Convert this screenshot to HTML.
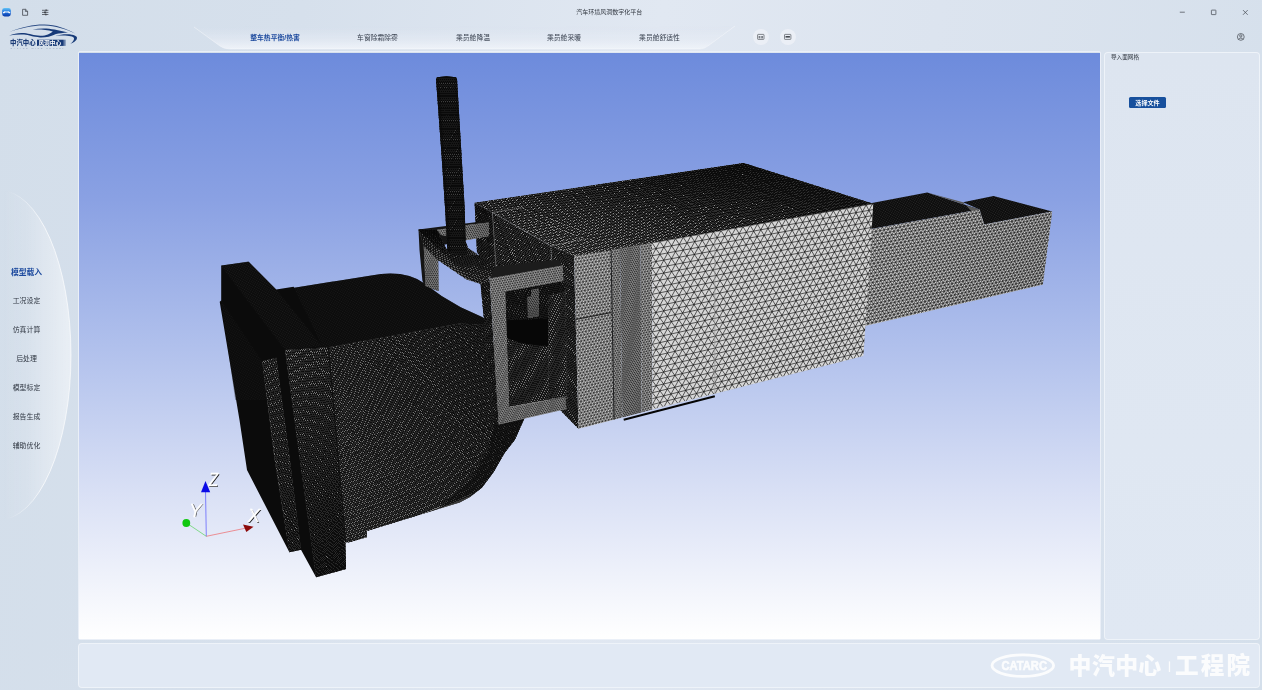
<!DOCTYPE html>
<html lang="zh-CN">
<head>
<meta charset="utf-8">
<title>汽车环境风洞数字化平台</title>
<style>
*{box-sizing:border-box;margin:0;padding:0}
html,body{width:1262px;height:690px;overflow:hidden}
body{font-family:"Liberation Sans","Noto Sans CJK SC",sans-serif;color:#2b3440;position:relative;
 background:linear-gradient(100deg,#d3deea 0%,#d6e0ec 22%,#e1e8f2 48%,#dce4ef 68%,#d4dfeb 100%)}
.abs{position:absolute}
#side,#tabs,#title,#rpanel,#bpanel,.logo{will-change:transform}
#title{left:0;width:1218.4px;top:7px;text-align:center;font-size:6px;line-height:10px;color:#30363f}
.winbtn{top:0;width:30px;height:24px}
#tabs{left:0;top:0;width:1262px;height:53px}
.tab{top:32.3px;height:12px;line-height:12px;font-size:6.8px;color:#3a4250;white-space:nowrap;transform:translateX(-50%)}
.tab.on{color:#1d4a9e;font-weight:bold}
.cbtn{width:16px;height:16px;border-radius:50%;background:rgba(236,240,246,.9);top:29px}
#side{left:0;top:53px;width:79px;height:637px}
.nav{left:0;width:53px;text-align:center;font-size:6.9px;line-height:12px;height:12px;color:#2f3641;white-space:nowrap}
.nav.on{color:#1d4a9e;font-weight:bold;font-size:7.8px}
#view{left:79px;top:53px;width:1021.3px;height:586px;background:linear-gradient(180deg,#6d8bdc 0%,#8aa1e3 25%,#b0c0ec 50%,#d9e0f5 75%,#ffffff 100%);overflow:hidden}
#viewborder{left:78px;top:51px;width:1023.3px;height:589px;border:1.5px solid rgba(236,241,248,.9);border-radius:2px}
#rpanel{left:1104px;top:52px;width:156px;height:588px;border:1px solid rgba(240,244,250,.9);border-radius:4px;background:linear-gradient(180deg,#dde5f0,#e0e8f3)}
#rpanel .h{left:6px;top:0.4px;font-size:5.6px;line-height:8px;color:#30363f}
#btn{left:24px;top:44.2px;width:37px;height:11.3px;border-radius:1.5px;background:#17509d;color:#fff;font-weight:bold;font-size:6.1px;line-height:11.3px;text-align:center}
#bpanel{left:78px;top:643px;width:1182px;height:45px;border:1px solid rgba(240,244,250,.9);border-radius:4px;background:#e1e9f4}
</style>
</head>
<body>
<div id="tabs" class="abs">
<svg class="abs" style="left:0;top:0" width="1262" height="53" viewBox="0 0 1262 53">
 <defs>
  <linearGradient id="tg" x1="0" y1="0" x2="0" y2="1"><stop offset="0" stop-color="#dfe6f1" stop-opacity="0"/><stop offset="1" stop-color="#eef2f8" stop-opacity="1"/></linearGradient>
 </defs>
 <path d="M194 27 L220 46 Q224 49 230 49 L700 49 Q704 49 708 46 L735 26 Z" fill="url(#tg)"/>
 <path d="M194 27 L220 46 Q224 49 230 49 L700 49 Q704 49 708 46 L735 26" fill="none" stroke="#f3f6fa" stroke-width="0.9" opacity="0.6"/>
</svg>
<div class="abs tab on" style="left:275px">整车热平衡/热害</div>
<div class="abs tab" style="left:377.5px">车窗除霜除雾</div>
<div class="abs tab" style="left:473px">乘员舱降温</div>
<div class="abs tab" style="left:564px">乘员舱采暖</div>
<div class="abs tab" style="left:659.5px">乘员舱舒适性</div>
<div class="abs cbtn" style="left:753px"></div>
<div class="abs cbtn" style="left:779.5px"></div>
</div>
<svg class="abs logo" style="left:0;top:0" width="90" height="54" viewBox="0 0 90 54">
 <defs><linearGradient id="ig" x1="0" y1="0" x2="0" y2="1"><stop offset="0" stop-color="#62c4f6"/><stop offset="0.5" stop-color="#1f6fdc"/><stop offset="1" stop-color="#0a3aa8"/></linearGradient>
 <linearGradient id="lb" x1="0" y1="0" x2="1" y2="0"><stop offset="0" stop-color="#173a78"/><stop offset="0.88" stop-color="#173a78"/><stop offset="1" stop-color="#173a78" stop-opacity="0.25"/></linearGradient></defs>
 <rect x="2.2" y="8" width="8.6" height="8.4" rx="2.3" fill="url(#ig)"/>
 <path d="M3 12.3 L4.6 11.2 L6 11.5 L7.2 11.5 L8.6 11.2 L10.2 12.3 L10.2 13.3 L8.8 13.3 L8.2 12.6 L5 12.6 L4.4 13.3 L3 13.3 Z" fill="#fff"/>
 <path d="M22.6 9.3 L25.6 9.3 L27.6 11.2 L27.6 15.3 L22.6 15.3 Z M25.4 9.4 L25.4 11.4 L27.5 11.4" fill="none" stroke="#3c4048" stroke-width="0.75" stroke-linejoin="round"/>
 <g stroke="#33363c" stroke-width="0.7" fill="none"><path d="M42 10.3H48.4M42 12.4H48.4M42 14.5H48.4"/></g>
 <g fill="#33363c"><rect x="45.6" y="9.4" width="1" height="1.8"/><rect x="44.2" y="11.5" width="1.6" height="1.8"/><rect x="45.4" y="13.6" width="1" height="1.8"/></g>
 <!-- car logo -->
 <g fill="#173a78">
  <path d="M9.2 32 C22 27 34 24.4 44.5 24.6 C56 24.8 66 28.5 75 33.4 C65 29.2 55.5 25.9 44.5 25.6 C34 25.3 22 28 9.2 32 Z" opacity="0.9"/>
  <path d="M9.2 35.6 C14 33.6 19 32.6 24 33.1 C30 33.7 34 36 41 35.8 C46 35.6 50.5 33.6 52.8 31.4 C47 29.7 40 29.3 32.6 29.6 C40 28 48 28.2 54.5 29.6 C59 30.6 64 31.6 68 32.4 C63 32.8 59 33.2 56 33.9 C51 36.6 45 37.6 40 37.4 C33 37.1 29 35 24 34.6 C19 34.2 14 34.8 9.2 35.6 Z"/>
  <path d="M55.5 35.9 C61 34.2 67 33.9 72 34.7 C76 35.4 78 37 76.6 39.4 C75.5 41.2 73 42.8 70.4 43.8 C72.6 42 74.4 39.8 74 38.2 C73.4 36 66 35 55.5 35.9 Z"/>
 </g>
 <text x="10.1" y="45.4" font-size="6.4" font-weight="900" fill="#1b3b76" font-family="'Liberation Sans','Noto Sans CJK SC',sans-serif">中汽中心</text>
 <rect x="37" y="39.7" width="29" height="6.2" fill="url(#lb)"/>
 <text x="38.4" y="44.9" font-size="5.7" font-weight="bold" fill="#fff" font-family="'Liberation Sans','Noto Sans CJK SC',sans-serif">风洞中心</text>
 <text x="10.4" y="49.3" font-size="2.3" fill="#8796b2" font-style="italic" letter-spacing="1.62" font-family="'Liberation Sans',sans-serif">CATARC WIND TUNNEL</text>
</svg>
<svg class="abs" style="left:1160px;top:0" width="102" height="50" viewBox="1160 0 102 50">
 <g stroke="#4a4f57" stroke-width="0.75" fill="none">
 <path d="M1179.8 12.2H1184.8"/><rect x="1211.4" y="10.1" width="4.5" height="4.5" rx="0.4"/><path d="M1243 10.1L1247.7 14.8M1247.7 10.1L1243 14.8"/>
 <circle cx="1240.8" cy="36.9" r="3.4"/><circle cx="1240.8" cy="35.9" r="1.15"/><path d="M1238.5 39.4C1239 37.6 1242.6 37.6 1243.1 39.4"/></g>
</svg>
<svg class="abs" style="left:750px;top:27px" width="50" height="20" viewBox="750 27 50 20">
 <g fill="none" stroke="#55595f" stroke-width="0.7"><rect x="757.6" y="34.4" width="6.4" height="5" rx="0.6"/><rect x="784.5" y="34.4" width="6.4" height="5" rx="0.6"/></g>
 <g fill="#7b7f86"><rect x="758.6" y="36" width="1.8" height="2.4"/><rect x="761.2" y="36" width="1.8" height="2.4"/><rect x="785.5" y="36" width="4.4" height="1.6" fill="#44484e"/></g>
</svg>
<div id="title" class="abs">汽车环境风洞数字化平台</div>

<div id="side" class="abs" style="top:0;height:690px">
<svg class="abs" style="left:0;top:0" width="79" height="690" viewBox="0 0 79 690">
 <defs>
  <linearGradient id="ag" x1="0" y1="0" x2="71" y2="0" gradientUnits="userSpaceOnUse"><stop offset="0" stop-color="#fff" stop-opacity="0"/><stop offset="0.35" stop-color="#fff" stop-opacity="0.08"/><stop offset="1" stop-color="#fff" stop-opacity="0.5"/></linearGradient>
  <linearGradient id="as" x1="0" y1="0" x2="71" y2="0" gradientUnits="userSpaceOnUse"><stop offset="0.1" stop-color="#fff" stop-opacity="0"/><stop offset="0.6" stop-color="#fff" stop-opacity="0.8"/><stop offset="1" stop-color="#fff" stop-opacity="0.7"/></linearGradient>
 </defs>
 <ellipse cx="-1" cy="355" rx="72" ry="165" fill="url(#ag)" stroke="url(#as)" stroke-width="0.9"/>
</svg>
<div class="abs nav on" style="top:267.4px">模型载入</div>
<div class="abs nav" style="top:295.0px">工况设定</div>
<div class="abs nav" style="top:323.5px">仿真计算</div>
<div class="abs nav" style="top:352.5px">后处理</div>
<div class="abs nav" style="top:381.5px">模型标定</div>
<div class="abs nav" style="top:410.5px">报告生成</div>
<div class="abs nav" style="top:439.5px">辅助优化</div>
</div>

<div id="viewborder" class="abs"></div>
<div id="view" class="abs">
<!--MODEL-->
<svg class="abs" style="left:0;top:0;filter:blur(0.45px)" width="1022" height="586" viewBox="79 53 1022 586" shape-rendering="auto">
<defs>
<pattern id="pd1" width="2" height="2" patternUnits="userSpaceOnUse" patternTransform="rotate(30)"><rect width="2" height="2" fill="#0c0c0c"/><rect width="1" height="1" fill="#2a2a2a"/></pattern>
<pattern id="pd2" width="2.2" height="2.2" patternUnits="userSpaceOnUse" patternTransform="rotate(20)"><rect width="2.2" height="2.2" fill="#1a1a1a"/><circle cx="1.1" cy="1.1" r="0.62" fill="#4c4c4c"/></pattern>
<pattern id="pd3" width="2" height="2" patternUnits="userSpaceOnUse" patternTransform="rotate(-12)"><rect width="2" height="2" fill="#1a1a1a"/><rect width="1" height="1" fill="#2e2e2e"/></pattern>
<pattern id="pf" width="2.4" height="2.4" patternUnits="userSpaceOnUse" patternTransform="rotate(-10)"><rect width="2.4" height="2.4" fill="#3a3a3a"/><circle cx="1.2" cy="1.2" r="0.85" fill="#c4c4c4"/></pattern>
<pattern id="pg" width="2" height="2" patternUnits="userSpaceOnUse" patternTransform="rotate(15)"><rect width="2" height="2" fill="#222"/><circle cx="1" cy="1" r="0.6" fill="#777"/></pattern>
</defs>
<polygon points="221.2,265.5 248.7,261.7 276.2,289.4 293.6,286.7 294.3,287.7 340.0,280.4 371.3,275.5 381.0,274.0 390.3,273.4 400.0,274.0 409.3,275.9 417.0,279.0 424.5,283.5 441.6,295.9 460.7,307.3 481.6,316.8 484.6,318.4 490.0,325.0 497.0,360.0 500.0,400.0 525.0,417.0 514.8,439.8 504.5,453.0 493.6,472.0 482.0,487.4 470.0,497.0 459.6,502.4 366.8,531.0 366.8,537.3 349.0,542.3 343.5,542.3 346.0,569.0 316.1,577.3 301.0,549.8 289.4,552.3 247.0,470.0 239.5,420.0 219.7,301.8 221.2,300.5" fill="#0b0b0b"/>
<polygon points="293.6,286.7 294.3,287.7 340.0,280.4 371.3,275.5 381.0,274.0 390.3,273.4 400.0,274.0 409.3,275.9 417.0,279.0 424.5,283.5 441.6,295.9 460.7,307.3 481.6,316.8 484.6,318.4 486.0,324.9 459.6,323.6 327.0,347.4 322.0,346.0" fill="url(#pd1)" opacity="0.45"/>
<polygon points="221.1,265.8 248.3,261.6 276.2,289.4 322.0,346.0 285.0,350.0" fill="url(#pd1)" opacity="0.55"/>
<polygon points="221.2,300.5 262.2,361.3 267.1,400.0 250.0,400.0 235.2,400.0" fill="url(#pd1)" opacity="0.35"/>
<clipPath id="c1"><polygon points="328.4,347.2 459.6,323.6 486.0,324.9 492.0,345.0 497.0,400.0 525.0,417.0 514.8,439.8 504.5,453.0 493.6,472.0 482.0,487.4 470.0,497.0 459.6,502.4 366.8,531.0 366.8,537.3 349.0,542.3 345.6,542.3 338.4,460.0 333.1,400.0"/></clipPath>
<polygon points="328.4,347.2 459.6,323.6 486.0,324.9 492.0,345.0 497.0,400.0 525.0,417.0 514.8,439.8 504.5,453.0 493.6,472.0 482.0,487.4 470.0,497.0 459.6,502.4 366.8,531.0 366.8,537.3 349.0,542.3 345.6,542.3 338.4,460.0 333.1,400.0" fill="#707070"/>
<path clip-path="url(#c1)" d="M324.1 348.0L502.8 316.0M324.3 349.7L503.0 317.3M324.4 351.4L503.3 318.7M324.6 353.1L503.6 320.0M324.7 354.8L503.8 321.4M324.9 356.5L504.1 322.7M325.0 358.2L504.4 324.1M325.1 359.9L504.6 325.4M325.3 361.7L504.9 326.8M325.4 363.4L505.2 328.1M325.6 365.1L505.4 329.5M325.7 366.9L505.7 330.8M325.9 368.6L506.0 332.2M326.0 370.3L506.2 333.6M326.2 372.1L506.5 334.9M326.3 373.8L506.8 336.3M326.5 375.6L507.0 337.7M326.6 377.3L507.3 339.0M326.8 379.1L507.6 340.4M326.9 380.9L507.9 341.8M327.1 382.6L508.1 343.2M327.2 384.4L508.4 344.6M327.4 386.2L508.7 345.9M327.5 388.0L508.9 347.3M327.7 389.8L509.2 348.7M327.8 391.5L509.5 350.1M328.0 393.3L509.8 351.5M328.1 395.1L510.0 352.9M328.3 396.9L510.3 354.3M328.4 398.7L510.6 355.7M328.6 400.5L510.9 357.1M328.7 402.3L511.1 358.5M328.9 404.2L511.4 359.9M329.0 406.0L511.7 361.3M329.2 407.8L512.0 362.7M329.3 409.6L512.3 364.2M329.5 411.5L512.5 365.6M329.6 413.3L512.8 367.0M329.8 415.1L513.1 368.4M330.0 417.0L513.4 369.8M330.1 418.8L513.7 371.3M330.3 420.7L513.9 372.7M330.4 422.5L514.2 374.1M330.6 424.4L514.5 375.6M330.7 426.2L514.8 377.0M330.9 428.1L515.1 378.4M331.1 430.0L515.4 379.9M331.2 431.9L515.7 381.3M331.4 433.7L515.9 382.8M331.5 435.6L516.2 384.2M331.7 437.5L516.5 385.7M331.8 439.4L516.8 387.1M332.0 441.3L517.1 388.6M332.2 443.2L517.4 390.1M332.3 445.1L517.7 391.5M332.5 447.0L517.9 393.0M332.6 448.9L518.2 394.5M332.8 450.8L518.5 395.9M333.0 452.7L518.8 397.4M333.1 454.7L519.1 398.9M333.3 456.6L519.4 400.4M333.5 458.5L519.7 401.8M333.6 460.5L520.0 403.3M333.8 462.4L520.3 404.8M334.0 464.4L520.6 406.3M334.1 466.3L520.9 407.8M334.3 468.3L521.2 409.3M334.4 470.2L521.5 410.8M334.6 472.2L521.8 412.3M334.8 474.2L522.0 413.8M334.9 476.1L522.3 415.3M335.1 478.1L522.6 416.8M335.3 480.1L522.9 418.3M335.4 482.1L523.2 419.8M335.6 484.1L523.5 421.3M335.8 486.1L523.8 422.8M335.9 488.0L524.1 424.4M336.1 490.1L524.4 425.9M336.3 492.1L524.7 427.4M336.5 494.1L525.0 428.9M336.6 496.1L525.3 430.5M336.8 498.1L525.6 432.0M337.0 500.1L525.9 433.5M337.1 502.2L526.3 435.1M337.3 504.2L526.6 436.6M337.5 506.2L526.9 438.2M337.7 508.3L527.2 439.7M337.8 510.3L527.5 441.3M338.0 512.4L527.8 442.8M338.2 514.4L528.1 444.4M338.3 516.5L528.4 445.9M338.5 518.6L528.7 447.5M338.7 520.7L529.0 449.1M338.9 522.7L529.3 450.6M339.0 524.8L529.6 452.2M339.2 526.9L529.9 453.8M339.4 529.0L530.2 455.3M339.6 531.1L530.6 456.9M339.8 533.2L530.9 458.5M339.9 535.3L531.2 460.1M340.1 537.4L531.5 461.7M340.3 539.5L531.8 463.3M340.5 541.6L532.1 464.9M340.6 543.8L532.4 466.5M340.8 545.9L532.8 468.1M341.0 548.0L533.1 469.7M154.4 378.3L340.3 547.1M154.4 378.3L-145.1 744.6M158.3 377.6L343.3 545.9M158.3 377.6L-138.0 741.7M162.1 377.0L346.3 544.7M162.1 377.0L-130.9 738.8M165.8 376.3L349.3 543.5M165.8 376.3L-123.9 735.9M169.6 375.6L352.2 542.3M169.6 375.6L-116.9 733.1M173.3 374.9L355.1 541.1M173.3 374.9L-110.1 730.3M177.0 374.3L358.0 540.0M177.0 374.3L-103.3 727.6M180.7 373.6L360.9 538.8M180.7 373.6L-96.6 724.8M184.3 373.0L363.7 537.6M184.3 373.0L-89.9 722.1M188.0 372.3L366.6 536.5M188.0 372.3L-83.3 719.4M191.6 371.7L369.4 535.3M191.6 371.7L-76.8 716.8M195.1 371.0L372.2 534.2M195.1 371.0L-70.3 714.2M198.7 370.4L375.0 533.1M198.7 370.4L-63.9 711.6M202.2 369.8L377.7 531.9M202.2 369.8L-57.6 709.0M205.7 369.2L380.5 530.8M205.7 369.2L-51.3 706.4M209.2 368.5L383.2 529.7M209.2 368.5L-45.1 703.9M212.6 367.9L385.9 528.6M212.6 367.9L-39.0 701.4M216.0 367.3L388.6 527.5M216.0 367.3L-32.9 698.9M219.4 366.7L391.3 526.4M219.4 366.7L-26.8 696.5M222.8 366.1L393.9 525.3M222.8 366.1L-20.9 694.1M226.2 365.5L396.6 524.3M226.2 365.5L-15.0 691.6M229.5 364.9L399.2 523.2M229.5 364.9L-9.1 689.3M232.8 364.3L401.8 522.1M232.8 364.3L-3.3 686.9M236.1 363.7L404.4 521.1M236.1 363.7L2.5 684.6M239.4 363.1L407.0 520.0M239.4 363.1L8.2 682.2M242.7 362.5L409.6 519.0M242.7 362.5L13.8 679.9M245.9 362.0L412.1 518.0M245.9 362.0L19.4 677.7M249.1 361.4L414.6 516.9M249.1 361.4L25.0 675.4M252.3 360.8L417.1 515.9M252.3 360.8L30.5 673.2M255.4 360.3L419.6 514.9M255.4 360.3L35.9 671.0M258.6 359.7L422.1 513.9M258.6 359.7L41.3 668.8M261.7 359.1L424.6 512.9M261.7 359.1L46.6 666.6M264.8 358.6L427.0 511.9M264.8 358.6L51.9 664.4M267.9 358.0L429.5 510.9M267.9 358.0L57.2 662.3M271.0 357.5L431.9 509.9M271.0 357.5L62.4 660.2M274.0 356.9L434.3 508.9M274.0 356.9L67.5 658.1M277.0 356.4L436.7 507.9M277.0 356.4L72.7 656.0M280.0 355.9L439.1 507.0M280.0 355.9L77.7 654.0M283.0 355.3L441.4 506.0M283.0 355.3L82.7 651.9M286.0 354.8L443.8 505.1M286.0 354.8L87.7 649.9M289.0 354.3L446.1 504.1M289.0 354.3L92.7 647.9M291.9 353.7L448.5 503.2M291.9 353.7L97.5 645.9M294.8 353.2L450.8 502.2M294.8 353.2L102.4 643.9M297.7 352.7L453.1 501.3M297.7 352.7L107.2 642.0M300.6 352.2L455.3 500.4M300.6 352.2L112.0 640.0M303.4 351.7L457.6 499.4M303.4 351.7L116.7 638.1M306.3 351.2L459.9 498.5M306.3 351.2L121.4 636.2M309.1 350.7L462.1 497.6M309.1 350.7L126.0 634.3M311.9 350.2L464.3 496.7M311.9 350.2L130.7 632.4M314.7 349.7L466.5 495.8M314.7 349.7L135.2 630.6M317.5 349.2L468.7 494.9M317.5 349.2L139.8 628.7M320.2 348.7L470.9 494.0M320.2 348.7L144.3 626.9M323.0 348.2L473.1 493.1M323.0 348.2L148.7 625.1M325.7 347.7L475.3 492.3M325.7 347.7L153.1 623.3M328.4 347.2L477.4 491.4M328.4 347.2L157.5 621.5M331.1 346.7L479.6 490.5M331.1 346.7L161.9 619.7M333.8 346.2L481.7 489.6M333.8 346.2L166.2 618.0M336.4 345.8L483.8 488.8M336.4 345.8L170.5 616.2M339.1 345.3L485.9 487.9M339.1 345.3L174.7 614.5M341.7 344.8L488.0 487.1M341.7 344.8L178.9 612.8M344.3 344.4L490.1 486.2M344.3 344.4L183.1 611.1M346.9 343.9L492.2 485.4M346.9 343.9L187.3 609.4M349.5 343.4L494.2 484.6M349.5 343.4L191.4 607.7M352.1 343.0L496.3 483.7M352.1 343.0L195.4 606.1M354.6 342.5L498.3 482.9M354.6 342.5L199.5 604.4M357.1 342.1L500.3 482.1M357.1 342.1L203.5 602.8M359.7 341.6L502.3 481.3M359.7 341.6L207.5 601.2M362.2 341.2L504.3 480.4M362.2 341.2L211.5 599.6M364.7 340.7L506.3 479.6M364.7 340.7L215.4 598.0M367.1 340.3L508.3 478.8M367.1 340.3L219.3 596.4M369.6 339.8L510.3 478.0M369.6 339.8L223.1 594.8M372.1 339.4L512.2 477.2M372.1 339.4L227.0 593.3M374.5 339.0L514.2 476.4M374.5 339.0L230.8 591.7M376.9 338.5L516.1 475.6M376.9 338.5L234.5 590.2M379.3 338.1L518.0 474.9M379.3 338.1L238.3 588.6M381.7 337.7L520.0 474.1M381.7 337.7L242.0 587.1M384.1 337.2L521.9 473.3M384.1 337.2L245.7 585.6M386.5 336.8L523.8 472.5M386.5 336.8L249.4 584.1M388.8 336.4L525.6 471.8M388.8 336.4L253.0 582.7M391.2 336.0L527.5 471.0M391.2 336.0L256.6 581.2M393.5 335.6L529.4 470.3M393.5 335.6L260.2 579.7M395.8 335.1L531.2 469.5M395.8 335.1L263.8 578.3M398.1 334.7L533.1 468.7M398.1 334.7L267.3 576.9M400.4 334.3L534.9 468.0M400.4 334.3L270.8 575.4M402.7 333.9L536.7 467.3M402.7 333.9L274.3 574.0M405.0 333.5L538.6 466.5M405.0 333.5L277.7 572.6M407.2 333.1L540.4 465.8M407.2 333.1L281.2 571.2M409.4 332.7L542.2 465.1M409.4 332.7L284.6 569.8M411.7 332.3L543.9 464.3M411.7 332.3L287.9 568.4M413.9 331.9L545.7 463.6M413.9 331.9L291.3 567.1M416.1 331.5L547.5 462.9M416.1 331.5L294.6 565.7M418.3 331.1L549.2 462.2M418.3 331.1L297.9 564.4M420.5 330.7L551.0 461.5M420.5 330.7L301.2 563.0M422.6 330.3L552.7 460.8M422.6 330.3L304.5 561.7M424.8 330.0L554.5 460.0M424.8 330.0L307.7 560.4M426.9 329.6L556.2 459.3M426.9 329.6L310.9 559.1M429.1 329.2L557.9 458.6M429.1 329.2L314.1 557.8M431.2 328.8L559.6 458.0M431.2 328.8L317.3 556.5M433.3 328.4L561.3 457.3M433.3 328.4L320.5 555.2M435.4 328.1L563.0 456.6M435.4 328.1L323.6 554.0M437.5 327.7L564.7 455.9M437.5 327.7L326.7 552.7M439.6 327.3L566.4 455.2M439.6 327.3L329.8 551.4M441.6 326.9L568.0 454.5M441.6 326.9L332.8 550.2M443.7 326.6L569.7 453.9M443.7 326.6L335.9 548.9M445.7 326.2L571.3 453.2M445.7 326.2L338.9 547.7M447.8 325.8L573.0 452.5M447.8 325.8L341.9 546.5M449.8 325.5L574.6 451.9M449.8 325.5L344.9 545.3M451.8 325.1L576.2 451.2M451.8 325.1L347.9 544.1M453.8 324.8L577.8 450.5M453.8 324.8L350.8 542.9M455.8 324.4L579.4 449.9M455.8 324.4L353.7 541.7M457.8 324.0L581.0 449.2M457.8 324.0L356.6 540.5M459.8 323.7L582.6 448.6M459.8 323.7L359.5 539.3M461.7 323.3L584.2 448.0M461.7 323.3L362.4 538.2M463.7 323.0L585.8 447.3M463.7 323.0L365.2 537.0M465.6 322.6L587.3 446.7M465.6 322.6L368.1 535.9M467.6 322.3L588.9 446.0M467.6 322.3L370.9 534.7M469.5 322.0L590.5 445.4M469.5 322.0L373.7 533.6M471.4 321.6L592.0 444.8M471.4 321.6L376.4 532.5M473.3 321.3L593.5 444.2M473.3 321.3L379.2 531.3M475.2 320.9L595.1 443.5M475.2 320.9L381.9 530.2M477.1 320.6L596.6 442.9M477.1 320.6L384.6 529.1M479.0 320.3L598.1 442.3M479.0 320.3L387.3 528.0M480.8 319.9L599.6 441.7M480.8 319.9L390.0 526.9M482.7 319.6L601.1 441.1M482.7 319.6L392.7 525.8M484.5 319.3L602.6 440.5M484.5 319.3L395.3 524.8M486.4 318.9L604.1 439.9M486.4 318.9L398.0 523.7M488.2 318.6L605.6 439.3M488.2 318.6L400.6 522.6M490.0 318.3L607.0 438.7M490.0 318.3L403.2 521.6M491.8 318.0L608.5 438.1M491.8 318.0L405.8 520.5M493.6 317.6L610.0 437.5M493.6 317.6L408.3 519.5M495.4 317.3L611.4 436.9M495.4 317.3L410.9 518.4M497.2 317.0L612.9 436.3M497.2 317.0L413.4 517.4M499.0 316.7L614.3 435.7M499.0 316.7L416.0 516.4M500.8 316.4L615.7 435.1M500.8 316.4L418.5 515.4M502.5 316.0L617.2 434.6M502.5 316.0L420.9 514.4M504.3 315.7L618.6 434.0M504.3 315.7L423.4 513.3M506.0 315.4L620.0 433.4M506.0 315.4L425.9 512.3M507.7 315.1L621.4 432.8M507.7 315.1L428.3 511.4M509.5 314.8L622.8 432.3M509.5 314.8L430.8 510.4M511.2 314.5L624.2 431.7M511.2 314.5L433.2 509.4M512.9 314.2L625.6 431.1M512.9 314.2L435.6 508.4M514.6 313.9L626.9 430.6M514.6 313.9L438.0 507.4M516.3 313.6L628.3 430.0M516.3 313.6L440.3 506.5M518.0 313.3L629.7 429.5M518.0 313.3L442.7 505.5M519.6 313.0L631.0 428.9M519.6 313.0L445.0 504.6M521.3 312.7L632.4 428.4M521.3 312.7L447.4 503.6M523.0 312.4L633.7 427.8M523.0 312.4L449.7 502.7M524.6 312.1L635.1 427.3M524.6 312.1L452.0 501.7M526.3 311.8L636.4 426.7M526.3 311.8L454.3 500.8M527.9 311.5L637.8 426.2M527.9 311.5L456.5 499.9M529.5 311.2L639.1 425.6M529.5 311.2L458.8 499.0M531.2 310.9L640.4 425.1M531.2 310.9L461.0 498.0M532.8 310.6L641.7 424.6M532.8 310.6L463.3 497.1M534.4 310.3L643.0 424.0M534.4 310.3L465.5 496.2M536.0 310.1L644.3 423.5M536.0 310.1L467.7 495.3M537.6 309.8L645.6 423.0M537.6 309.8L469.9 494.4M539.2 309.5L646.9 422.5M539.2 309.5L472.1 493.6M540.7 309.2L648.2 421.9M540.7 309.2L474.3 492.7M542.3 308.9L649.5 421.4M542.3 308.9L476.4 491.8M543.9 308.6L650.7 420.9M543.9 308.6L478.6 490.9M545.4 308.4L652.0 420.4M545.4 308.4L480.7 490.1M547.0 308.1L653.3 419.9M547.0 308.1L482.8 489.2M548.5 307.8L654.5 419.4M548.5 307.8L484.9 488.3M550.1 307.5L655.8 418.8M550.1 307.5L487.0 487.5M551.6 307.3L657.0 418.3M551.6 307.3L489.1 486.6M553.1 307.0L658.2 417.8M553.1 307.0L491.2 485.8M554.6 306.7L659.5 417.3M554.6 306.7L493.3 484.9M556.1 306.5L660.7 416.8M556.1 306.5L495.3 484.1M557.6 306.2L661.9 416.3M557.6 306.2L497.3 483.3M559.1 305.9L663.1 415.8M559.1 305.9L499.4 482.5M560.6 305.7L664.4 415.4M560.6 305.7L501.4 481.6M562.1 305.4L665.6 414.9M562.1 305.4L503.4 480.8M563.6 305.1L666.8 414.4M563.6 305.1L505.4 480.0M565.1 304.9L668.0 413.9M565.1 304.9L507.4 479.2M566.5 304.6L669.2 413.4M566.5 304.6L509.3 478.4M568.0 304.3L670.3 412.9M568.0 304.3L511.3 477.6M569.4 304.1L671.5 412.4M569.4 304.1L513.3 476.8M570.9 303.8L672.7 412.0M570.9 303.8L515.2 476.0M572.3 303.6L673.9 411.5M572.3 303.6L517.1 475.2M573.7 303.3L675.0 411.0M573.7 303.3L519.1 474.5M575.2 303.1L676.2 410.5M575.2 303.1L521.0 473.7M576.6 302.8L677.4 410.1M576.6 302.8L522.9 472.9M578.0 302.5L678.5 409.6M578.0 302.5L524.7 472.1M579.4 302.3L679.7 409.1M579.4 302.3L526.6 471.4M580.8 302.0L680.8 408.7M580.8 302.0L528.5 470.6M582.2 301.8L681.9 408.2M582.2 301.8L530.4 469.9M583.6 301.5L683.1 407.7M583.6 301.5L532.2 469.1" stroke="#050505" stroke-width="0.7" fill="none" opacity="1" shape-rendering="crispEdges"/>
<polygon points="497.0,400.0 525.0,417.0 514.8,439.8 504.5,453.0 493.6,472.0 482.0,487.4 470.0,497.0 459.6,502.4 440.0,508.0 470.0,480.0 488.0,450.0 495.0,420.0" fill="#0b0b0b" opacity="0.55"/>
<clipPath id="c2"><polygon points="285.0,350.0 328.4,347.2 333.1,400.0 338.4,460.0 345.6,542.3 346.0,569.0 316.1,577.3 299.9,460.0 291.8,400.0"/></clipPath>
<polygon points="285.0,350.0 328.4,347.2 333.1,400.0 338.4,460.0 345.6,542.3 346.0,569.0 316.1,577.3 299.9,460.0 291.8,400.0" fill="#767676"/>
<path clip-path="url(#c2)" d="M284.1 350.1L329.2 347.1M284.5 352.7L329.4 349.7M284.8 355.3L329.6 352.2M285.2 357.9L329.8 354.7M285.5 360.4L330.0 357.1M285.9 363.0L330.2 359.6M286.2 365.5L330.4 362.0M286.6 368.0L330.6 364.4M286.9 370.5L330.8 366.8M287.3 373.0L331.0 369.2M287.6 375.4L331.1 371.6M287.9 377.9L331.3 374.0M288.3 380.3L331.5 376.3M288.6 382.7L331.7 378.6M288.9 385.1L331.9 381.0M289.3 387.5L332.1 383.3M289.6 389.9L332.2 385.5M289.9 392.2L332.4 387.8M290.2 394.5L332.6 390.1M290.6 396.9L332.8 392.3M290.9 399.2L332.9 394.5M291.2 401.4L333.1 396.8M291.5 403.7L333.3 399.0M291.8 406.0L333.5 401.2M292.1 408.2L333.6 403.3M292.4 410.5L333.8 405.5M292.7 412.7L334.0 407.6M293.0 414.9L334.1 409.8M293.3 417.1L334.3 411.9M293.6 419.2L334.5 414.0M293.9 421.4L334.6 416.1M294.2 423.5L334.8 418.2M294.5 425.7L335.0 420.3M294.8 427.8L335.1 422.3M295.1 429.9L335.3 424.4M295.4 432.0L335.4 426.4M295.7 434.1L335.6 428.4M296.0 436.2L335.8 430.4M296.3 438.2L335.9 432.4M296.5 440.3L336.1 434.4M296.8 442.3L336.2 436.4M297.1 444.3L336.4 438.4M297.4 446.3L336.5 440.3M297.7 448.3L336.7 442.3M297.9 450.3L336.8 444.2M298.2 452.3L337.0 446.1M298.5 454.2L337.1 448.0M298.7 456.2L337.3 449.9M299.0 458.1L337.4 451.8M299.3 460.0L337.6 453.7M299.5 461.9L337.7 455.5M299.8 463.8L337.9 457.4M300.1 465.7L338.0 459.2M300.3 467.6L338.1 461.1M300.6 469.5L338.3 462.9M300.8 471.3L338.4 464.7M301.1 473.2L338.6 466.5M301.3 475.0L338.7 468.3M301.6 476.9L338.9 470.1M301.8 478.7L339.0 471.9M302.1 480.5L339.1 473.6M302.3 482.3L339.3 475.4M302.6 484.1L339.4 477.1M302.8 485.8L339.5 478.8M303.1 487.6L339.7 480.6M303.3 489.3L339.8 482.3M303.6 491.1L339.9 484.0M303.8 492.8L340.1 485.7M304.0 494.6L340.2 487.4M304.3 496.3L340.3 489.1M304.5 498.0L340.5 490.7M304.7 499.7L340.6 492.4M305.0 501.4L340.7 494.0M305.2 503.0L340.9 495.7M305.4 504.7L341.0 497.3M305.7 506.4L341.1 498.9M305.9 508.0L341.2 500.5M306.1 509.7L341.4 502.2M306.3 511.3L341.5 503.8M306.6 512.9L341.6 505.3M306.8 514.5L341.7 506.9M307.0 516.1L341.9 508.5M307.2 517.7L342.0 510.1M307.5 519.3L342.1 511.6M307.7 520.9L342.2 513.2M307.9 522.5L342.3 514.7M308.1 524.0L342.5 516.3M308.3 525.6L342.6 517.8M308.5 527.1L342.7 519.3M308.7 528.7L342.8 520.8M309.0 530.2L342.9 522.3M309.2 531.7L343.1 523.8M309.4 533.2L343.2 525.3M309.6 534.7L343.3 526.8M309.8 536.2L343.4 528.2M310.0 537.7L343.5 529.7M310.2 539.2L343.6 531.2M310.4 540.7L343.7 532.6M310.6 542.2L343.9 534.1M310.8 543.6L344.0 535.5M311.0 545.1L344.1 536.9M311.2 546.5L344.2 538.3M311.4 548.0L344.3 539.8M311.6 549.4L344.4 541.2M311.8 550.8L344.5 542.6M312.0 552.2L344.6 544.0M312.2 553.6L344.7 545.3M312.4 555.0L344.9 546.7M312.6 556.4L345.0 548.1M312.8 557.8L345.1 549.5M313.0 559.2L345.2 550.8M313.2 560.6L345.3 552.2M313.3 561.9L345.4 553.5M313.5 563.3L345.5 554.9M313.7 564.7L345.6 556.2M313.9 566.0L345.7 557.5M314.1 567.3L345.8 558.9M314.3 568.7L345.9 560.2M314.5 570.0L346.0 561.5M314.6 571.3L346.1 562.8M314.8 572.6L346.2 564.1M315.0 573.9L346.3 565.4M315.2 575.3L346.4 566.6M315.4 576.5L346.5 567.9M315.5 577.8L346.6 569.2M126.1 360.3L314.4 577.8M126.1 360.3L89.0 640.3M129.0 360.1L315.9 577.4M129.0 360.1L91.2 639.7M131.8 359.9L317.4 576.9M131.8 359.9L93.4 639.1M134.7 359.7L318.9 576.5M134.7 359.7L95.6 638.5M137.5 359.5L320.4 576.1M137.5 359.5L97.7 637.9M140.3 359.3L321.9 575.7M140.3 359.3L99.9 637.3M143.1 359.2L323.3 575.3M143.1 359.2L102.1 636.7M146.0 359.0L324.8 574.9M146.0 359.0L104.2 636.1M148.7 358.8L326.3 574.5M148.7 358.8L106.4 635.5M151.5 358.6L327.8 574.1M151.5 358.6L108.5 634.9M154.3 358.4L329.2 573.7M154.3 358.4L110.7 634.3M157.0 358.3L330.7 573.2M157.0 358.3L112.8 633.7M159.8 358.1L332.2 572.8M159.8 358.1L114.9 633.2M162.5 357.9L333.6 572.4M162.5 357.9L117.0 632.6M165.2 357.7L335.1 572.0M165.2 357.7L119.1 632.0M167.9 357.6L336.5 571.6M167.9 357.6L121.2 631.4M170.6 357.4L338.0 571.2M170.6 357.4L123.3 630.8M173.3 357.2L339.4 570.8M173.3 357.2L125.4 630.2M176.0 357.0L340.8 570.4M176.0 357.0L127.5 629.7M178.6 356.9L342.3 570.0M178.6 356.9L129.5 629.1M181.3 356.7L343.7 569.6M181.3 356.7L131.6 628.5M183.9 356.5L345.1 569.2M183.9 356.5L133.7 627.9M186.5 356.4L346.5 568.8M186.5 356.4L135.7 627.4M189.1 356.2L348.0 568.5M189.1 356.2L137.8 626.8M191.7 356.0L349.4 568.1M191.7 356.0L139.8 626.2M194.3 355.9L350.8 567.7M194.3 355.9L141.8 625.7M196.9 355.7L352.2 567.3M196.9 355.7L143.9 625.1M199.4 355.5L353.6 566.9M199.4 355.5L145.9 624.6M202.0 355.4L355.0 566.5M202.0 355.4L147.9 624.0M204.5 355.2L356.4 566.1M204.5 355.2L149.9 623.4M207.1 355.0L357.8 565.7M207.1 355.0L151.9 622.9M209.6 354.9L359.2 565.3M209.6 354.9L153.9 622.3M212.1 354.7L360.5 565.0M212.1 354.7L155.9 621.8M214.6 354.5L361.9 564.6M214.6 354.5L157.8 621.2M217.1 354.4L363.3 564.2M217.1 354.4L159.8 620.7M219.6 354.2L364.7 563.8M219.6 354.2L161.8 620.1M222.1 354.1L366.0 563.4M222.1 354.1L163.7 619.6M224.5 353.9L367.4 563.1M224.5 353.9L165.7 619.1M227.0 353.7L368.8 562.7M227.0 353.7L167.6 618.5M229.4 353.6L370.1 562.3M229.4 353.6L169.6 618.0M231.8 353.4L371.5 561.9M231.8 353.4L171.5 617.4M234.2 353.3L372.8 561.6M234.2 353.3L173.5 616.9M236.7 353.1L374.2 561.2M236.7 353.1L175.4 616.4M239.0 353.0L375.5 560.8M239.0 353.0L177.3 615.8M241.4 352.8L376.8 560.4M241.4 352.8L179.2 615.3M243.8 352.7L378.2 560.1M243.8 352.7L181.1 614.8M246.2 352.5L379.5 559.7M246.2 352.5L183.0 614.2M248.5 352.4L380.8 559.3M248.5 352.4L184.9 613.7M250.9 352.2L382.2 559.0M250.9 352.2L186.8 613.2M253.2 352.0L383.5 558.6M253.2 352.0L188.7 612.7M255.6 351.9L384.8 558.2M255.6 351.9L190.5 612.2M257.9 351.7L386.1 557.9M257.9 351.7L192.4 611.6M260.2 351.6L387.4 557.5M260.2 351.6L194.3 611.1M262.5 351.5L388.7 557.1M262.5 351.5L196.1 610.6M264.8 351.3L390.0 556.8M264.8 351.3L198.0 610.1M267.1 351.2L391.3 556.4M267.1 351.2L199.8 609.6M269.3 351.0L392.6 556.1M269.3 351.0L201.7 609.1M271.6 350.9L393.9 555.7M271.6 350.9L203.5 608.6M273.9 350.7L395.2 555.3M273.9 350.7L205.3 608.0M276.1 350.6L396.5 555.0M276.1 350.6L207.2 607.5M278.3 350.4L397.8 554.6M278.3 350.4L209.0 607.0M280.6 350.3L399.1 554.3M280.6 350.3L210.8 606.5M282.8 350.1L400.4 553.9M282.8 350.1L212.6 606.0M285.0 350.0L401.6 553.6M285.0 350.0L214.4 605.5M287.2 349.9L402.9 553.2M287.2 349.9L216.2 605.0M289.4 349.7L404.2 552.9M289.4 349.7L218.0 604.5M291.6 349.6L405.4 552.5M291.6 349.6L219.8 604.0M293.8 349.4L406.7 552.2M293.8 349.4L221.6 603.5M295.9 349.3L407.9 551.8M295.9 349.3L223.3 603.0M298.1 349.2L409.2 551.5M298.1 349.2L225.1 602.6M300.2 349.0L410.5 551.1M300.2 349.0L226.9 602.1M302.4 348.9L411.7 550.8M302.4 348.9L228.6 601.6M304.5 348.7L412.9 550.4M304.5 348.7L230.4 601.1M306.6 348.6L414.2 550.1M306.6 348.6L232.1 600.6M308.7 348.5L415.4 549.7M308.7 348.5L233.9 600.1M310.9 348.3L416.7 549.4M310.9 348.3L235.6 599.6M313.0 348.2L417.9 549.0M313.0 348.2L237.3 599.2M315.0 348.1L419.1 548.7M315.0 348.1L239.1 598.7M317.1 347.9L420.4 548.4M317.1 347.9L240.8 598.2M319.2 347.8L421.6 548.0M319.2 347.8L242.5 597.7M321.3 347.7L422.8 547.7M321.3 347.7L244.2 597.3M323.3 347.5L424.0 547.3M323.3 347.5L245.9 596.8M325.4 347.4L425.2 547.0M325.4 347.4L247.6 596.3M327.4 347.3L426.4 546.7M327.4 347.3L249.3 595.8M329.5 347.1L427.7 546.3M329.5 347.1L251.0 595.4M331.5 347.0L428.9 546.0M331.5 347.0L252.7 594.9M333.5 346.9L430.1 545.7M333.5 346.9L254.4 594.4M335.5 346.7L431.3 545.3M335.5 346.7L256.1 594.0M337.5 346.6L432.5 545.0M337.5 346.6L257.7 593.5M339.5 346.5L433.6 544.7M339.5 346.5L259.4 593.0M341.5 346.4L434.8 544.3M341.5 346.4L261.1 592.6M343.5 346.2L436.0 544.0M343.5 346.2L262.7 592.1M345.5 346.1L437.2 543.7M345.5 346.1L264.4 591.7M347.4 346.0L438.4 543.4M347.4 346.0L266.0 591.2M349.4 345.8L439.6 543.0M349.4 345.8L267.7 590.7M351.4 345.7L440.7 542.7M351.4 345.7L269.3 590.3M353.3 345.6L441.9 542.4M353.3 345.6L270.9 589.8M355.2 345.5L443.1 542.0M355.2 345.5L272.6 589.4M357.2 345.3L444.3 541.7M357.2 345.3L274.2 588.9M359.1 345.2L445.4 541.4M359.1 345.2L275.8 588.5M361.0 345.1L446.6 541.1M361.0 345.1L277.4 588.0M362.9 345.0L447.7 540.8M362.9 345.0L279.0 587.6M364.8 344.8L448.9 540.4M364.8 344.8L280.6 587.1M366.7 344.7L450.0 540.1M366.7 344.7L282.2 586.7M368.6 344.6L451.2 539.8M368.6 344.6L283.8 586.3M370.5 344.5L452.3 539.5M370.5 344.5L285.4 585.8M372.4 344.4L453.5 539.2M372.4 344.4L287.0 585.4M374.2 344.2L454.6 538.8M374.2 344.2L288.6 584.9M376.1 344.1L455.8 538.5M376.1 344.1L290.2 584.5M378.0 344.0L456.9 538.2M378.0 344.0L291.7 584.1M379.8 343.9L458.0 537.9M379.8 343.9L293.3 583.6M381.6 343.8L459.2 537.6M381.6 343.8L294.9 583.2M383.5 343.6L460.3 537.3M383.5 343.6L296.4 582.8M385.3 343.5L461.4 537.0M385.3 343.5L298.0 582.3M387.1 343.4L462.5 536.6M387.1 343.4L299.5 581.9M388.9 343.3L463.7 536.3M388.9 343.3L301.1 581.5M390.8 343.2L464.8 536.0M390.8 343.2L302.6 581.0M392.6 343.1L465.9 535.7M392.6 343.1L304.2 580.6M394.3 342.9L467.0 535.4M394.3 342.9L305.7 580.2M396.1 342.8L468.1 535.1M396.1 342.8L307.2 579.8M397.9 342.7L469.2 534.8M397.9 342.7L308.8 579.3M399.7 342.6L470.3 534.5M399.7 342.6L310.3 578.9M401.5 342.5L471.4 534.2M401.5 342.5L311.8 578.5M403.2 342.4L472.5 533.9M403.2 342.4L313.3 578.1M405.0 342.3L473.6 533.6M405.0 342.3L314.8 577.7M406.7 342.1L474.7 533.3M406.7 342.1L316.3 577.2M408.5 342.0L475.8 533.0M408.5 342.0L317.8 576.8M410.2 341.9L476.9 532.7M410.2 341.9L319.3 576.4M412.0 341.8L478.0 532.4M412.0 341.8L320.8 576.0M413.7 341.7L479.1 532.1M413.7 341.7L322.3 575.6M415.4 341.6L480.1 531.8M415.4 341.6L323.8 575.2M417.1 341.5L481.2 531.5M417.1 341.5L325.2 574.8M418.8 341.4L482.3 531.2M418.8 341.4L326.7 574.4M420.5 341.3L483.4 530.9M420.5 341.3L328.2 573.9M422.2 341.1L484.4 530.6M422.2 341.1L329.7 573.5M423.9 341.0L485.5 530.3M423.9 341.0L331.1 573.1M425.6 340.9L486.6 530.0M425.6 340.9L332.6 572.7M427.3 340.8L487.6 529.7M427.3 340.8L334.0 572.3M428.9 340.7L488.7 529.4M428.9 340.7L335.5 571.9M430.6 340.6L489.7 529.1M430.6 340.6L336.9 571.5M432.3 340.5L490.8 528.8M432.3 340.5L338.4 571.1M433.9 340.4L491.9 528.5M433.9 340.4L339.8 570.7M435.6 340.3L492.9 528.2M435.6 340.3L341.2 570.3M437.2 340.2L494.0 527.9M437.2 340.2L342.7 569.9M438.9 340.1L495.0 527.6M438.9 340.1L344.1 569.5M440.5 340.0L496.0 527.3M440.5 340.0L345.5 569.1M442.1 339.9L497.1 527.1M442.1 339.9L346.9 568.7" stroke="#050505" stroke-width="0.7" fill="none" opacity="1" shape-rendering="crispEdges"/>
<path d="M328.4 347.2L333.1 400L338.4 460L345.6 542.3" stroke="#0b0b0b" stroke-width="1" fill="none"/>
<clipPath id="c3"><polygon points="262.2,361.3 276.3,357.8 281.8,400.0 289.9,460.0 301.0,549.8 289.4,552.3 274.7,460.0 267.1,400.0"/></clipPath>
<polygon points="262.2,361.3 276.3,357.8 281.8,400.0 289.9,460.0 301.0,549.8 289.4,552.3 274.7,460.0 267.1,400.0" fill="#727272"/>
<path clip-path="url(#c3)" d="M261.9 361.4L276.6 357.7M262.2 363.6L276.9 359.9M262.5 365.8L277.2 362.2M262.9 368.0L277.4 364.4M263.2 370.1L277.7 366.5M263.5 372.3L278.0 368.7M263.8 374.5L278.3 370.9M264.1 376.6L278.5 373.1M264.4 378.7L278.8 375.2M264.7 380.9L279.1 377.3M265.0 383.0L279.4 379.5M265.3 385.1L279.6 381.6M265.6 387.2L279.9 383.7M265.9 389.3L280.2 385.8M266.2 391.4L280.5 387.9M266.5 393.5L280.7 390.0M266.8 395.6L281.0 392.1M267.1 397.6L281.3 394.2M267.4 399.7L281.5 396.3M267.7 401.7L281.8 398.3M268.0 403.8L282.1 400.4M268.3 405.8L282.3 402.4M268.5 407.8L282.6 404.4M268.8 409.8L282.8 406.5M269.1 411.8L283.1 408.5M269.4 413.8L283.4 410.5M269.7 415.8L283.6 412.5M270.0 417.8L283.9 414.5M270.3 419.8L284.1 416.5M270.5 421.7L284.4 418.4M270.8 423.7L284.6 420.4M271.1 425.7L284.9 422.4M271.4 427.6L285.1 424.3M271.6 429.5L285.4 426.3M271.9 431.5L285.6 428.2M272.2 433.4L285.9 430.2M272.5 435.3L286.1 432.1M272.7 437.2L286.4 434.0M273.0 439.1L286.6 435.9M273.3 441.0L286.9 437.8M273.5 442.9L287.1 439.7M273.8 444.8L287.3 441.6M274.1 446.6L287.6 443.5M274.3 448.5L287.8 445.3M274.6 450.3L288.1 447.2M274.9 452.2L288.3 449.1M275.1 454.0L288.5 450.9M275.4 455.9L288.8 452.8M275.7 457.7L289.0 454.6M275.9 459.5L289.3 456.4M276.2 461.3L289.5 458.2M276.4 463.1L289.7 460.1M276.7 464.9L290.0 461.9M277.0 466.7L290.2 463.7M277.2 468.5L290.4 465.5M277.5 470.3L290.6 467.3M277.7 472.1L290.9 469.0M278.0 473.8L291.1 470.8M278.2 475.6L291.3 472.6M278.5 477.3L291.6 474.4M278.7 479.1L291.8 476.1M279.0 480.8L292.0 477.9M279.2 482.6L292.2 479.6M279.5 484.3L292.5 481.3M279.7 486.0L292.7 483.1M279.9 487.7L292.9 484.8M280.2 489.4L293.1 486.5M280.4 491.1L293.3 488.2M280.7 492.8L293.6 489.9M280.9 494.5L293.8 491.6M281.2 496.2L294.0 493.3M281.4 497.9L294.2 495.0M281.6 499.6L294.4 496.7M281.9 501.2L294.6 498.4M282.1 502.9L294.8 500.0M282.3 504.5L295.1 501.7M282.6 506.2L295.3 503.3M282.8 507.8L295.5 505.0M283.0 509.5L295.7 506.6M283.3 511.1L295.9 508.3M283.5 512.7L296.1 509.9M283.7 514.3L296.3 511.5M284.0 515.9L296.5 513.2M284.2 517.5L296.7 514.8M284.4 519.1L296.9 516.4M284.7 520.7L297.2 518.0M284.9 522.3L297.4 519.6M285.1 523.9L297.6 521.2M285.3 525.5L297.8 522.8M285.6 527.1L298.0 524.3M285.8 528.6L298.2 525.9M286.0 530.2L298.4 527.5M286.2 531.8L298.6 529.1M286.5 533.3L298.8 530.6M286.7 534.9L299.0 532.2M286.9 536.4L299.2 533.7M287.1 537.9L299.4 535.3M287.3 539.5L299.6 536.8M287.5 541.0L299.8 538.3M287.8 542.5L300.0 539.8M288.0 544.0L300.2 541.4M288.2 545.5L300.4 542.9M288.4 547.0L300.5 544.4M288.6 548.5L300.7 545.9M288.8 550.0L300.9 547.4M289.0 551.5L301.1 548.9M289.3 553.0L301.3 550.4M150.4 389.1L287.3 552.8M150.4 389.1L109.5 591.1M152.4 388.6L289.0 552.4M152.4 388.6L111.1 590.7M154.4 388.0L290.8 552.0M154.4 388.0L112.7 590.4M156.5 387.5L292.5 551.6M156.5 387.5L114.4 590.0M158.5 387.0L294.2 551.3M158.5 387.0L116.0 589.7M160.6 386.5L296.0 550.9M160.6 386.5L117.7 589.3M162.6 386.0L297.7 550.5M162.6 386.0L119.3 589.0M164.6 385.5L299.5 550.1M164.6 385.5L120.9 588.6M166.7 385.0L301.2 549.8M166.7 385.0L122.6 588.3M168.7 384.5L303.0 549.4M168.7 384.5L124.2 587.9M170.8 384.0L304.7 549.0M170.8 384.0L125.9 587.5M172.8 383.5L306.4 548.6M172.8 383.5L127.5 587.2M174.9 383.0L308.2 548.3M174.9 383.0L129.2 586.8M176.9 382.5L309.9 547.9M176.9 382.5L130.8 586.5M179.0 382.0L311.7 547.5M179.0 382.0L132.4 586.1M181.0 381.5L313.4 547.1M181.0 381.5L134.1 585.8M183.1 380.9L315.2 546.7M183.1 380.9L135.7 585.4M185.1 380.4L316.9 546.4M185.1 380.4L137.4 585.1M187.2 379.9L318.7 546.0M187.2 379.9L139.0 584.7M189.2 379.4L320.4 545.6M189.2 379.4L140.7 584.3M191.3 378.9L322.2 545.2M191.3 378.9L142.3 584.0M193.4 378.4L324.0 544.9M193.4 378.4L144.0 583.6M195.4 377.9L325.7 544.5M195.4 377.9L145.7 583.3M197.5 377.4L327.5 544.1M197.5 377.4L147.3 582.9M199.6 376.8L329.2 543.7M199.6 376.8L149.0 582.6M201.6 376.3L331.0 543.3M201.6 376.3L150.6 582.2M203.7 375.8L332.8 543.0M203.7 375.8L152.3 581.9M205.8 375.3L334.5 542.6M205.8 375.3L153.9 581.5M207.8 374.8L336.3 542.2M207.8 374.8L155.6 581.1M209.9 374.3L338.0 541.8M209.9 374.3L157.3 580.8M212.0 373.8L339.8 541.4M212.0 373.8L158.9 580.4M214.1 373.3L341.6 541.1M214.1 373.3L160.6 580.1M216.1 372.7L343.3 540.7M216.1 372.7L162.3 579.7M218.2 372.2L345.1 540.3M218.2 372.2L163.9 579.3M220.3 371.7L346.9 539.9M220.3 371.7L165.6 579.0M222.4 371.2L348.7 539.5M222.4 371.2L167.2 578.6M224.5 370.7L350.4 539.1M224.5 370.7L168.9 578.3M226.5 370.2L352.2 538.8M226.5 370.2L170.6 577.9M228.6 369.6L354.0 538.4M228.6 369.6L172.3 577.5M230.7 369.1L355.7 538.0M230.7 369.1L173.9 577.2M232.8 368.6L357.5 537.6M232.8 368.6L175.6 576.8M234.9 368.1L359.3 537.2M234.9 368.1L177.3 576.5M237.0 367.6L361.1 536.9M237.0 367.6L178.9 576.1M239.1 367.0L362.9 536.5M239.1 367.0L180.6 575.7M241.2 366.5L364.6 536.1M241.2 366.5L182.3 575.4M243.3 366.0L366.4 535.7M243.3 366.0L184.0 575.0M245.4 365.5L368.2 535.3M245.4 365.5L185.6 574.7M247.5 365.0L370.0 534.9M247.5 365.0L187.3 574.3M249.6 364.4L371.8 534.6M249.6 364.4L189.0 573.9M251.7 363.9L373.5 534.2M251.7 363.9L190.7 573.6M253.8 363.4L375.3 533.8M253.8 363.4L192.4 573.2M255.9 362.9L377.1 533.4M255.9 362.9L194.0 572.9M258.0 362.3L378.9 533.0M258.0 362.3L195.7 572.5M260.1 361.8L380.7 532.6M260.1 361.8L197.4 572.1M262.2 361.3L382.5 532.2M262.2 361.3L199.1 571.8M264.3 360.8L384.3 531.9M264.3 360.8L200.8 571.4M266.4 360.3L386.1 531.5M266.4 360.3L202.5 571.0M268.5 359.7L387.9 531.1M268.5 359.7L204.2 570.7M270.7 359.2L389.7 530.7M270.7 359.2L205.8 570.3M272.8 358.7L391.4 530.3M272.8 358.7L207.5 569.9M274.9 358.2L393.2 529.9M274.9 358.2L209.2 569.6M277.0 357.6L395.0 529.5M277.0 357.6L210.9 569.2M279.1 357.1L396.8 529.1M279.1 357.1L212.6 568.8M281.3 356.6L398.6 528.8M281.3 356.6L214.3 568.5M283.4 356.0L400.4 528.4M283.4 356.0L216.0 568.1M285.5 355.5L402.2 528.0M285.5 355.5L217.7 567.8M287.6 355.0L404.0 527.6M287.6 355.0L219.4 567.4M289.8 354.5L405.8 527.2M289.8 354.5L221.1 567.0M291.9 353.9L407.7 526.8M291.9 353.9L222.8 566.7M294.0 353.4L409.5 526.4M294.0 353.4L224.5 566.3M296.2 352.9L411.3 526.0M296.2 352.9L226.2 565.9M298.3 352.3L413.1 525.6M298.3 352.3L227.9 565.6M300.4 351.8L414.9 525.3M300.4 351.8L229.6 565.2M302.6 351.3L416.7 524.9M302.6 351.3L231.3 564.8M304.7 350.8L418.5 524.5M304.7 350.8L233.0 564.5M306.8 350.2L420.3 524.1M306.8 350.2L234.7 564.1M309.0 349.7L422.1 523.7M309.0 349.7L236.4 563.7M311.1 349.2L423.9 523.3M311.1 349.2L238.1 563.4M313.3 348.6L425.8 522.9M313.3 348.6L239.8 563.0M315.4 348.1L427.6 522.5M315.4 348.1L241.5 562.6M317.6 347.6L429.4 522.1M317.6 347.6L243.2 562.2M319.7 347.0L431.2 521.7M319.7 347.0L244.9 561.9M321.9 346.5L433.0 521.3M321.9 346.5L246.7 561.5M324.0 346.0L434.9 521.0M324.0 346.0L248.4 561.1M326.2 345.4L436.7 520.6M326.2 345.4L250.1 560.8M328.3 344.9L438.5 520.2M328.3 344.9L251.8 560.4M330.5 344.3L440.3 519.8M330.5 344.3L253.5 560.0M332.6 343.8L442.1 519.4M332.6 343.8L255.2 559.7M334.8 343.3L444.0 519.0M334.8 343.3L256.9 559.3M337.0 342.7L445.8 518.6M337.0 342.7L258.7 558.9M339.1 342.2L447.6 518.2M339.1 342.2L260.4 558.6M341.3 341.7L449.5 517.8M341.3 341.7L262.1 558.2M343.5 341.1L451.3 517.4M343.5 341.1L263.8 557.8M345.6 340.6L453.1 517.0M345.6 340.6L265.6 557.4M347.8 340.1L455.0 516.6M347.8 340.1L267.3 557.1M350.0 339.5L456.8 516.2M350.0 339.5L269.0 556.7M352.1 339.0L458.6 515.8M352.1 339.0L270.7 556.3M354.3 338.4L460.5 515.4M354.3 338.4L272.5 556.0M356.5 337.9L462.3 515.0M356.5 337.9L274.2 555.6M358.7 337.4L464.1 514.6M358.7 337.4L275.9 555.2M360.9 336.8L466.0 514.2M360.9 336.8L277.6 554.8M363.0 336.3L467.8 513.8M363.0 336.3L279.4 554.5M365.2 335.7L469.7 513.5M365.2 335.7L281.1 554.1M367.4 335.2L471.5 513.1M367.4 335.2L282.8 553.7M369.6 334.6L473.3 512.7M369.6 334.6L284.6 553.3M371.8 334.1L475.2 512.3M371.8 334.1L286.3 553.0M374.0 333.6L477.0 511.9M374.0 333.6L288.0 552.6M376.2 333.0L478.9 511.5M376.2 333.0L289.8 552.2M378.3 332.5L480.7 511.1M378.3 332.5L291.5 551.8M380.5 331.9L482.6 510.7M380.5 331.9L293.2 551.5M382.7 331.4L484.4 510.3M382.7 331.4L295.0 551.1M384.9 330.8L486.3 509.9M384.9 330.8L296.7 550.7M387.1 330.3L488.1 509.5M387.1 330.3L298.5 550.3M389.3 329.7L490.0 509.1M389.3 329.7L300.2 550.0M391.5 329.2L491.8 508.7M391.5 329.2L302.0 549.6" stroke="#050505" stroke-width="0.7" fill="none" opacity="1" shape-rendering="crispEdges"/>
<clipPath id="c4"><polygon points="474.6,202.8 492.4,212.4 498.0,270.0 490.0,276.0 477.0,252.0"/></clipPath>
<polygon points="474.6,202.8 492.4,212.4 498.0,270.0 490.0,276.0 477.0,252.0" fill="#666"/>
<path clip-path="url(#c4)" d="M474.3 202.6L492.8 212.6M474.3 204.0L492.9 214.1M474.4 205.3L493.0 215.5M474.4 206.7L493.2 217.0M474.5 208.1L493.3 218.5M474.5 209.5L493.4 220.0M474.6 210.9L493.6 221.5M474.6 212.3L493.7 223.0M474.7 213.8L493.8 224.5M474.8 215.2L494.0 226.1M474.8 216.7L494.1 227.7M474.9 218.1L494.3 229.2M474.9 219.6L494.4 230.8M475.0 221.1L494.5 232.4M475.0 222.6L494.7 234.0M475.1 224.1L494.8 235.7M475.2 225.6L495.0 237.3M475.2 227.2L495.1 238.9M475.3 228.7L495.3 240.6M475.4 230.3L495.4 242.3M475.4 231.9L495.6 244.0M475.5 233.4L495.7 245.7M475.5 235.0L495.9 247.4M475.6 236.7L496.0 249.2M475.7 238.3L496.2 250.9M475.7 239.9L496.3 252.7M475.8 241.6L496.5 254.5M475.9 243.3L496.7 256.3M475.9 244.9L496.8 258.1M476.0 246.6L497.0 260.0M476.1 248.4L497.1 261.8M476.1 250.1L497.3 263.7M476.2 251.8L497.5 265.6M476.3 253.6L497.7 267.5M476.3 255.4L497.8 269.4M476.4 257.1L498.0 271.3M476.5 258.9L498.2 273.3M476.6 260.8L498.3 275.2M476.6 262.6L498.5 277.2M442.8 185.6L474.5 260.4M442.8 185.6L410.6 217.7M444.2 186.4L476.5 261.7M444.2 186.4L412.0 218.7M445.7 187.2L478.5 263.0M445.7 187.2L413.5 219.7M447.2 188.0L480.6 264.4M447.2 188.0L415.0 220.7M448.8 188.9L482.6 265.7M448.8 188.9L416.5 221.7M450.3 189.7L484.7 267.1M450.3 189.7L418.0 222.7M451.8 190.5L486.8 268.5M451.8 190.5L419.5 223.7M453.4 191.4L488.9 269.9M453.4 191.4L421.1 224.7M454.9 192.2L491.0 271.3M454.9 192.2L422.6 225.8M456.5 193.0L493.1 272.8M456.5 193.0L424.2 226.8M458.1 193.9L495.3 274.2M458.1 193.9L425.8 227.8M459.7 194.8L497.5 275.7M459.7 194.8L427.4 228.9M461.3 195.6L499.7 277.1M461.3 195.6L429.0 230.0M462.9 196.5L501.9 278.6M462.9 196.5L430.6 231.0M464.6 197.4L504.2 280.1M464.6 197.4L432.2 232.1M466.2 198.3L506.4 281.6M466.2 198.3L433.8 233.2M467.9 199.2L508.7 283.1M467.9 199.2L435.5 234.3M469.5 200.1L511.0 284.7M469.5 200.1L437.1 235.4M471.2 201.0L513.3 286.2M471.2 201.0L438.8 236.5M472.9 201.9L515.7 287.8M472.9 201.9L440.5 237.7M474.6 202.8L518.1 289.4M474.6 202.8L442.2 238.8M476.3 203.7L520.5 291.0M476.3 203.7L443.9 240.0M478.1 204.7L522.9 292.6M478.1 204.7L445.7 241.1M479.8 205.6L525.3 294.2M479.8 205.6L447.4 242.3M481.6 206.6L527.8 295.9M481.6 206.6L449.2 243.5M483.3 207.5L530.3 297.5M483.3 207.5L451.0 244.6M485.1 208.5L532.8 299.2M485.1 208.5L452.7 245.8M486.9 209.4L535.4 300.9M486.9 209.4L454.6 247.0M488.7 210.4L537.9 302.6M488.7 210.4L456.4 248.2M490.6 211.4L540.5 304.3M490.6 211.4L458.2 249.5M492.4 212.4L543.1 306.1M492.4 212.4L460.1 250.7M494.3 213.4L545.8 307.9M494.3 213.4L461.9 252.0M496.1 214.4L548.5 309.6M496.1 214.4L463.8 253.2M498.0 215.4L551.2 311.4M498.0 215.4L465.7 254.5M499.9 216.5L553.9 313.3M499.9 216.5L467.6 255.8M501.8 217.5L556.6 315.1M501.8 217.5L469.6 257.0M503.8 218.5L559.4 317.0M503.8 218.5L471.5 258.3M505.7 219.6L562.2 318.8M505.7 219.6L473.5 259.7M507.7 220.6L565.1 320.7M507.7 220.6L475.5 261.0M509.7 221.7L568.0 322.6M509.7 221.7L477.5 262.3M511.7 222.8L570.9 324.6M511.7 222.8L479.5 263.7M513.7 223.9L573.8 326.5M513.7 223.9L481.5 265.0M515.7 225.0L576.8 328.5M515.7 225.0L483.6 266.4M517.7 226.1L579.8 330.5M517.7 226.1L485.7 267.8M519.8 227.2L582.8 332.5M519.8 227.2L487.8 269.2M521.9 228.3L585.9 334.6M521.9 228.3L489.9 270.6M524.0 229.4L589.0 336.7M524.0 229.4L492.0 272.0M526.1 230.6L592.1 338.7M526.1 230.6L494.2 273.4M528.2 231.7L595.3 340.9M528.2 231.7L496.3 274.9M530.4 232.9L598.5 343.0M530.4 232.9L498.5 276.3M532.6 234.1L601.7 345.2M532.6 234.1L500.7 277.8" stroke="#060606" stroke-width="0.7" fill="none" opacity="1" shape-rendering="crispEdges"/>
<polygon points="418.5,229.6 488.9,220.4 488.9,236.1 467.4,240.0 438.1,246.0 438.4,291.0 424.5,286.0 422.4,280.5 419.5,250.0" fill="#141414"/>
<clipPath id="c5"><polygon points="436.7,229.8 447.0,228.5 447.0,236.0 441.0,235.0"/></clipPath>
<polygon points="436.7,229.8 447.0,228.5 447.0,236.0 441.0,235.0" fill="#c2c2c2"/>
<path clip-path="url(#c5)" d="M428.6 230.7L490.0 222.3M428.6 232.8L490.0 224.1M428.6 234.9L490.0 225.9M428.6 237.0L490.0 227.6M428.6 239.1L490.0 229.4M428.6 241.2L490.0 231.2M428.6 243.3L490.0 233.0M428.6 245.5L490.0 234.8M416.7 232.3L426.9 247.0M416.7 232.3L406.1 250.7M419.5 231.9L429.5 246.6M419.5 231.9L408.9 250.2M422.1 231.6L432.1 246.1M422.1 231.6L411.7 249.7M424.8 231.2L434.6 245.7M424.8 231.2L414.5 249.2M427.4 230.9L437.1 245.3M427.4 230.9L417.3 248.7M430.0 230.5L439.5 244.8M430.0 230.5L420.0 248.3M432.6 230.1L442.0 244.4M432.6 230.1L422.7 247.8M435.1 229.8L444.4 244.0M435.1 229.8L425.3 247.3M437.6 229.5L446.8 243.5M437.6 229.5L427.9 246.9M440.0 229.1L449.1 243.1M440.0 229.1L430.5 246.4M442.5 228.8L451.4 242.7M442.5 228.8L433.0 246.0M444.9 228.5L453.7 242.3M444.9 228.5L435.6 245.5M447.2 228.1L456.0 241.9M447.2 228.1L438.0 245.1M449.6 227.8L458.2 241.5M449.6 227.8L440.5 244.6M451.9 227.5L460.5 241.1M451.9 227.5L442.9 244.2M454.2 227.2L462.6 240.7M454.2 227.2L445.3 243.8M456.4 226.9L464.8 240.4M456.4 226.9L447.7 243.4M458.7 226.6L467.0 240.0M458.7 226.6L450.0 243.0M460.9 226.3L469.1 239.6M460.9 226.3L452.3 242.6M463.1 226.0L471.2 239.2M463.1 226.0L454.6 242.2M465.2 225.7L473.2 238.9M465.2 225.7L456.9 241.8M467.4 225.4L475.3 238.5M467.4 225.4L459.1 241.4M469.5 225.1L477.3 238.2M469.5 225.1L461.3 241.0M471.6 224.8L479.3 237.8M471.6 224.8L463.5 240.6M473.6 224.5L481.3 237.5M473.6 224.5L465.6 240.2M475.7 224.2L483.2 237.1M475.7 224.2L467.8 239.8M477.7 224.0L485.2 236.8M477.7 224.0L469.9 239.5M479.7 223.7L487.1 236.4M479.7 223.7L472.0 239.1M481.7 223.4L489.0 236.1M481.7 223.4L474.0 238.7M483.6 223.1L490.8 235.8M483.6 223.1L476.1 238.4M485.5 222.9L492.7 235.4M485.5 222.9L478.1 238.0M487.5 222.6L494.5 235.1M487.5 222.6L480.1 237.7M489.3 222.4L496.4 234.8M489.3 222.4L482.0 237.3M491.2 222.1L498.1 234.5M491.2 222.1L484.0 237.0M493.1 221.8L499.9 234.2M493.1 221.8L485.9 236.6M494.9 221.6L501.7 233.9M494.9 221.6L487.8 236.3M496.7 221.3L503.4 233.6M496.7 221.3L489.7 236.0" stroke="#141414" stroke-width="0.5" fill="none" opacity="1"/>
<clipPath id="c6"><polygon points="465.0,225.2 488.9,222.4 488.9,236.1 466.0,240.3"/></clipPath>
<polygon points="465.0,225.2 488.9,222.4 488.9,236.1 466.0,240.3" fill="#c2c2c2"/>
<path clip-path="url(#c6)" d="M428.6 230.7L490.0 222.3M428.6 232.8L490.0 224.1M428.6 234.9L490.0 225.9M428.6 237.0L490.0 227.6M428.6 239.1L490.0 229.4M428.6 241.2L490.0 231.2M428.6 243.3L490.0 233.0M428.6 245.5L490.0 234.8M416.7 232.3L426.9 247.0M416.7 232.3L406.1 250.7M419.5 231.9L429.5 246.6M419.5 231.9L408.9 250.2M422.1 231.6L432.1 246.1M422.1 231.6L411.7 249.7M424.8 231.2L434.6 245.7M424.8 231.2L414.5 249.2M427.4 230.9L437.1 245.3M427.4 230.9L417.3 248.7M430.0 230.5L439.5 244.8M430.0 230.5L420.0 248.3M432.6 230.1L442.0 244.4M432.6 230.1L422.7 247.8M435.1 229.8L444.4 244.0M435.1 229.8L425.3 247.3M437.6 229.5L446.8 243.5M437.6 229.5L427.9 246.9M440.0 229.1L449.1 243.1M440.0 229.1L430.5 246.4M442.5 228.8L451.4 242.7M442.5 228.8L433.0 246.0M444.9 228.5L453.7 242.3M444.9 228.5L435.6 245.5M447.2 228.1L456.0 241.9M447.2 228.1L438.0 245.1M449.6 227.8L458.2 241.5M449.6 227.8L440.5 244.6M451.9 227.5L460.5 241.1M451.9 227.5L442.9 244.2M454.2 227.2L462.6 240.7M454.2 227.2L445.3 243.8M456.4 226.9L464.8 240.4M456.4 226.9L447.7 243.4M458.7 226.6L467.0 240.0M458.7 226.6L450.0 243.0M460.9 226.3L469.1 239.6M460.9 226.3L452.3 242.6M463.1 226.0L471.2 239.2M463.1 226.0L454.6 242.2M465.2 225.7L473.2 238.9M465.2 225.7L456.9 241.8M467.4 225.4L475.3 238.5M467.4 225.4L459.1 241.4M469.5 225.1L477.3 238.2M469.5 225.1L461.3 241.0M471.6 224.8L479.3 237.8M471.6 224.8L463.5 240.6M473.6 224.5L481.3 237.5M473.6 224.5L465.6 240.2M475.7 224.2L483.2 237.1M475.7 224.2L467.8 239.8M477.7 224.0L485.2 236.8M477.7 224.0L469.9 239.5M479.7 223.7L487.1 236.4M479.7 223.7L472.0 239.1M481.7 223.4L489.0 236.1M481.7 223.4L474.0 238.7M483.6 223.1L490.8 235.8M483.6 223.1L476.1 238.4M485.5 222.9L492.7 235.4M485.5 222.9L478.1 238.0M487.5 222.6L494.5 235.1M487.5 222.6L480.1 237.7M489.3 222.4L496.4 234.8M489.3 222.4L482.0 237.3M491.2 222.1L498.1 234.5M491.2 222.1L484.0 237.0M493.1 221.8L499.9 234.2M493.1 221.8L485.9 236.6M494.9 221.6L501.7 233.9M494.9 221.6L487.8 236.3M496.7 221.3L503.4 233.6M496.7 221.3L489.7 236.0" stroke="#141414" stroke-width="0.5" fill="none" opacity="1"/>
<clipPath id="c7"><polygon points="423.7,245.9 438.1,260.2 438.6,291.0 425.5,286.0"/></clipPath>
<polygon points="423.7,245.9 438.1,260.2 438.6,291.0 425.5,286.0" fill="#bcbcbc"/>
<path clip-path="url(#c7)" d="M423.4 245.9L438.4 245.9M423.5 248.0L438.4 248.0M423.6 250.1L438.4 250.1M423.7 252.1L438.5 252.1M423.7 254.2L438.5 254.2M423.8 256.2L438.5 256.2M423.9 258.2L438.5 258.2M424.0 260.2L438.5 260.2M424.1 262.1L438.6 262.1M424.1 264.1L438.6 264.1M424.2 266.0L438.6 266.0M424.3 268.0L438.6 268.0M424.4 269.9L438.6 269.9M424.5 271.8L438.7 271.8M424.5 273.7L438.7 273.7M424.6 275.5L438.7 275.5M424.7 277.4L438.7 277.4M424.8 279.2L438.7 279.2M424.8 281.0L438.8 281.0M424.9 282.8L438.8 282.8M425.0 284.6L438.8 284.6M425.1 286.4L438.8 286.4M425.1 288.2L438.8 288.2M425.2 289.9L438.9 289.9M425.3 291.7L438.9 291.7M394.3 245.9L423.0 291.0M394.3 245.9L374.4 291.0M396.5 245.9L425.1 291.0M396.5 245.9L376.5 291.0M398.8 245.9L427.2 291.0M398.8 245.9L378.5 291.0M401.1 245.9L429.2 291.0M401.1 245.9L380.6 291.0M403.3 245.9L431.3 291.0M403.3 245.9L382.7 291.0M405.6 245.9L433.3 291.0M405.6 245.9L384.7 291.0M407.9 245.9L435.4 291.0M407.9 245.9L386.8 291.0M410.1 245.9L437.5 291.0M410.1 245.9L388.8 291.0M412.4 245.9L439.5 291.0M412.4 245.9L390.9 291.0M414.6 245.9L441.6 291.0M414.6 245.9L393.0 291.0M416.9 245.9L443.6 291.0M416.9 245.9L395.0 291.0M419.2 245.9L445.7 291.0M419.2 245.9L397.1 291.0M421.4 245.9L447.8 291.0M421.4 245.9L399.1 291.0M423.7 245.9L449.8 291.0M423.7 245.9L401.2 291.0M426.0 245.9L451.9 291.0M426.0 245.9L403.2 291.0M428.2 245.9L453.9 291.0M428.2 245.9L405.3 291.0M430.5 245.9L456.0 291.0M430.5 245.9L407.4 291.0M432.8 245.9L458.0 291.0M432.8 245.9L409.4 291.0M435.0 245.9L460.1 291.0M435.0 245.9L411.5 291.0M437.3 245.9L462.2 291.0M437.3 245.9L413.5 291.0M439.5 245.9L464.2 291.0M439.5 245.9L415.6 291.0M441.8 245.9L466.3 291.0M441.8 245.9L417.7 291.0M444.1 245.9L468.3 291.0M444.1 245.9L419.7 291.0M446.3 245.9L470.4 291.0M446.3 245.9L421.8 291.0M448.6 245.9L472.5 291.0M448.6 245.9L423.8 291.0M450.9 245.9L474.5 291.0M450.9 245.9L425.9 291.0M453.1 245.9L476.6 291.0M453.1 245.9L428.0 291.0M455.4 245.9L478.6 291.0M455.4 245.9L430.0 291.0M457.6 245.9L480.7 291.0M457.6 245.9L432.1 291.0M459.9 245.9L482.7 291.0M459.9 245.9L434.1 291.0M462.2 245.9L484.8 291.0M462.2 245.9L436.2 291.0M464.4 245.9L486.9 291.0M464.4 245.9L438.2 291.0M466.7 245.9L488.9 291.0M466.7 245.9L440.3 291.0" stroke="#141414" stroke-width="0.5" fill="none" opacity="1"/>
<clipPath id="c8"><polygon points="418.5,229.6 436.7,229.8 447.2,250.4 477.9,255.0 493.5,264.8 499.0,270.0 489.6,278.5 480.5,284.0 466.1,279.2 438.1,260.2 423.7,245.9"/></clipPath>
<polygon points="418.5,229.6 436.7,229.8 447.2,250.4 477.9,255.0 493.5,264.8 499.0,270.0 489.6,278.5 480.5,284.0 466.1,279.2 438.1,260.2 423.7,245.9" fill="#5c5c5c"/>
<path clip-path="url(#c8)" d="M418.0 229.7L440.4 225.9M418.8 230.4L441.2 226.5M419.6 231.2L442.1 227.2M420.4 231.9L443.0 227.8M421.2 232.7L443.9 228.4M422.0 233.5L444.9 229.1M422.9 234.4L445.8 229.7M423.8 235.2L446.8 230.4M424.7 236.0L447.7 231.1M425.6 236.9L448.7 231.8M426.5 237.8L449.8 232.5M427.5 238.7L450.8 233.2M428.5 239.7L451.9 233.9M429.5 240.6L452.9 234.7M430.5 241.6L454.0 235.5M431.5 242.6L455.2 236.2M432.6 243.7L456.3 237.0M433.7 244.7L457.5 237.9M434.9 245.8L458.7 238.7M436.0 246.9L459.9 239.6M437.2 248.0L461.2 240.4M438.5 249.2L462.4 241.3M439.7 250.4L463.7 242.2M441.0 251.7L465.1 243.1M442.3 252.9L466.4 244.1M443.7 254.2L467.8 245.1M445.1 255.6L469.3 246.1M446.5 256.9L470.7 247.1M448.0 258.3L472.2 248.1M449.5 259.8L473.7 249.2M451.1 261.3L475.3 250.3M452.7 262.8L476.9 251.4M454.4 264.4L478.5 252.5M456.1 266.1L480.2 253.7M457.9 267.8L481.9 254.9M459.7 269.5L483.7 256.1M461.6 271.3L485.5 257.4M463.5 273.2L487.4 258.7M465.5 275.1L489.3 260.0M467.6 277.1L491.3 261.4M469.8 279.1L493.3 262.8M472.0 281.3L495.4 264.2M474.3 283.5L497.5 265.7M476.7 285.8L499.7 267.3M479.2 288.1L501.9 268.8M354.9 240.3L474.9 288.6M354.9 240.3L-5265.3 4985.1M358.7 239.6L477.2 286.6M358.7 239.6L-2004.9 2317.5M362.3 239.0L479.4 284.8M362.3 239.0L-1079.4 1560.2M365.9 238.4L481.6 283.1M365.9 238.4L-641.9 1202.3M369.3 237.8L483.6 281.4M369.3 237.8L-387.0 993.7M372.6 237.3L485.6 279.8M372.6 237.3L-220.0 857.1M375.9 236.7L487.5 278.3M375.9 236.7L-102.3 760.8M379.0 236.2L489.3 276.8M379.0 236.2L-14.7 689.1M382.0 235.7L491.0 275.3M382.0 235.7L52.9 633.8M385.0 235.2L492.7 274.0M385.0 235.2L106.7 589.8M387.8 234.7L494.3 272.7M387.8 234.7L150.6 553.9M390.6 234.3L495.9 271.4M390.6 234.3L187.0 524.1M393.3 233.8L497.4 270.2M393.3 233.8L217.7 499.0M395.9 233.4L498.8 269.0M395.9 233.4L244.0 477.5M398.4 233.0L500.2 267.8M398.4 233.0L266.7 458.9M400.9 232.5L501.6 266.7M400.9 232.5L286.5 442.7M403.3 232.1L502.9 265.7M403.3 232.1L304.0 428.4M405.6 231.8L504.1 264.6M405.6 231.8L319.5 415.7M407.9 231.4L505.3 263.6M407.9 231.4L333.4 404.3M410.2 231.0L506.5 262.7M410.2 231.0L345.8 394.1M412.3 230.6L507.7 261.7M412.3 230.6L357.1 384.9M414.4 230.3L508.8 260.8M414.4 230.3L367.3 376.6M416.5 229.9L509.9 259.9M416.5 229.9L376.7 368.9M418.5 229.6L510.9 259.1M418.5 229.6L385.2 361.9M420.5 229.3L511.9 258.2M420.5 229.3L393.1 355.5M422.4 229.0L512.9 257.4M422.4 229.0L400.3 349.6M424.2 228.6L513.9 256.7M424.2 228.6L407.0 344.1M426.1 228.3L514.8 255.9M426.1 228.3L413.2 339.0M427.8 228.0L515.7 255.2M427.8 228.0L419.0 334.3M429.6 227.7L516.6 254.4M429.6 227.7L424.4 329.8M431.3 227.5L517.4 253.7M431.3 227.5L429.5 325.7M433.0 227.2L518.3 253.1M433.0 227.2L434.2 321.8M434.6 226.9L519.1 252.4M434.6 226.9L438.7 318.2M436.2 226.6L519.9 251.7M436.2 226.6L442.8 314.8M437.7 226.4L520.6 251.1M437.7 226.4L446.8 311.5M439.3 226.1L521.4 250.5M439.3 226.1L450.5 308.5M440.7 225.9L522.1 249.9M440.7 225.9L454.0 305.6M442.2 225.6L522.8 249.3M442.2 225.6L457.4 302.9M443.6 225.4L523.5 248.7M443.6 225.4L460.5 300.3M445.0 225.2L524.2 248.2M445.0 225.2L463.5 297.8M446.4 224.9L524.9 247.7M446.4 224.9L466.4 295.5M447.7 224.7L525.5 247.1M447.7 224.7L469.1 293.3M449.1 224.5L526.2 246.6M449.1 224.5L471.7 291.2M450.4 224.3L526.8 246.1M450.4 224.3L474.2 289.1M451.6 224.1L527.4 245.6M451.6 224.1L476.5 287.2M452.9 223.8L528.0 245.1M452.9 223.8L478.8 285.4M454.1 223.6L528.5 244.6M454.1 223.6L480.9 283.6M455.3 223.4L529.1 244.2M455.3 223.4L483.0 281.9M456.4 223.2L529.7 243.7M456.4 223.2L485.0 280.3M457.6 223.1L530.2 243.3M457.6 223.1L486.9 278.7M458.7 222.9L530.7 242.9M458.7 222.9L488.7 277.2M459.8 222.7L531.2 242.4M459.8 222.7L490.5 275.8M460.9 222.5L531.8 242.0M460.9 222.5L492.2 274.4M462.0 222.3L532.3 241.6M462.0 222.3L493.8 273.0M463.0 222.1L532.7 241.2M463.0 222.1L495.4 271.8M464.1 222.0L533.2 240.8M464.1 222.0L496.9 270.5M465.1 221.8L533.7 240.4M465.1 221.8L498.4 269.3M466.1 221.6L534.1 240.1M466.1 221.6L499.8 268.2M467.1 221.5L534.6 239.7M467.1 221.5L501.2 267.1" stroke="#050505" stroke-width="0.7" fill="none" opacity="1" shape-rendering="crispEdges"/>
<clipPath id="c9"><polygon points="474.6,202.8 743.5,163.0 873.3,203.7 873.3,204.6 652.0,243.6 611.0,251.0 574.0,257.0 551.0,246.0 492.4,212.4"/></clipPath>
<polygon points="474.6,202.8 743.5,163.0 873.3,203.7 873.3,204.6 652.0,243.6 611.0,251.0 574.0,257.0 551.0,246.0 492.4,212.4" fill="#8a8a8a"/>
<path clip-path="url(#c9)" d="M468.4 203.7L748.1 162.3M471.0 205.6L752.3 163.6M473.6 207.5L756.6 164.9M476.3 209.4L760.9 166.3M479.1 211.3L765.3 167.6M481.9 213.3L769.8 169.0M484.7 215.3L774.3 170.4M487.6 217.4L778.8 171.8M490.6 219.5L783.5 173.3M493.6 221.6L788.2 174.7M496.6 223.8L793.0 176.2M499.7 226.0L797.9 177.7M502.9 228.2L802.8 179.3M506.1 230.5L807.8 180.8M509.4 232.8L812.9 182.4M512.7 235.2L818.0 184.0M516.1 237.6L823.3 185.6M519.5 240.0L828.6 187.3M523.1 242.5L834.0 188.9M526.7 245.1L839.5 190.6M530.3 247.7L845.1 192.4M534.1 250.3L850.8 194.1M537.9 253.0L856.6 195.9M541.7 255.8L862.4 197.7M545.7 258.6L868.4 199.6M549.7 261.5L874.4 201.5M553.9 264.4L880.6 203.4M434.6 208.7L556.0 262.7M434.6 208.7L464.7 279.7M437.5 208.3L559.4 262.1M437.5 208.3L468.4 279.0M440.4 207.9L562.8 261.5M440.4 207.9L472.1 278.3M443.3 207.4L566.2 260.9M443.3 207.4L475.8 277.7M446.2 207.0L569.5 260.2M446.2 207.0L479.5 277.0M449.1 206.6L572.9 259.6M449.1 206.6L483.2 276.3M451.9 206.2L576.2 259.0M451.9 206.2L486.8 275.6M454.8 205.7L579.5 258.4M454.8 205.7L490.5 274.9M457.6 205.3L582.8 257.8M457.6 205.3L494.1 274.3M460.5 204.9L586.1 257.1M460.5 204.9L497.7 273.6M463.3 204.5L589.4 256.5M463.3 204.5L501.3 272.9M466.2 204.0L592.7 255.9M466.2 204.0L504.9 272.3M469.0 203.6L595.9 255.3M469.0 203.6L508.5 271.6M471.8 203.2L599.2 254.7M471.8 203.2L512.1 270.9M474.6 202.8L602.4 254.1M474.6 202.8L515.6 270.3M477.4 202.4L605.6 253.5M477.4 202.4L519.1 269.6M480.2 202.0L608.8 252.9M480.2 202.0L522.7 268.9M483.0 201.6L612.0 252.3M483.0 201.6L526.2 268.3M485.7 201.2L615.2 251.7M485.7 201.2L529.7 267.6M488.5 200.7L618.4 251.1M488.5 200.7L533.1 267.0M491.3 200.3L621.6 250.5M491.3 200.3L536.6 266.4M494.0 199.9L624.7 250.0M494.0 199.9L540.1 265.7M496.8 199.5L627.9 249.4M496.8 199.5L543.5 265.1M499.5 199.1L631.0 248.8M499.5 199.1L547.0 264.4M502.2 198.7L634.2 248.2M502.2 198.7L550.4 263.8M504.9 198.3L637.3 247.6M504.9 198.3L553.8 263.2M507.7 197.9L640.4 247.0M507.7 197.9L557.2 262.5M510.4 197.5L643.5 246.5M510.4 197.5L560.6 261.9M513.1 197.1L646.6 245.9M513.1 197.1L563.9 261.3M515.8 196.7L649.6 245.3M515.8 196.7L567.3 260.6M518.4 196.3L652.7 244.8M518.4 196.3L570.7 260.0M521.1 195.9L655.7 244.2M521.1 195.9L574.0 259.4M523.8 195.5L658.8 243.6M523.8 195.5L577.3 258.8M526.4 195.1L661.8 243.1M526.4 195.1L580.6 258.2M529.1 194.7L664.8 242.5M529.1 194.7L583.9 257.5M531.7 194.3L667.8 241.9M531.7 194.3L587.2 256.9M534.4 194.0L670.8 241.4M534.4 194.0L590.5 256.3M537.0 193.6L673.8 240.8M537.0 193.6L593.8 255.7M539.6 193.2L676.8 240.3M539.6 193.2L597.0 255.1M542.3 192.8L679.8 239.7M542.3 192.8L600.3 254.5M544.9 192.4L682.7 239.2M544.9 192.4L603.5 253.9M547.5 192.0L685.7 238.6M547.5 192.0L606.7 253.3M550.1 191.6L688.6 238.1M550.1 191.6L609.9 252.7M552.6 191.2L691.6 237.5M552.6 191.2L613.1 252.1M555.2 190.9L694.5 237.0M555.2 190.9L616.3 251.5M557.8 190.5L697.4 236.4M557.8 190.5L619.5 250.9M560.4 190.1L700.3 235.9M560.4 190.1L622.7 250.3M562.9 189.7L703.2 235.4M562.9 189.7L625.8 249.8M565.5 189.3L706.1 234.8M565.5 189.3L629.0 249.2M568.0 189.0L709.0 234.3M568.0 189.0L632.1 248.6M570.6 188.6L711.8 233.7M570.6 188.6L635.2 248.0M573.1 188.2L714.7 233.2M573.1 188.2L638.3 247.4M575.6 187.8L717.5 232.7M575.6 187.8L641.4 246.8M578.1 187.5L720.4 232.2M578.1 187.5L644.5 246.3M580.7 187.1L723.2 231.6M580.7 187.1L647.6 245.7M583.2 186.7L726.0 231.1M583.2 186.7L650.7 245.1M585.7 186.4L728.8 230.6M585.7 186.4L653.7 244.6M588.2 186.0L731.6 230.1M588.2 186.0L656.8 244.0M590.6 185.6L734.4 229.5M590.6 185.6L659.8 243.4M593.1 185.3L737.2 229.0M593.1 185.3L662.8 242.9M595.6 184.9L739.9 228.5M595.6 184.9L665.9 242.3M598.1 184.5L742.7 228.0M598.1 184.5L668.9 241.7M600.5 184.2L745.5 227.5M600.5 184.2L671.9 241.2M603.0 183.8L748.2 227.0M603.0 183.8L674.9 240.6M605.4 183.4L750.9 226.5M605.4 183.4L677.8 240.1M607.9 183.1L753.7 226.0M607.9 183.1L680.8 239.5M610.3 182.7L756.4 225.5M610.3 182.7L683.8 239.0M612.7 182.4L759.1 225.0M612.7 182.4L686.7 238.4M615.1 182.0L761.8 224.4M615.1 182.0L689.6 237.9M617.5 181.6L764.5 223.9M617.5 181.6L692.6 237.3M620.0 181.3L767.2 223.4M620.0 181.3L695.5 236.8M622.4 180.9L769.8 223.0M622.4 180.9L698.4 236.2M624.8 180.6L772.5 222.5M624.8 180.6L701.3 235.7M627.1 180.2L775.2 222.0M627.1 180.2L704.2 235.2M629.5 179.9L777.8 221.5M629.5 179.9L707.1 234.6M631.9 179.5L780.5 221.0M631.9 179.5L709.9 234.1M634.3 179.2L783.1 220.5M634.3 179.2L712.8 233.6M636.6 178.8L785.7 220.0M636.6 178.8L715.6 233.0M639.0 178.5L788.3 219.5M639.0 178.5L718.5 232.5M641.3 178.1L790.9 219.0M641.3 178.1L721.3 232.0M643.7 177.8L793.5 218.5M643.7 177.8L724.1 231.5M646.0 177.4L796.1 218.1M646.0 177.4L726.9 230.9M648.4 177.1L798.7 217.6M648.4 177.1L729.8 230.4M650.7 176.7L801.3 217.1M650.7 176.7L732.5 229.9M653.0 176.4L803.9 216.6M653.0 176.4L735.3 229.4M655.3 176.1L806.4 216.1M655.3 176.1L738.1 228.9M657.6 175.7L809.0 215.7M657.6 175.7L740.9 228.3M659.9 175.4L811.5 215.2M659.9 175.4L743.6 227.8M662.2 175.0L814.1 214.7M662.2 175.0L746.4 227.3M664.5 174.7L816.6 214.3M664.5 174.7L749.1 226.8M666.8 174.4L819.1 213.8M666.8 174.4L751.9 226.3M669.1 174.0L821.6 213.3M669.1 174.0L754.6 225.8M671.4 173.7L824.1 212.9M671.4 173.7L757.3 225.3M673.6 173.3L826.6 212.4M673.6 173.3L760.0 224.8M675.9 173.0L829.1 211.9M675.9 173.0L762.7 224.3M678.1 172.7L831.6 211.5M678.1 172.7L765.4 223.8M680.4 172.3L834.1 211.0M680.4 172.3L768.1 223.3M682.6 172.0L836.5 210.5M682.6 172.0L770.8 222.8M684.9 171.7L839.0 210.1M684.9 171.7L773.4 222.3M687.1 171.3L841.4 209.6M687.1 171.3L776.1 221.8M689.3 171.0L843.9 209.2M689.3 171.0L778.7 221.3M691.6 170.7L846.3 208.7M691.6 170.7L781.4 220.8M693.8 170.4L848.7 208.3M693.8 170.4L784.0 220.3M696.0 170.0L851.2 207.8M696.0 170.0L786.6 219.8M698.2 169.7L853.6 207.4M698.2 169.7L789.2 219.3M700.4 169.4L856.0 206.9M700.4 169.4L791.8 218.9M702.6 169.1L858.4 206.5M702.6 169.1L794.4 218.4M704.8 168.7L860.8 206.0M704.8 168.7L797.0 217.9M707.0 168.4L863.2 205.6M707.0 168.4L799.6 217.4M709.1 168.1L865.5 205.1M709.1 168.1L802.2 216.9M711.3 167.8L867.9 204.7M711.3 167.8L804.7 216.5M713.5 167.4L870.3 204.3M713.5 167.4L807.3 216.0M715.6 167.1L872.6 203.8M715.6 167.1L809.8 215.5M717.8 166.8L875.0 203.4M717.8 166.8L812.4 215.0M720.0 166.5L877.3 202.9M720.0 166.5L814.9 214.6M722.1 166.2L879.7 202.5M722.1 166.2L817.4 214.1M724.2 165.9L882.0 202.1M724.2 165.9L820.0 213.6M726.4 165.5L884.3 201.6M726.4 165.5L822.5 213.2M728.5 165.2L886.6 201.2M728.5 165.2L825.0 212.7M730.6 164.9L888.9 200.8M730.6 164.9L827.5 212.2M732.7 164.6L891.2 200.4M732.7 164.6L829.9 211.8M734.9 164.3L893.5 199.9M734.9 164.3L832.4 211.3M737.0 164.0L895.8 199.5M737.0 164.0L834.9 210.8M739.1 163.7L898.1 199.1M739.1 163.7L837.4 210.4M741.2 163.3L900.4 198.7M741.2 163.3L839.8 209.9M743.3 163.0L902.7 198.2M743.3 163.0L842.3 209.5M745.4 162.7L904.9 197.8M745.4 162.7L844.7 209.0M747.4 162.4L907.2 197.4M747.4 162.4L847.1 208.6M749.5 162.1L909.4 197.0M749.5 162.1L849.6 208.1M751.6 161.8L911.7 196.6M751.6 161.8L852.0 207.7M753.7 161.5L913.9 196.1M753.7 161.5L854.4 207.2M755.7 161.2L916.1 195.7M755.7 161.2L856.8 206.8M757.8 160.9L918.3 195.3M757.8 160.9L859.2 206.3M759.8 160.6L920.6 194.9M759.8 160.6L861.6 205.9M761.9 160.3L922.8 194.5M761.9 160.3L864.0 205.4M763.9 160.0L925.0 194.1M763.9 160.0L866.4 205.0M766.0 159.7L927.2 193.7M766.0 159.7L868.7 204.6M768.0 159.4L929.4 193.3M768.0 159.4L871.1 204.1M770.0 159.1L931.5 192.9M770.0 159.1L873.4 203.7M772.0 158.8L933.7 192.5M772.0 158.8L875.8 203.2" stroke="#060606" stroke-width="0.7" fill="none" opacity="1" shape-rendering="crispEdges"/>
<clipPath id="c10"><polygon points="492.4,212.4 551.0,246.0 552.5,302.0 559.8,409.8 540.0,400.0 515.0,300.0 496.0,267.0"/></clipPath>
<polygon points="492.4,212.4 551.0,246.0 552.5,302.0 559.8,409.8 540.0,400.0 515.0,300.0 496.0,267.0" fill="#8a8a8a"/>
<path clip-path="url(#c10)" d="M491.2 211.7L552.2 246.7M491.3 213.7L552.3 248.6M491.4 215.6L552.4 250.5M491.5 217.6L552.5 252.4M491.6 219.5L552.6 254.4M491.7 221.5L552.7 256.3M491.7 223.4L552.8 258.2M491.8 225.4L552.9 260.2M491.9 227.3L553.0 262.1M492.0 229.3L553.1 264.0M492.1 231.2L553.2 266.0M492.2 233.2L553.3 267.9M492.3 235.1L553.4 269.9M492.4 237.1L553.5 271.8M492.4 239.1L553.6 273.7M492.5 241.0L553.7 275.7M492.6 243.0L553.8 277.6M492.7 245.0L553.9 279.6M492.8 246.9L554.1 281.5M492.9 248.9L554.2 283.5M493.0 250.9L554.3 285.4M493.1 252.8L554.4 287.4M493.2 254.8L554.5 289.3M493.2 256.8L554.6 291.3M493.3 258.7L554.7 293.2M493.4 260.7L554.8 295.2M493.5 262.7L554.9 297.1M493.6 264.7L555.0 299.1M493.7 266.7L555.1 301.1M493.8 268.6L555.2 303.0M493.9 270.6L555.3 305.0M494.0 272.6L555.4 306.9M494.0 274.6L555.5 308.9M494.1 276.6L555.6 310.9M494.2 278.5L555.8 312.8M494.3 280.5L555.9 314.8M494.4 282.5L556.0 316.8M494.5 284.5L556.1 318.7M494.6 286.5L556.2 320.7M494.7 288.5L556.3 322.7M494.8 290.5L556.4 324.7M494.9 292.5L556.5 326.6M494.9 294.5L556.6 328.6M495.0 296.5L556.7 330.6M495.1 298.5L556.8 332.6M495.2 300.5L556.9 334.5M495.3 302.5L557.0 336.5M495.4 304.5L557.2 338.5M495.5 306.5L557.3 340.5M495.6 308.5L557.4 342.5M495.7 310.5L557.5 344.5M495.8 312.5L557.6 346.4M495.9 314.5L557.7 348.4M495.9 316.5L557.8 350.4M496.0 318.5L557.9 352.4M496.1 320.5L558.0 354.4M496.2 322.5L558.1 356.4M496.3 324.5L558.2 358.4M496.4 326.6L558.3 360.4M496.5 328.6L558.4 362.4M496.6 330.6L558.6 364.4M496.7 332.6L558.7 366.4M496.8 334.6L558.8 368.4M496.9 336.7L558.9 370.4M496.9 338.7L559.0 372.4M497.0 340.7L559.1 374.4M497.1 342.7L559.2 376.4M497.2 344.8L559.3 378.4M497.3 346.8L559.4 380.4M497.4 348.8L559.5 382.4M497.5 350.8L559.6 384.4M497.6 352.9L559.8 386.4M497.7 354.9L559.9 388.4M497.8 356.9L560.0 390.4M497.9 359.0L560.1 392.5M498.0 361.0L560.2 394.5M498.0 363.0L560.3 396.5M498.1 365.1L560.4 398.5M498.2 367.1L560.5 400.5M498.3 369.2L560.6 402.6M498.4 371.2L560.7 404.6M498.5 373.3L560.9 406.6M498.6 375.3L561.0 408.6M498.7 377.3L561.1 410.6M498.8 379.4L561.2 412.7M410.4 165.4L498.1 379.0M410.4 165.4L330.6 289.6M412.4 166.5L500.0 380.0M412.4 166.5L332.7 290.7M414.3 167.6L501.9 381.0M414.3 167.6L334.7 291.9M416.3 168.7L503.8 382.0M416.3 168.7L336.8 293.0M418.2 169.9L505.7 383.0M418.2 169.9L338.9 294.1M420.1 171.0L507.6 384.1M420.1 171.0L340.9 295.2M422.1 172.1L509.5 385.1M422.1 172.1L343.0 296.3M424.0 173.2L511.4 386.1M424.0 173.2L345.1 297.4M425.9 174.3L513.3 387.1M425.9 174.3L347.1 298.5M427.9 175.4L515.2 388.1M427.9 175.4L349.2 299.6M429.8 176.5L517.1 389.1M429.8 176.5L351.2 300.7M431.7 177.6L519.0 390.1M431.7 177.6L353.3 301.8M433.6 178.7L520.9 391.2M433.6 178.7L355.4 302.9M435.6 179.8L522.8 392.2M435.6 179.8L357.4 303.9M437.5 180.9L524.7 393.2M437.5 180.9L359.5 305.0M439.4 182.0L526.6 394.2M439.4 182.0L361.5 306.1M441.3 183.1L528.5 395.2M441.3 183.1L363.5 307.2M443.2 184.2L530.4 396.2M443.2 184.2L365.6 308.3M445.1 185.3L532.3 397.2M445.1 185.3L367.6 309.4M447.1 186.4L534.1 398.2M447.1 186.4L369.7 310.5M449.0 187.5L536.0 399.2M449.0 187.5L371.7 311.6M450.9 188.6L537.9 400.2M450.9 188.6L373.7 312.7M452.8 189.7L539.8 401.2M452.8 189.7L375.8 313.7M454.7 190.8L541.7 402.2M454.7 190.8L377.8 314.8M456.6 191.9L543.5 403.2M456.6 191.9L379.8 315.9M458.5 193.0L545.4 404.2M458.5 193.0L381.9 317.0M460.4 194.0L547.3 405.2M460.4 194.0L383.9 318.1M462.3 195.1L549.1 406.2M462.3 195.1L385.9 319.2M464.2 196.2L551.0 407.2M464.2 196.2L387.9 320.2M466.1 197.3L552.9 408.2M466.1 197.3L390.0 321.3M468.0 198.4L554.7 409.2M468.0 198.4L392.0 322.4M469.9 199.5L556.6 410.2M469.9 199.5L394.0 323.5M471.7 200.6L558.5 411.2M471.7 200.6L396.0 324.5M473.6 201.6L560.3 412.2M473.6 201.6L398.0 325.6M475.5 202.7L562.2 413.2M475.5 202.7L400.0 326.7M477.4 203.8L564.0 414.1M477.4 203.8L402.0 327.7M479.3 204.9L565.9 415.1M479.3 204.9L404.0 328.8M481.2 206.0L567.7 416.1M481.2 206.0L406.0 329.9M483.0 207.0L569.6 417.1M483.0 207.0L408.0 331.0M484.9 208.1L571.4 418.1M484.9 208.1L410.0 332.0M486.8 209.2L573.3 419.1M486.8 209.2L412.0 333.1M488.7 210.3L575.1 420.1M488.7 210.3L414.0 334.2M490.5 211.3L577.0 421.0M490.5 211.3L416.0 335.2M492.4 212.4L578.8 422.0M492.4 212.4L418.0 336.3M494.3 213.5L580.6 423.0M494.3 213.5L420.0 337.3M496.1 214.5L582.5 424.0M496.1 214.5L422.0 338.4M498.0 215.6L584.3 425.0M498.0 215.6L424.0 339.5M499.9 216.7L586.2 426.0M499.9 216.7L426.0 340.5M501.7 217.7L588.0 426.9M501.7 217.7L428.0 341.6M503.6 218.8L589.8 427.9M503.6 218.8L429.9 342.6M505.4 219.9L591.7 428.9M505.4 219.9L431.9 343.7M507.3 220.9L593.5 429.9M507.3 220.9L433.9 344.7M509.1 222.0L595.3 430.8M509.1 222.0L435.9 345.8M511.0 223.1L597.1 431.8M511.0 223.1L437.8 346.8M512.9 224.1L599.0 432.8M512.9 224.1L439.8 347.9M514.7 225.2L600.8 433.7M514.7 225.2L441.8 349.0M516.5 226.2L602.6 434.7M516.5 226.2L443.8 350.0M518.4 227.3L604.4 435.7M518.4 227.3L445.7 351.1M520.2 228.4L606.2 436.7M520.2 228.4L447.7 352.1M522.1 229.4L608.0 437.6M522.1 229.4L449.6 353.1M523.9 230.5L609.9 438.6M523.9 230.5L451.6 354.2M525.8 231.5L611.7 439.6M525.8 231.5L453.6 355.2M527.6 232.6L613.5 440.5M527.6 232.6L455.5 356.3M529.4 233.6L615.3 441.5M529.4 233.6L457.5 357.3M531.3 234.7L617.1 442.4M531.3 234.7L459.4 358.4M533.1 235.7L618.9 443.4M533.1 235.7L461.4 359.4M534.9 236.8L620.7 444.4M534.9 236.8L463.3 360.4M536.8 237.8L622.5 445.3M536.8 237.8L465.3 361.5M538.6 238.9L624.3 446.3M538.6 238.9L467.2 362.5M540.4 239.9L626.1 447.3M540.4 239.9L469.2 363.6M542.2 241.0L627.9 448.2M542.2 241.0L471.1 364.6M544.1 242.0L629.7 449.2M544.1 242.0L473.0 365.6M545.9 243.1L631.5 450.1M545.9 243.1L475.0 366.7M547.7 244.1L633.3 451.1M547.7 244.1L476.9 367.7M549.5 245.1L635.1 452.0M549.5 245.1L478.9 368.7M551.3 246.2L636.9 453.0M551.3 246.2L480.8 369.8M553.1 247.2L638.6 453.9M553.1 247.2L482.7 370.8M555.0 248.3L640.4 454.9M555.0 248.3L484.7 371.8M556.8 249.3L642.2 455.8M556.8 249.3L486.6 372.8M558.6 250.3L644.0 456.8M558.6 250.3L488.5 373.9M560.4 251.4L645.8 457.7M560.4 251.4L490.4 374.9M562.2 252.4L647.5 458.7M562.2 252.4L492.4 375.9M564.0 253.5L649.3 459.6M564.0 253.5L494.3 376.9M565.8 254.5L651.1 460.6M565.8 254.5L496.2 378.0M567.6 255.5L652.9 461.5M567.6 255.5L498.1 379.0M569.4 256.5L654.6 462.5M569.4 256.5L500.0 380.0M571.2 257.6L656.4 463.4M571.2 257.6L501.9 381.0M573.0 258.6L658.2 464.4M573.0 258.6L503.8 382.1M574.8 259.6L660.0 465.3M574.8 259.6L505.8 383.1M576.6 260.7L661.7 466.3M576.6 260.7L507.7 384.1M578.4 261.7L663.5 467.2M578.4 261.7L509.6 385.1M580.2 262.7L665.2 468.1M580.2 262.7L511.5 386.1M582.0 263.7L667.0 469.1M582.0 263.7L513.4 387.1M583.7 264.8L668.8 470.0M583.7 264.8L515.3 388.1M585.5 265.8L670.5 470.9M585.5 265.8L517.2 389.2M587.3 266.8L672.3 471.9M587.3 266.8L519.1 390.2M589.1 267.8L674.0 472.8M589.1 267.8L521.0 391.2M590.9 268.9L675.8 473.8M590.9 268.9L522.9 392.2M592.6 269.9L677.5 474.7M592.6 269.9L524.8 393.2M594.4 270.9L679.3 475.6M594.4 270.9L526.6 394.2M596.2 271.9L681.0 476.6M596.2 271.9L528.5 395.2M598.0 272.9L682.8 477.5M598.0 272.9L530.4 396.2M599.7 273.9L684.5 478.4M599.7 273.9L532.3 397.2M601.5 275.0L686.3 479.3M601.5 275.0L534.2 398.2M603.3 276.0L688.0 480.3M603.3 276.0L536.1 399.2M605.1 277.0L689.8 481.2M605.1 277.0L537.9 400.2M606.8 278.0L691.5 482.1M606.8 278.0L539.8 401.2M608.6 279.0L693.2 483.1M608.6 279.0L541.7 402.2M610.3 280.0L695.0 484.0M610.3 280.0L543.6 403.2M612.1 281.0L696.7 484.9M612.1 281.0L545.4 404.2M613.9 282.0L698.4 485.8M613.9 282.0L547.3 405.2M615.6 283.1L700.2 486.8M615.6 283.1L549.2 406.2M617.4 284.1L701.9 487.7M617.4 284.1L551.0 407.2M619.1 285.1L703.6 488.6M619.1 285.1L552.9 408.2M620.9 286.1L705.4 489.5M620.9 286.1L554.8 409.2M622.6 287.1L707.1 490.4M622.6 287.1L556.6 410.2M624.4 288.1L708.8 491.4M624.4 288.1L558.5 411.2M626.1 289.1L710.5 492.3M626.1 289.1L560.4 412.2" stroke="#070707" stroke-width="0.7" fill="none" opacity="1" shape-rendering="crispEdges"/>
<clipPath id="c11"><polygon points="551.0,246.0 574.0,256.3 578.5,428.8 559.8,409.8 552.5,302.0"/></clipPath>
<polygon points="551.0,246.0 574.0,256.3 578.5,428.8 559.8,409.8 552.5,302.0" fill="#7c7c7c"/>
<path clip-path="url(#c11)" d="M550.5 245.8L574.5 256.5M550.6 247.6L574.5 258.2M550.6 249.3L574.5 260.0M550.7 251.1L574.6 261.7M550.7 252.8L574.6 263.5M550.8 254.6L574.7 265.2M550.8 256.3L574.7 266.9M550.9 258.1L574.8 268.7M550.9 259.8L574.8 270.4M551.0 261.6L574.9 272.2M551.0 263.3L574.9 273.9M551.1 265.1L575.0 275.6M551.1 266.8L575.0 277.4M551.2 268.6L575.0 279.1M551.2 270.3L575.1 280.8M551.3 272.1L575.1 282.6M551.3 273.8L575.2 284.3M551.4 275.6L575.2 286.0M551.4 277.3L575.3 287.7M551.5 279.1L575.3 289.5M551.5 280.8L575.4 291.2M551.6 282.6L575.4 292.9M551.6 284.3L575.4 294.7M551.7 286.0L575.5 296.4M551.7 287.8L575.5 298.1M551.8 289.5L575.6 299.8M551.8 291.3L575.6 301.6M551.9 293.0L575.7 303.3M551.9 294.7L575.7 305.0M552.0 296.5L575.8 306.7M552.0 298.2L575.8 308.4M552.1 299.9L575.9 310.2M552.1 301.7L575.9 311.9M552.2 303.4L575.9 313.6M552.2 305.2L576.0 315.3M552.3 306.9L576.0 317.0M552.3 308.6L576.1 318.8M552.4 310.4L576.1 320.5M552.4 312.1L576.2 322.2M552.5 313.8L576.2 323.9M552.5 315.5L576.3 325.6M552.6 317.3L576.3 327.3M552.6 319.0L576.3 329.1M552.7 320.7L576.4 330.8M552.7 322.5L576.4 332.5M552.8 324.2L576.5 334.2M552.8 325.9L576.5 335.9M552.9 327.6L576.6 337.6M552.9 329.4L576.6 339.3M553.0 331.1L576.7 341.0M553.0 332.8L576.7 342.7M553.1 334.5L576.7 344.4M553.1 336.3L576.8 346.1M553.2 338.0L576.8 347.8M553.2 339.7L576.9 349.6M553.3 341.4L576.9 351.3M553.3 343.1L577.0 353.0M553.4 344.8L577.0 354.7M553.4 346.6L577.1 356.4M553.5 348.3L577.1 358.1M553.5 350.0L577.1 359.8M553.6 351.7L577.2 361.5M553.6 353.4L577.2 363.2M553.7 355.1L577.3 364.9M553.7 356.9L577.3 366.6M553.8 358.6L577.4 368.3M553.8 360.3L577.4 370.0M553.9 362.0L577.5 371.7M553.9 363.7L577.5 373.4M554.0 365.4L577.5 375.0M554.0 367.1L577.6 376.7M554.1 368.8L577.6 378.4M554.1 370.5L577.7 380.1M554.2 372.2L577.7 381.8M554.2 373.9L577.8 383.5M554.3 375.7L577.8 385.2M554.3 377.4L577.9 386.9M554.4 379.1L577.9 388.6M554.4 380.8L577.9 390.3M554.5 382.5L578.0 392.0M554.5 384.2L578.0 393.6M554.6 385.9L578.1 395.3M554.6 387.6L578.1 397.0M554.7 389.3L578.2 398.7M554.7 391.0L578.2 400.4M554.8 392.7L578.2 402.1M554.8 394.4L578.3 403.7M554.9 396.1L578.3 405.4M554.9 397.8L578.4 407.1M555.0 399.5L578.4 408.8M555.0 401.2L578.5 410.5M555.1 402.9L578.5 412.2M555.1 404.5L578.6 413.8M555.2 406.2L578.6 415.5M555.2 407.9L578.6 417.2M555.3 409.6L578.7 418.9M555.3 411.3L578.7 420.5M555.4 413.0L578.8 422.2M555.4 414.7L578.8 423.9M555.4 416.4L578.9 425.6M555.5 418.1L578.9 427.2M555.5 419.8L578.9 428.9M555.6 421.4L579.0 430.6M442.5 197.4L553.1 418.9M442.5 197.4L339.5 335.3M444.6 198.4L555.0 419.6M444.6 198.4L341.7 336.2M446.8 199.3L557.0 420.4M446.8 199.3L344.0 337.1M448.9 200.3L559.0 421.2M448.9 200.3L346.2 338.0M451.1 201.3L561.0 421.9M451.1 201.3L348.5 338.8M453.2 202.2L562.9 422.7M453.2 202.2L350.7 339.7M455.4 203.2L564.9 423.5M455.4 203.2L353.0 340.6M457.5 204.1L566.8 424.2M457.5 204.1L355.2 341.5M459.7 205.1L568.8 425.0M459.7 205.1L357.5 342.4M461.8 206.1L570.7 425.8M461.8 206.1L359.7 343.2M463.9 207.0L572.7 426.5M463.9 207.0L361.9 344.1M466.1 208.0L574.6 427.3M466.1 208.0L364.2 345.0M468.2 208.9L576.6 428.1M468.2 208.9L366.4 345.8M470.3 209.9L578.5 428.8M470.3 209.9L368.6 346.7M472.4 210.8L580.5 429.6M472.4 210.8L370.8 347.6M474.6 211.8L582.4 430.3M474.6 211.8L373.1 348.5M476.7 212.7L584.3 431.1M476.7 212.7L375.3 349.3M478.8 213.7L586.3 431.8M478.8 213.7L377.5 350.2M480.9 214.6L588.2 432.6M480.9 214.6L379.7 351.0M483.0 215.6L590.1 433.4M483.0 215.6L381.9 351.9M485.1 216.5L592.1 434.1M485.1 216.5L384.1 352.8M487.2 217.4L594.0 434.9M487.2 217.4L386.3 353.6M489.3 218.4L595.9 435.6M489.3 218.4L388.5 354.5M491.4 219.3L597.8 436.4M491.4 219.3L390.7 355.3M493.5 220.3L599.7 437.1M493.5 220.3L392.9 356.2M495.6 221.2L601.7 437.9M495.6 221.2L395.1 357.1M497.7 222.1L603.6 438.6M497.7 222.1L397.3 357.9M499.8 223.1L605.5 439.4M499.8 223.1L399.4 358.8M501.8 224.0L607.4 440.1M501.8 224.0L401.6 359.6M503.9 224.9L609.3 440.8M503.9 224.9L403.8 360.5M506.0 225.9L611.2 441.6M506.0 225.9L406.0 361.3M508.1 226.8L613.1 442.3M508.1 226.8L408.1 362.2M510.2 227.7L615.0 443.1M510.2 227.7L410.3 363.0M512.2 228.6L616.9 443.8M512.2 228.6L412.5 363.9M514.3 229.6L618.8 444.6M514.3 229.6L414.6 364.7M516.3 230.5L620.7 445.3M516.3 230.5L416.8 365.6M518.4 231.4L622.5 446.0M518.4 231.4L418.9 366.4M520.5 232.3L624.4 446.8M520.5 232.3L421.1 367.2M522.5 233.2L626.3 447.5M522.5 233.2L423.2 368.1M524.6 234.2L628.2 448.2M524.6 234.2L425.4 368.9M526.6 235.1L630.1 449.0M526.6 235.1L427.5 369.8M528.7 236.0L631.9 449.7M528.7 236.0L429.7 370.6M530.7 236.9L633.8 450.4M530.7 236.9L431.8 371.4M532.8 237.8L635.7 451.2M532.8 237.8L434.0 372.3M534.8 238.7L637.6 451.9M534.8 238.7L436.1 373.1M536.8 239.7L639.4 452.6M536.8 239.7L438.2 373.9M538.9 240.6L641.3 453.4M538.9 240.6L440.3 374.8M540.9 241.5L643.1 454.1M540.9 241.5L442.5 375.6M542.9 242.4L645.0 454.8M542.9 242.4L444.6 376.4M544.9 243.3L646.9 455.5M544.9 243.3L446.7 377.3M547.0 244.2L648.7 456.3M547.0 244.2L448.8 378.1M549.0 245.1L650.6 457.0M549.0 245.1L450.9 378.9M551.0 246.0L652.4 457.7M551.0 246.0L453.0 379.7M553.0 246.9L654.3 458.4M553.0 246.9L455.1 380.6M555.0 247.8L656.1 459.2M555.0 247.8L457.2 381.4M557.0 248.7L657.9 459.9M557.0 248.7L459.3 382.2M559.0 249.6L659.8 460.6M559.0 249.6L461.4 383.0M561.0 250.5L661.6 461.3M561.0 250.5L463.5 383.8M563.0 251.4L663.5 462.0M563.0 251.4L465.6 384.7M565.0 252.3L665.3 462.7M565.0 252.3L467.7 385.5M567.0 253.2L667.1 463.5M567.0 253.2L469.8 386.3M569.0 254.1L668.9 464.2M569.0 254.1L471.9 387.1M571.0 255.0L670.8 464.9M571.0 255.0L474.0 387.9M573.0 255.9L672.6 465.6M573.0 255.9L476.0 388.7M575.0 256.7L674.4 466.3M575.0 256.7L478.1 389.5M577.0 257.6L676.2 467.0M577.0 257.6L480.2 390.4M579.0 258.5L678.1 467.7M579.0 258.5L482.3 391.2M580.9 259.4L679.9 468.4M580.9 259.4L484.3 392.0M582.9 260.3L681.7 469.2M582.9 260.3L486.4 392.8M584.9 261.2L683.5 469.9M584.9 261.2L488.5 393.6M586.8 262.1L685.3 470.6M586.8 262.1L490.5 394.4M588.8 262.9L687.1 471.3M588.8 262.9L492.6 395.2M590.8 263.8L688.9 472.0M590.8 263.8L494.6 396.0M592.7 264.7L690.7 472.7M592.7 264.7L496.7 396.8M594.7 265.6L692.5 473.4M594.7 265.6L498.7 397.6M596.7 266.4L694.3 474.1M596.7 266.4L500.8 398.4M598.6 267.3L696.1 474.8M598.6 267.3L502.8 399.2M600.6 268.2L697.9 475.5M600.6 268.2L504.8 400.0M602.5 269.1L699.7 476.2M602.5 269.1L506.9 400.8M604.5 269.9L701.5 476.9M604.5 269.9L508.9 401.6M606.4 270.8L703.2 477.6M606.4 270.8L511.0 402.4M608.3 271.7L705.0 478.3M608.3 271.7L513.0 403.2M610.3 272.5L706.8 479.0M610.3 272.5L515.0 404.0M612.2 273.4L708.6 479.7M612.2 273.4L517.0 404.8M614.1 274.3L710.4 480.4M614.1 274.3L519.1 405.5M616.1 275.1L712.1 481.1M616.1 275.1L521.1 406.3M618.0 276.0L713.9 481.8M618.0 276.0L523.1 407.1M619.9 276.9L715.7 482.5M619.9 276.9L525.1 407.9M621.9 277.7L717.5 483.1M621.9 277.7L527.1 408.7M623.8 278.6L719.2 483.8M623.8 278.6L529.1 409.5M625.7 279.5L721.0 484.5M625.7 279.5L531.1 410.3M627.6 280.3L722.7 485.2M627.6 280.3L533.1 411.1M629.5 281.2L724.5 485.9M629.5 281.2L535.1 411.8M631.4 282.0L726.3 486.6M631.4 282.0L537.1 412.6M633.3 282.9L728.0 487.3M633.3 282.9L539.1 413.4M635.3 283.7L729.8 488.0M635.3 283.7L541.1 414.2M637.2 284.6L731.5 488.6M637.2 284.6L543.1 415.0M639.1 285.4L733.3 489.3M639.1 285.4L545.1 415.7M641.0 286.3L735.0 490.0M641.0 286.3L547.1 416.5M642.9 287.1L736.8 490.7M642.9 287.1L549.0 417.3M644.7 288.0L738.5 491.4M644.7 288.0L551.0 418.1M646.6 288.8L740.2 492.1M646.6 288.8L553.0 418.8M648.5 289.7L742.0 492.7M648.5 289.7L555.0 419.6M650.4 290.5L743.7 493.4M650.4 290.5L556.9 420.4M652.3 291.4L745.4 494.1M652.3 291.4L558.9 421.1M654.2 292.2L747.2 494.8M654.2 292.2L560.9 421.9M656.1 293.0L748.9 495.4M656.1 293.0L562.8 422.7M657.9 293.9L750.6 496.1M657.9 293.9L564.8 423.4M659.8 294.7L752.4 496.8M659.8 294.7L566.8 424.2M661.7 295.6L754.1 497.5M661.7 295.6L568.7 425.0M663.5 296.4L755.8 498.1M663.5 296.4L570.7 425.7M665.4 297.2L757.5 498.8M665.4 297.2L572.6 426.5M667.3 298.1L759.2 499.5M667.3 298.1L574.6 427.3M669.1 298.9L760.9 500.2M669.1 298.9L576.5 428.0M671.0 299.7L762.7 500.8M671.0 299.7L578.5 428.8M672.9 300.6L764.4 501.5M672.9 300.6L580.4 429.5" stroke="#070707" stroke-width="0.7" fill="none" opacity="1" shape-rendering="crispEdges"/>
<path d="M492.4 212.4L523.6 207.4M492.4 212.4L551 246L584.7 238.6M492.4 212.4L496 267M551 246L552.5 302" stroke="#9a9a9a" stroke-width="0.7" stroke-dasharray="1.2 0.8" fill="none"/>
<clipPath id="c12"><polygon points="503.5,290.0 564.5,278.5 568.0,399.0 508.0,410.0"/></clipPath>
<polygon points="503.5,290.0 564.5,278.5 568.0,399.0 508.0,410.0" fill="#4a4a4a"/>
<path clip-path="url(#c12)" d="M503.6 291.2L564.7 279.6M503.7 293.0L564.7 281.4M503.8 294.8L564.8 283.2M503.9 296.6L564.8 285.0M503.9 298.4L564.9 286.8M504.0 300.2L564.9 288.6M504.1 302.0L565.0 290.4M504.2 303.8L565.0 292.2M504.2 305.6L565.1 294.0M504.3 307.4L565.1 295.8M504.4 309.2L565.2 297.6M504.5 311.0L565.2 299.3M504.6 312.8L565.3 301.1M504.6 314.6L565.3 302.9M504.7 316.4L565.4 304.7M504.8 318.1L565.4 306.5M504.9 319.9L565.5 308.3M504.9 321.7L565.5 310.0M505.0 323.5L565.5 311.8M505.1 325.2L565.6 313.6M505.2 327.0L565.6 315.4M505.2 328.8L565.7 317.1M505.3 330.6L565.7 318.9M505.4 332.3L565.8 320.7M505.5 334.1L565.8 322.4M505.6 335.9L565.9 324.2M505.6 337.6L565.9 326.0M505.7 339.4L566.0 327.7M505.8 341.2L566.0 329.5M505.9 342.9L566.1 331.3M505.9 344.7L566.1 333.0M506.0 346.4L566.2 334.8M506.1 348.2L566.2 336.5M506.2 349.9L566.3 338.3M506.2 351.7L566.3 340.0M506.3 353.4L566.4 341.8M506.4 355.2L566.4 343.5M506.5 356.9L566.5 345.3M506.5 358.7L566.5 347.0M506.6 360.4L566.6 348.8M506.7 362.2L566.6 350.5M506.8 363.9L566.6 352.2M506.8 365.6L566.7 354.0M506.9 367.4L566.7 355.7M507.0 369.1L566.8 357.4M507.1 370.8L566.8 359.2M507.1 372.6L566.9 360.9M507.2 374.3L566.9 362.6M507.3 376.0L567.0 364.4M507.4 377.7L567.0 366.1M507.4 379.5L567.1 367.8M507.5 381.2L567.1 369.5M507.6 382.9L567.2 371.3M507.7 384.6L567.2 373.0M507.7 386.4L567.3 374.7M507.8 388.1L567.3 376.4M507.9 389.8L567.4 378.1M508.0 391.5L567.4 379.9M508.0 393.2L567.4 381.6M508.1 394.9L567.5 383.3M508.2 396.6L567.5 385.0M508.3 398.3L567.6 386.7M508.3 400.0L567.6 388.4M508.4 401.7L567.7 390.1M508.5 403.5L567.7 391.8M508.6 405.2L567.8 393.5M508.6 406.9L567.8 395.2M508.7 408.6L567.9 396.9M435.9 304.2L506.4 408.0M435.9 304.2L379.2 433.0M437.8 303.8L508.3 407.6M437.8 303.8L381.1 432.6M439.8 303.4L510.2 407.2M439.8 303.4L383.1 432.2M441.8 303.0L512.1 406.9M441.8 303.0L385.0 431.9M443.8 302.6L514.0 406.5M443.8 302.6L386.9 431.5M445.7 302.3L515.9 406.1M445.7 302.3L388.8 431.1M447.7 301.9L517.8 405.7M447.7 301.9L390.8 430.7M449.7 301.5L519.7 405.4M449.7 301.5L392.7 430.4M451.7 301.1L521.6 405.0M451.7 301.1L394.6 430.0M453.6 300.8L523.5 404.6M453.6 300.8L396.5 429.6M455.6 300.4L525.4 404.2M455.6 300.4L398.5 429.2M457.6 300.0L527.3 403.9M457.6 300.0L400.4 428.8M459.6 299.6L529.2 403.5M459.6 299.6L402.3 428.5M461.5 299.3L531.1 403.1M461.5 299.3L404.2 428.1M463.5 298.9L533.0 402.7M463.5 298.9L406.2 427.7M465.5 298.5L534.9 402.4M465.5 298.5L408.1 427.3M467.4 298.1L536.8 402.0M467.4 298.1L410.0 426.9M469.4 297.8L538.7 401.6M469.4 297.8L411.9 426.6M471.4 297.4L540.6 401.2M471.4 297.4L413.8 426.2M473.3 297.0L542.5 400.9M473.3 297.0L415.8 425.8M475.3 296.6L544.4 400.5M475.3 296.6L417.7 425.4M477.3 296.2L546.2 400.1M477.3 296.2L419.6 425.1M479.3 295.9L548.1 399.8M479.3 295.9L421.5 424.7M481.2 295.5L550.0 399.4M481.2 295.5L423.4 424.3M483.2 295.1L551.9 399.0M483.2 295.1L425.4 423.9M485.2 294.7L553.8 398.6M485.2 294.7L427.3 423.5M487.1 294.4L555.7 398.3M487.1 294.4L429.2 423.2M489.1 294.0L557.6 397.9M489.1 294.0L431.1 422.8M491.1 293.6L559.5 397.5M491.1 293.6L433.0 422.4M493.0 293.2L561.4 397.1M493.0 293.2L434.9 422.0M495.0 292.9L563.3 396.8M495.0 292.9L436.9 421.7M496.9 292.5L565.2 396.4M496.9 292.5L438.8 421.3M498.9 292.1L567.1 396.0M498.9 292.1L440.7 420.9M500.9 291.7L569.0 395.7M500.9 291.7L442.6 420.5M502.8 291.4L570.9 395.3M502.8 291.4L444.5 420.1M504.8 291.0L572.7 394.9M504.8 291.0L446.4 419.8M506.8 290.6L574.6 394.5M506.8 290.6L448.4 419.4M508.7 290.3L576.5 394.2M508.7 290.3L450.3 419.0M510.7 289.9L578.4 393.8M510.7 289.9L452.2 418.6M512.6 289.5L580.3 393.4M512.6 289.5L454.1 418.3M514.6 289.1L582.2 393.1M514.6 289.1L456.0 417.9M516.6 288.8L584.1 392.7M516.6 288.8L457.9 417.5M518.5 288.4L586.0 392.3M518.5 288.4L459.8 417.1M520.5 288.0L587.9 391.9M520.5 288.0L461.7 416.8M522.4 287.6L589.7 391.6M522.4 287.6L463.7 416.4M524.4 287.3L591.6 391.2M524.4 287.3L465.6 416.0M526.4 286.9L593.5 390.8M526.4 286.9L467.5 415.6M528.3 286.5L595.4 390.5M528.3 286.5L469.4 415.3M530.3 286.1L597.3 390.1M530.3 286.1L471.3 414.9M532.2 285.8L599.2 389.7M532.2 285.8L473.2 414.5M534.2 285.4L601.1 389.3M534.2 285.4L475.1 414.1M536.2 285.0L602.9 389.0M536.2 285.0L477.0 413.8M538.1 284.6L604.8 388.6M538.1 284.6L478.9 413.4M540.1 284.3L606.7 388.2M540.1 284.3L480.8 413.0M542.0 283.9L608.6 387.9M542.0 283.9L482.8 412.6M544.0 283.5L610.5 387.5M544.0 283.5L484.7 412.2M545.9 283.2L612.4 387.1M545.9 283.2L486.6 411.9M547.9 282.8L614.2 386.7M547.9 282.8L488.5 411.5M549.8 282.4L616.1 386.4M549.8 282.4L490.4 411.1M551.8 282.0L618.0 386.0M551.8 282.0L492.3 410.7M553.7 281.7L619.9 385.6M553.7 281.7L494.2 410.4M555.7 281.3L621.8 385.3M555.7 281.3L496.1 410.0M557.6 280.9L623.6 384.9M557.6 280.9L498.0 409.6M559.6 280.5L625.5 384.5M559.6 280.5L499.9 409.2M561.5 280.2L627.4 384.2M561.5 280.2L501.8 408.9M563.5 279.8L629.3 383.8M563.5 279.8L503.7 408.5M565.5 279.4L631.2 383.4M565.5 279.4L505.6 408.1M567.4 279.1L633.0 383.0M567.4 279.1L507.5 407.7M569.4 278.7L634.9 382.7M569.4 278.7L509.4 407.4M571.3 278.3L636.8 382.3M571.3 278.3L511.3 407.0M573.2 277.9L638.7 381.9M573.2 277.9L513.2 406.6M575.2 277.6L640.5 381.6M575.2 277.6L515.1 406.3M577.1 277.2L642.4 381.2M577.1 277.2L517.0 405.9M579.1 276.8L644.3 380.8M579.1 276.8L518.9 405.5M581.0 276.5L646.2 380.5M581.0 276.5L520.8 405.1M583.0 276.1L648.0 380.1M583.0 276.1L522.7 404.8M584.9 275.7L649.9 379.7M584.9 275.7L524.6 404.4M586.9 275.3L651.8 379.3M586.9 275.3L526.5 404.0M588.8 275.0L653.7 379.0M588.8 275.0L528.4 403.6M590.8 274.6L655.5 378.6M590.8 274.6L530.3 403.3M592.7 274.2L657.4 378.2M592.7 274.2L532.2 402.9M594.7 273.9L659.3 377.9M594.7 273.9L534.1 402.5M596.6 273.5L661.2 377.5M596.6 273.5L536.0 402.1M598.6 273.1L663.0 377.1M598.6 273.1L537.9 401.8M600.5 272.7L664.9 376.8M600.5 272.7L539.8 401.4M602.4 272.4L666.8 376.4M602.4 272.4L541.7 401.0M604.4 272.0L668.7 376.0M604.4 272.0L543.6 400.6M606.3 271.6L670.5 375.7M606.3 271.6L545.5 400.3M608.3 271.3L672.4 375.3M608.3 271.3L547.4 399.9M610.2 270.9L674.3 374.9M610.2 270.9L549.3 399.5M612.1 270.5L676.1 374.6M612.1 270.5L551.2 399.2M614.1 270.1L678.0 374.2M614.1 270.1L553.1 398.8M616.0 269.8L679.9 373.8M616.0 269.8L555.0 398.4M618.0 269.4L681.7 373.5M618.0 269.4L556.9 398.0M619.9 269.0L683.6 373.1M619.9 269.0L558.8 397.7M621.8 268.7L685.5 372.7M621.8 268.7L560.7 397.3M623.8 268.3L687.3 372.4M623.8 268.3L562.5 396.9M625.7 267.9L689.2 372.0M625.7 267.9L564.4 396.5M627.7 267.6L691.1 371.6M627.7 267.6L566.3 396.2M629.6 267.2L692.9 371.2M629.6 267.2L568.2 395.8M631.5 266.8L694.8 370.9M631.5 266.8L570.1 395.4" stroke="#050505" stroke-width="0.7" fill="none" opacity="1" shape-rendering="crispEdges"/>
<clipPath id="c13"><polygon points="506.5,337.0 527.0,344.0 548.5,345.0 550.0,401.0 509.0,409.0"/></clipPath>
<polygon points="506.5,337.0 527.0,344.0 548.5,345.0 550.0,401.0 509.0,409.0" fill="#7a7a7a"/>
<path clip-path="url(#c13)" d="M506.2 326.2L547.8 317.8M506.3 328.0L547.9 319.7M506.3 329.9L547.9 321.6M506.4 331.7L547.9 323.5M506.5 333.6L548.0 325.4M506.6 335.5L548.0 327.3M506.6 337.3L548.1 329.1M506.7 339.2L548.1 331.0M506.8 341.0L548.2 332.9M506.8 342.9L548.2 334.8M506.9 344.7L548.3 336.6M507.0 346.5L548.3 338.5M507.0 348.4L548.4 340.4M507.1 350.2L548.4 342.2M507.2 352.1L548.4 344.1M507.3 353.9L548.5 345.9M507.3 355.7L548.5 347.8M507.4 357.6L548.6 349.7M507.5 359.4L548.6 351.5M507.5 361.2L548.7 353.4M507.6 363.0L548.7 355.2M507.7 364.9L548.8 357.0M507.7 366.7L548.8 358.9M507.8 368.5L548.9 360.7M507.9 370.3L548.9 362.6M507.9 372.1L548.9 364.4M508.0 373.9L549.0 366.2M508.1 375.7L549.0 368.1M508.1 377.5L549.1 369.9M508.2 379.3L549.1 371.7M508.3 381.2L549.2 373.5M508.4 383.0L549.2 375.4M508.4 384.7L549.3 377.2M508.5 386.5L549.3 379.0M508.6 388.3L549.3 380.8M508.6 390.1L549.4 382.6M508.7 391.9L549.4 384.5M508.8 393.7L549.5 386.3M508.8 395.5L549.5 388.1M508.9 397.3L549.6 389.9M509.0 399.1L549.6 391.7M509.0 400.8L549.7 393.5M509.1 402.6L549.7 395.3M509.2 404.4L549.7 397.1M509.2 406.2L549.8 398.9M459.8 335.4L508.0 406.4M459.8 335.4L420.8 422.0M461.8 335.0L510.0 406.0M461.8 335.0L422.8 421.7M463.8 334.6L512.0 405.6M463.8 334.6L424.7 421.3M465.9 334.2L514.0 405.3M465.9 334.2L426.7 421.0M467.9 333.8L516.1 404.9M467.9 333.8L428.6 420.6M469.9 333.4L518.1 404.5M469.9 333.4L430.6 420.3M472.0 333.0L520.2 404.2M472.0 333.0L432.5 419.9M474.0 332.6L522.2 403.8M474.0 332.6L434.5 419.6M476.1 332.2L524.2 403.4M476.1 332.2L436.4 419.2M478.1 331.8L526.3 403.1M478.1 331.8L438.4 418.9M480.2 331.4L528.3 402.7M480.2 331.4L440.3 418.5M482.2 331.0L530.4 402.3M482.2 331.0L442.3 418.2M484.3 330.5L532.4 402.0M484.3 330.5L444.2 417.8M486.3 330.1L534.5 401.6M486.3 330.1L446.2 417.5M488.4 329.7L536.5 401.2M488.4 329.7L448.2 417.1M490.4 329.3L538.6 400.9M490.4 329.3L450.1 416.7M492.5 328.9L540.6 400.5M492.5 328.9L452.1 416.4M494.6 328.5L542.7 400.1M494.6 328.5L454.1 416.0M496.6 328.1L544.8 399.8M496.6 328.1L456.0 415.7M498.7 327.7L546.8 399.4M498.7 327.7L458.0 415.3M500.8 327.2L548.9 399.0M500.8 327.2L460.0 415.0M502.8 326.8L551.0 398.6M502.8 326.8L461.9 414.6M504.9 326.4L553.0 398.3M504.9 326.4L463.9 414.3M507.0 326.0L555.1 397.9M507.0 326.0L465.9 413.9M509.1 325.6L557.2 397.5M509.1 325.6L467.9 413.6M511.2 325.2L559.3 397.2M511.2 325.2L469.9 413.2M513.2 324.8L561.3 396.8M513.2 324.8L471.9 412.8M515.3 324.3L563.4 396.4M515.3 324.3L473.9 412.5M517.4 323.9L565.5 396.0M517.4 323.9L475.8 412.1M519.5 323.5L567.6 395.7M519.5 323.5L477.8 411.8M521.6 323.1L569.7 395.3M521.6 323.1L479.8 411.4M523.7 322.7L571.8 394.9M523.7 322.7L481.8 411.1M525.8 322.2L573.9 394.5M525.8 322.2L483.8 410.7M527.9 321.8L576.0 394.2M527.9 321.8L485.8 410.3M530.0 321.4L578.1 393.8M530.0 321.4L487.8 410.0M532.1 321.0L580.1 393.4M532.1 321.0L489.8 409.6M534.2 320.6L582.3 393.0M534.2 320.6L491.8 409.3M536.3 320.1L584.4 392.7M536.3 320.1L493.9 408.9M538.4 319.7L586.5 392.3M538.4 319.7L495.9 408.5M540.5 319.3L588.6 391.9M540.5 319.3L497.9 408.2M542.7 318.9L590.7 391.5M542.7 318.9L499.9 407.8M544.8 318.4L592.8 391.1M544.8 318.4L501.9 407.5M546.9 318.0L594.9 390.8M546.9 318.0L503.9 407.1M549.0 317.6L597.0 390.4M549.0 317.6L506.0 406.7M551.1 317.2L599.1 390.0M551.1 317.2L508.0 406.4M553.3 316.7L601.3 389.6M553.3 316.7L510.0 406.0M555.4 316.3L603.4 389.2M555.4 316.3L512.0 405.6M557.5 315.9L605.5 388.9M557.5 315.9L514.1 405.3M559.7 315.5L607.6 388.5M559.7 315.5L516.1 404.9M561.8 315.0L609.8 388.1M561.8 315.0L518.1 404.5M563.9 314.6L611.9 387.7M563.9 314.6L520.2 404.2M566.1 314.2L614.0 387.3M566.1 314.2L522.2 403.8M568.2 313.8L616.2 386.9M568.2 313.8L524.3 403.4M570.4 313.3L618.3 386.6M570.4 313.3L526.3 403.1M572.5 312.9L620.5 386.2M572.5 312.9L528.3 402.7M574.7 312.5L622.6 385.8M574.7 312.5L530.4 402.3M576.8 312.0L624.8 385.4M576.8 312.0L532.4 402.0M579.0 311.6L626.9 385.0M579.0 311.6L534.5 401.6M581.1 311.2L629.0 384.6M581.1 311.2L536.5 401.2M583.3 310.7L631.2 384.2M583.3 310.7L538.6 400.9M585.5 310.3L633.4 383.9M585.5 310.3L540.7 400.5M587.6 309.9L635.5 383.5M587.6 309.9L542.7 400.1M589.8 309.4L637.7 383.1M589.8 309.4L544.8 399.8M592.0 309.0L639.8 382.7M592.0 309.0L546.8 399.4M594.1 308.6L642.0 382.3M594.1 308.6L548.9 399.0M596.3 308.1L644.2 381.9M596.3 308.1L551.0 398.6" stroke="#060606" stroke-width="0.7" fill="none" opacity="1" shape-rendering="crispEdges"/>
<path d="M506 320.5 L548 318.5 L548.5 346 Q526 346 506.5 338 Z" fill="#070707"/>
<clipPath id="c14"><polygon points="527.5,297.0 531.0,296.5 531.0,290.0 538.5,288.5 539.0,316.0 528.0,318.0"/></clipPath>
<polygon points="527.5,297.0 531.0,296.5 531.0,290.0 538.5,288.5 539.0,316.0 528.0,318.0" fill="#b4b4b4"/>
<path clip-path="url(#c14)" d="M526.8 290.0L538.7 288.0M526.8 291.8L538.8 289.8M526.9 293.6L538.8 291.6M527.0 295.4L538.8 293.3M527.0 297.2L538.9 295.1M527.1 299.0L538.9 296.9M527.2 300.7L538.9 298.6M527.2 302.5L538.9 300.4M527.3 304.2L539.0 302.1M527.3 305.9L539.0 303.9M527.4 307.7L539.0 305.6M527.5 309.4L539.1 307.3M527.5 311.1L539.1 309.0M527.6 312.7L539.1 310.7M527.6 314.4L539.2 312.4M527.7 316.1L539.2 314.0M527.8 317.8L539.2 315.7M505.9 293.7L524.1 318.7M505.9 293.7L491.3 324.7M508.0 293.3L526.2 318.3M508.0 293.3L493.4 324.3M510.1 292.9L528.2 318.0M510.1 292.9L495.4 323.9M512.3 292.6L530.2 317.6M512.3 292.6L497.5 323.5M514.4 292.2L532.2 317.2M514.4 292.2L499.5 323.2M516.5 291.8L534.2 316.9M516.5 291.8L501.6 322.8M518.6 291.5L536.2 316.5M518.6 291.5L503.6 322.4M520.7 291.1L538.2 316.2M520.7 291.1L505.6 322.1M522.8 290.7L540.2 315.8M522.8 290.7L507.7 321.7M524.9 290.4L542.2 315.4M524.9 290.4L509.7 321.3M527.0 290.0L544.1 315.1M527.0 290.0L511.7 321.0M529.1 289.6L546.1 314.7M529.1 289.6L513.7 320.6M531.2 289.3L548.1 314.3M531.2 289.3L515.8 320.2M533.3 288.9L550.1 314.0M533.3 288.9L517.8 319.9M535.4 288.5L552.1 313.6M535.4 288.5L519.8 319.5M537.5 288.2L554.1 313.3M537.5 288.2L521.8 319.1M539.5 287.8L556.0 312.9M539.5 287.8L523.8 318.8M541.6 287.5L558.0 312.5M541.6 287.5L525.8 318.4M543.7 287.1L560.0 312.2M543.7 287.1L527.8 318.0M545.8 286.7L561.9 311.8M545.8 286.7L529.8 317.7M547.9 286.4L563.9 311.5M547.9 286.4L531.8 317.3M549.9 286.0L565.9 311.1M549.9 286.0L533.8 316.9M552.0 285.7L567.8 310.8M552.0 285.7L535.8 316.6M554.1 285.3L569.8 310.4M554.1 285.3L537.8 316.2M556.1 284.9L571.8 310.0M556.1 284.9L539.8 315.8M558.2 284.6L573.7 309.7M558.2 284.6L541.8 315.5" stroke="#101010" stroke-width="0.55" fill="none" opacity="1"/>
<clipPath id="c15"><polygon points="548.0,296.0 565.5,292.0 566.7,396.1 549.0,399.5"/></clipPath>
<polygon points="548.0,296.0 565.5,292.0 566.7,396.1 549.0,399.5" fill="#808080"/>
<path clip-path="url(#c15)" d="M547.6 290.1L566.4 285.9M547.7 291.9L566.4 287.7M547.7 293.7L566.4 289.6M547.7 295.5L566.4 291.4M547.7 297.3L566.4 293.2M547.7 299.1L566.4 295.0M547.7 300.9L566.5 296.8M547.8 302.7L566.5 298.7M547.8 304.5L566.5 300.5M547.8 306.3L566.5 302.3M547.8 308.1L566.5 304.1M547.8 309.9L566.5 305.9M547.8 311.7L566.6 307.8M547.9 313.5L566.6 309.6M547.9 315.3L566.6 311.4M547.9 317.1L566.6 313.2M547.9 318.9L566.6 315.0M547.9 320.7L566.6 316.9M547.9 322.5L566.7 318.7M548.0 324.3L566.7 320.5M548.0 326.1L566.7 322.3M548.0 327.9L566.7 324.1M548.0 329.7L566.7 325.9M548.0 331.5L566.7 327.8M548.0 333.3L566.8 329.6M548.1 335.1L566.8 331.4M548.1 336.9L566.8 333.2M548.1 338.7L566.8 335.0M548.1 340.5L566.8 336.9M548.1 342.3L566.8 338.7M548.1 344.1L566.9 340.5M548.2 345.9L566.9 342.3M548.2 347.8L566.9 344.1M548.2 349.6L566.9 346.0M548.2 351.4L566.9 347.8M548.2 353.2L566.9 349.6M548.2 355.0L567.0 351.4M548.3 356.8L567.0 353.2M548.3 358.6L567.0 355.1M548.3 360.4L567.0 356.9M548.3 362.2L567.0 358.7M548.3 364.0L567.0 360.5M548.3 365.8L567.1 362.3M548.4 367.6L567.1 364.1M548.4 369.4L567.1 366.0M548.4 371.2L567.1 367.8M548.4 373.0L567.1 369.6M548.4 374.8L567.1 371.4M548.4 376.6L567.2 373.2M548.5 378.4L567.2 375.1M548.5 380.2L567.2 376.9M548.5 382.0L567.2 378.7M548.5 383.8L567.2 380.5M548.5 385.6L567.2 382.3M548.5 387.4L567.3 384.1M548.6 389.2L567.3 386.0M548.6 391.0L567.3 387.8M548.6 392.8L567.3 389.6M548.6 394.6L567.3 391.4M548.6 396.4L567.3 393.2M548.6 398.2L567.4 395.1M548.7 400.0L567.4 396.9M483.6 304.3L545.3 399.6M483.6 304.3L427.5 419.3M485.5 303.9L547.4 399.3M485.5 303.9L429.3 418.9M487.5 303.4L549.5 398.9M487.5 303.4L431.2 418.6M489.5 303.0L551.6 398.6M489.5 303.0L433.0 418.3M491.4 302.6L553.7 398.2M491.4 302.6L434.8 418.0M493.4 302.1L555.8 397.9M493.4 302.1L436.7 417.7M495.3 301.7L557.9 397.5M495.3 301.7L438.5 417.4M497.3 301.3L560.0 397.2M497.3 301.3L440.4 417.1M499.3 300.8L562.1 396.8M499.3 300.8L442.3 416.8M501.3 300.4L564.2 396.5M501.3 300.4L444.1 416.5M503.3 299.9L566.3 396.1M503.3 299.9L446.0 416.2M505.3 299.5L568.4 395.8M505.3 299.5L447.9 415.9M507.2 299.1L570.5 395.4M507.2 299.1L449.7 415.5M509.2 298.6L572.7 395.1M509.2 298.6L451.6 415.2M511.2 298.2L574.8 394.7M511.2 298.2L453.5 414.9M513.2 297.7L576.9 394.3M513.2 297.7L455.4 414.6M515.3 297.3L579.1 394.0M515.3 297.3L457.3 414.3M517.3 296.8L581.2 393.6M517.3 296.8L459.2 414.0M519.3 296.4L583.4 393.3M519.3 296.4L461.1 413.7M521.3 295.9L585.5 392.9M521.3 295.9L463.0 413.3M523.3 295.5L587.7 392.5M523.3 295.5L464.9 413.0M525.4 295.0L589.9 392.2M525.4 295.0L466.8 412.7M527.4 294.6L592.0 391.8M527.4 294.6L468.7 412.4M529.4 294.1L594.2 391.5M529.4 294.1L470.6 412.1M531.5 293.7L596.4 391.1M531.5 293.7L472.5 411.7M533.5 293.2L598.6 390.7M533.5 293.2L474.4 411.4M535.6 292.8L600.8 390.4M535.6 292.8L476.4 411.1M537.7 292.3L603.0 390.0M537.7 292.3L478.3 410.8M539.7 291.8L605.2 389.6M539.7 291.8L480.2 410.5M541.8 291.4L607.4 389.3M541.8 291.4L482.2 410.1M543.8 290.9L609.6 388.9M543.8 290.9L484.1 409.8M545.9 290.5L611.8 388.5M545.9 290.5L486.1 409.5M548.0 290.0L614.0 388.2M548.0 290.0L488.0 409.2M550.1 289.5L616.2 387.8M550.1 289.5L490.0 408.8M552.2 289.1L618.5 387.4M552.2 289.1L491.9 408.5M554.3 288.6L620.7 387.1M554.3 288.6L493.9 408.2M556.4 288.1L622.9 386.7M556.4 288.1L495.9 407.9M558.5 287.7L625.2 386.3M558.5 287.7L497.8 407.5M560.6 287.2L627.4 385.9M560.6 287.2L499.8 407.2M562.7 286.7L629.7 385.6M562.7 286.7L501.8 406.9M564.8 286.3L631.9 385.2M564.8 286.3L503.8 406.5M566.9 285.8L634.2 384.8M566.9 285.8L505.8 406.2M569.0 285.3L636.5 384.4M569.0 285.3L507.8 405.9M571.2 284.9L638.7 384.0M571.2 284.9L509.8 405.5M573.3 284.4L641.0 383.7M573.3 284.4L511.8 405.2M575.4 283.9L643.3 383.3M575.4 283.9L513.8 404.9M577.6 283.4L645.6 382.9M577.6 283.4L515.8 404.5M579.7 283.0L647.9 382.5M579.7 283.0L517.8 404.2M581.9 282.5L650.2 382.1M581.9 282.5L519.8 403.9M584.0 282.0L652.5 381.8M584.0 282.0L521.8 403.5M586.2 281.5L654.8 381.4M586.2 281.5L523.9 403.2M588.3 281.0L657.1 381.0M588.3 281.0L525.9 402.9M590.5 280.6L659.4 380.6M590.5 280.6L527.9 402.5M592.7 280.1L661.7 380.2M592.7 280.1L530.0 402.2M594.9 279.6L664.1 379.8M594.9 279.6L532.0 401.8M597.1 279.1L666.4 379.4M597.1 279.1L534.0 401.5M599.2 278.6L668.8 379.0M599.2 278.6L536.1 401.2M601.4 278.1L671.1 378.7M601.4 278.1L538.2 400.8M603.6 277.6L673.4 378.3M603.6 277.6L540.2 400.5M605.8 277.1L675.8 377.9M605.8 277.1L542.3 400.1M608.0 276.7L678.2 377.5M608.0 276.7L544.3 399.8M610.3 276.2L680.5 377.1M610.3 276.2L546.4 399.4M612.5 275.7L682.9 376.7M612.5 275.7L548.5 399.1M614.7 275.2L685.3 376.3M614.7 275.2L550.6 398.7M616.9 274.7L687.7 375.9M616.9 274.7L552.7 398.4M619.2 274.2L690.0 375.5M619.2 274.2L554.8 398.0M621.4 273.7L692.4 375.1M621.4 273.7L556.9 397.7M623.6 273.2L694.8 374.7M623.6 273.2L559.0 397.3M625.9 272.7L697.2 374.3M625.9 272.7L561.1 397.0M628.1 272.2L699.6 373.9M628.1 272.2L563.2 396.6M630.4 271.7L702.1 373.5M630.4 271.7L565.3 396.3M632.7 271.2L704.5 373.1M632.7 271.2L567.4 395.9M634.9 270.7L706.9 372.7M634.9 270.7L569.5 395.6" stroke="#060606" stroke-width="0.7" fill="none" opacity="1" shape-rendering="crispEdges"/>
<polygon points="868.0,203.7 927.2,192.4 979.5,209.5 868.0,229.6" fill="url(#pd1)"/>
<polygon points="927.2,192.4 979.5,209.5 984.2,224.4 963.0,202.2" fill="#5a5a5a"/>
<polygon points="963.0,202.2 993.5,196.1 1052.2,211.5 984.2,224.4 979.5,209.5" fill="url(#pd1)"/>
<clipPath id="c16"><polygon points="866.0,230.0 979.5,209.5 984.2,224.4 1052.2,211.5 1042.8,284.8 860.0,327.2"/></clipPath>
<polygon points="866.0,230.0 979.5,209.5 984.2,224.4 1052.2,211.5 1042.8,284.8 860.0,327.2" fill="#cfcfcf"/>
<path clip-path="url(#c16)" d="M861.9 230.7L1055.5 195.8M861.7 234.0L1055.2 198.7M861.5 237.3L1054.9 201.7M861.3 240.5L1054.6 204.6M861.1 243.8L1054.3 207.6M860.9 247.0L1054.0 210.5M860.7 250.2L1053.7 213.4M860.5 253.5L1053.3 216.3M860.3 256.7L1053.0 219.2M860.1 259.9L1052.7 222.2M859.9 263.1L1052.4 225.1M859.7 266.3L1052.1 228.0M859.5 269.5L1051.8 230.9M859.3 272.7L1051.5 233.8M859.1 275.9L1051.2 236.7M858.9 279.1L1050.9 239.6M858.7 282.3L1050.5 242.4M858.5 285.5L1050.2 245.3M858.3 288.6L1049.9 248.2M858.1 291.8L1049.6 251.1M858.0 295.0L1049.3 253.9M857.8 298.1L1049.0 256.8M857.6 301.3L1048.7 259.7M857.4 304.4L1048.4 262.5M857.2 307.6L1048.1 265.4M857.0 310.7L1047.8 268.2M856.8 313.8L1047.5 271.1M856.6 317.0L1047.2 273.9M856.4 320.1L1046.9 276.7M856.2 323.2L1046.6 279.6M856.0 326.3L1046.3 282.4M855.9 329.4L1046.0 285.2M793.3 243.1L853.1 328.8M793.3 243.1L720.1 359.7M797.7 242.3L857.1 327.9M797.7 242.3L724.7 358.6M802.1 241.5L861.2 326.9M802.1 241.5L729.3 357.5M806.5 240.7L865.2 326.0M806.5 240.7L733.9 356.4M810.9 239.9L869.2 325.1M810.9 239.9L738.5 355.4M815.3 239.2L873.2 324.1M815.3 239.2L743.1 354.3M819.6 238.4L877.1 323.2M819.6 238.4L747.6 353.3M823.9 237.6L881.1 322.3M823.9 237.6L752.2 352.2M828.2 236.8L885.0 321.4M828.2 236.8L756.7 351.2M832.5 236.0L888.9 320.5M832.5 236.0L761.1 350.1M836.7 235.3L892.8 319.6M836.7 235.3L765.6 349.1M841.0 234.5L896.7 318.7M841.0 234.5L770.0 348.1M845.2 233.8L900.6 317.8M845.2 233.8L774.5 347.0M849.4 233.0L904.4 316.9M849.4 233.0L778.9 346.0M853.6 232.2L908.3 316.0M853.6 232.2L783.2 345.0M857.7 231.5L912.1 315.1M857.7 231.5L787.6 344.0M861.9 230.7L915.9 314.2M861.9 230.7L791.9 343.0M866.0 230.0L919.7 313.4M866.0 230.0L796.3 342.0M870.1 229.3L923.4 312.5M870.1 229.3L800.6 341.0M874.2 228.5L927.2 311.6M874.2 228.5L804.8 340.0M878.3 227.8L930.9 310.7M878.3 227.8L809.1 339.0M882.3 227.1L934.7 309.9M882.3 227.1L813.3 338.0M886.4 226.3L938.4 309.0M886.4 226.3L817.6 337.0M890.4 225.6L942.1 308.2M890.4 225.6L821.8 336.1M894.4 224.9L945.7 307.3M894.4 224.9L826.0 335.1M898.4 224.2L949.4 306.5M898.4 224.2L830.1 334.1M902.3 223.4L953.0 305.6M902.3 223.4L834.3 333.2M906.3 222.7L956.7 304.8M906.3 222.7L838.4 332.2M910.2 222.0L960.3 303.9M910.2 222.0L842.5 331.3M914.1 221.3L963.9 303.1M914.1 221.3L846.6 330.3M918.0 220.6L967.5 302.3M918.0 220.6L850.7 329.4M921.9 219.9L971.1 301.4M921.9 219.9L854.8 328.4M925.8 219.2L974.6 300.6M925.8 219.2L858.8 327.5M929.6 218.5L978.2 299.8M929.6 218.5L862.8 326.5M933.4 217.8L981.7 299.0M933.4 217.8L866.9 325.6M937.2 217.1L985.2 298.2M937.2 217.1L870.9 324.7M941.0 216.5L988.7 297.3M941.0 216.5L874.8 323.8M944.8 215.8L992.2 296.5M944.8 215.8L878.8 322.8M948.6 215.1L995.7 295.7M948.6 215.1L882.7 321.9M952.3 214.4L999.1 294.9M952.3 214.4L886.7 321.0M956.1 213.7L1002.6 294.1M956.1 213.7L890.6 320.1M959.8 213.1L1006.0 293.3M959.8 213.1L894.5 319.2M963.5 212.4L1009.4 292.5M963.5 212.4L898.3 318.3M967.2 211.7L1012.8 291.8M967.2 211.7L902.2 317.4M970.9 211.1L1016.2 291.0M970.9 211.1L906.0 316.5M974.5 210.4L1019.6 290.2M974.5 210.4L909.9 315.6M978.2 209.8L1023.0 289.4M978.2 209.8L913.7 314.8M981.8 209.1L1026.3 288.6M981.8 209.1L917.5 313.9M985.4 208.5L1029.6 287.9M985.4 208.5L921.2 313.0M989.0 207.8L1033.0 287.1M989.0 207.8L925.0 312.1M992.6 207.2L1036.3 286.3M992.6 207.2L928.8 311.3M996.2 206.5L1039.6 285.5M996.2 206.5L932.5 310.4M999.7 205.9L1042.9 284.8M999.7 205.9L936.2 309.5M1003.2 205.2L1046.1 284.0M1003.2 205.2L939.9 308.7M1006.8 204.6L1049.4 283.3M1006.8 204.6L943.6 307.8M1010.3 204.0L1052.7 282.5M1010.3 204.0L947.3 307.0M1013.8 203.3L1055.9 281.8M1013.8 203.3L950.9 306.1M1017.3 202.7L1059.1 281.0M1017.3 202.7L954.6 305.3M1020.7 202.1L1062.3 280.3M1020.7 202.1L958.2 304.4M1024.2 201.5L1065.5 279.5M1024.2 201.5L961.8 303.6M1027.6 200.8L1068.7 278.8M1027.6 200.8L965.4 302.8M1031.0 200.2L1071.9 278.1M1031.0 200.2L969.0 301.9M1034.4 199.6L1075.0 277.3M1034.4 199.6L972.5 301.1M1037.8 199.0L1078.2 276.6M1037.8 199.0L976.1 300.3M1041.2 198.4L1081.3 275.9M1041.2 198.4L979.6 299.5M1044.6 197.8L1084.5 275.1M1044.6 197.8L983.2 298.6M1048.0 197.2L1087.6 274.4M1048.0 197.2L986.7 297.8M1051.3 196.6L1090.7 273.7M1051.3 196.6L990.2 297.0M1054.6 196.0L1093.8 273.0M1054.6 196.0L993.6 296.2M1057.9 195.4L1096.8 272.3M1057.9 195.4L997.1 295.4M1061.2 194.8L1099.9 271.6M1061.2 194.8L1000.6 294.6M1064.5 194.2L1103.0 270.8M1064.5 194.2L1004.0 293.8M1067.8 193.6L1106.0 270.1M1067.8 193.6L1007.4 293.0M1071.1 193.0L1109.0 269.4M1071.1 193.0L1010.8 292.2M1074.3 192.4L1112.1 268.7M1074.3 192.4L1014.2 291.4M1077.6 191.8L1115.1 268.0M1077.6 191.8L1017.6 290.6M1080.8 191.2L1118.1 267.3M1080.8 191.2L1021.0 289.9M1084.0 190.7L1121.1 266.6M1084.0 190.7L1024.4 289.1M1087.2 190.1L1124.0 266.0M1087.2 190.1L1027.7 288.3M1090.4 189.5L1127.0 265.3M1090.4 189.5L1031.0 287.5M1093.6 188.9L1130.0 264.6M1093.6 188.9L1034.4 286.8M1096.7 188.4L1132.9 263.9M1096.7 188.4L1037.7 286.0M1099.9 187.8L1135.8 263.2M1099.9 187.8L1041.0 285.2M1103.0 187.2L1138.8 262.5M1103.0 187.2L1044.2 284.5M1106.2 186.7L1141.7 261.9M1106.2 186.7L1047.5 283.7" stroke="#141414" stroke-width="0.62" fill="none" opacity="1"/>
<clipPath id="c17"><polygon points="574.0,256.3 611.0,250.3 614.0,419.8 578.5,428.8"/></clipPath>
<polygon points="574.0,256.3 611.0,250.3 614.0,419.8 578.5,428.8" fill="#cfcfcf"/>
<path clip-path="url(#c17)" d="M573.2 256.4L611.7 250.2M573.3 259.4L611.8 253.1M573.4 262.5L611.8 256.1M573.5 265.5L611.9 259.0M573.6 268.5L611.9 262.0M573.6 271.5L612.0 264.9M573.7 274.5L612.0 267.9M573.8 277.5L612.1 270.8M573.9 280.4L612.1 273.8M574.0 283.4L612.2 276.7M574.0 286.4L612.2 279.6M574.1 289.4L612.3 282.5M574.2 292.4L612.3 285.4M574.3 295.3L612.4 288.4M574.3 298.3L612.4 291.3M574.4 301.2L612.5 294.2M574.5 304.2L612.5 297.1M574.6 307.2L612.6 300.0M574.7 310.1L612.6 302.9M574.7 313.0L612.7 305.8M574.8 316.0L612.8 308.6M574.9 318.9L612.8 311.5M575.0 321.9L612.9 314.4M575.0 324.8L612.9 317.3M575.1 327.7L613.0 320.1M575.2 330.6L613.0 323.0M575.3 333.5L613.1 325.9M575.3 336.5L613.1 328.7M575.4 339.4L613.2 331.6M575.5 342.3L613.2 334.4M575.6 345.2L613.3 337.3M575.7 348.1L613.3 340.1M575.7 351.0L613.4 343.0M575.8 353.8L613.4 345.8M575.9 356.7L613.5 348.6M576.0 359.6L613.5 351.5M576.0 362.5L613.6 354.3M576.1 365.4L613.6 357.1M576.2 368.2L613.6 359.9M576.3 371.1L613.7 362.8M576.3 374.0L613.7 365.6M576.4 376.8L613.8 368.4M576.5 379.7L613.8 371.2M576.6 382.5L613.9 374.0M576.6 385.4L613.9 376.8M576.7 388.2L614.0 379.6M576.8 391.1L614.0 382.4M576.9 393.9L614.1 385.1M576.9 396.7L614.1 387.9M577.0 399.6L614.2 390.7M577.1 402.4L614.2 393.5M577.2 405.2L614.3 396.3M577.2 408.0L614.3 399.0M577.3 410.8L614.4 401.8M577.4 413.6L614.4 404.5M577.4 416.4L614.5 407.3M577.5 419.2L614.5 410.1M577.6 422.0L614.6 412.8M577.7 424.8L614.6 415.6M577.7 427.6L614.7 418.3M577.8 430.4L614.7 421.0M463.6 274.2L574.4 429.8M463.6 274.2L359.9 484.2M467.4 273.6L577.7 429.0M467.4 273.6L363.9 483.2M471.1 273.0L580.9 428.2M471.1 273.0L367.9 482.2M474.8 272.4L584.1 427.4M474.8 272.4L371.9 481.2M478.6 271.8L587.3 426.6M478.6 271.8L375.8 480.2M482.3 271.2L590.5 425.8M482.3 271.2L379.8 479.2M486.0 270.6L593.7 425.0M486.0 270.6L383.7 478.2M489.6 270.0L596.8 424.1M489.6 270.0L387.6 477.2M493.3 269.4L600.0 423.3M493.3 269.4L391.5 476.2M497.0 268.8L603.2 422.5M497.0 268.8L395.4 475.2M500.6 268.2L606.3 421.8M500.6 268.2L399.3 474.2M504.2 267.6L609.4 421.0M504.2 267.6L403.2 473.3M507.8 267.0L612.5 420.2M507.8 267.0L407.0 472.3M511.4 266.4L615.6 419.4M511.4 266.4L410.8 471.3M515.0 265.9L618.7 418.6M515.0 265.9L414.6 470.3M518.6 265.3L621.8 417.8M518.6 265.3L418.4 469.4M522.1 264.7L624.9 417.0M522.1 264.7L422.2 468.4M525.7 264.1L628.0 416.3M525.7 264.1L426.0 467.5M529.2 263.6L631.0 415.5M529.2 263.6L429.8 466.5M532.7 263.0L634.1 414.7M532.7 263.0L433.5 465.6M536.2 262.4L637.1 413.9M536.2 262.4L437.2 464.6M539.7 261.9L640.1 413.2M539.7 261.9L441.0 463.7M543.2 261.3L643.1 412.4M543.2 261.3L444.7 462.7M546.7 260.7L646.2 411.6M546.7 260.7L448.4 461.8M550.1 260.2L649.1 410.9M550.1 260.2L452.0 460.9M553.6 259.6L652.1 410.1M553.6 259.6L455.7 459.9M557.0 259.1L655.1 409.4M557.0 259.1L459.4 459.0M560.4 258.5L658.1 408.6M560.4 258.5L463.0 458.1M563.8 257.9L661.0 407.9M563.8 257.9L466.6 457.2M567.2 257.4L664.0 407.1M567.2 257.4L470.2 456.2M570.6 256.8L666.9 406.4M570.6 256.8L473.8 455.3M574.0 256.3L669.8 405.6M574.0 256.3L477.4 454.4M577.4 255.8L672.8 404.9M577.4 255.8L481.0 453.5M580.7 255.2L675.7 404.2M580.7 255.2L484.6 452.6M584.0 254.7L678.6 403.4M584.0 254.7L488.1 451.7M587.4 254.1L681.5 402.7M587.4 254.1L491.6 450.8M590.7 253.6L684.3 402.0M590.7 253.6L495.2 449.9M594.0 253.1L687.2 401.2M594.0 253.1L498.7 449.0M597.3 252.5L690.1 400.5M597.3 252.5L502.2 448.2M600.5 252.0L692.9 399.8M600.5 252.0L505.7 447.3M603.8 251.5L695.8 399.1M603.8 251.5L509.1 446.4M607.1 250.9L698.6 398.3M607.1 250.9L512.6 445.5M610.3 250.4L701.4 397.6M610.3 250.4L516.0 444.6M613.5 249.9L704.3 396.9M613.5 249.9L519.5 443.8M616.8 249.4L707.1 396.2M616.8 249.4L522.9 442.9M620.0 248.8L709.9 395.5M620.0 248.8L526.3 442.0M623.2 248.3L712.7 394.8M623.2 248.3L529.7 441.2M626.4 247.8L715.4 394.1M626.4 247.8L533.1 440.3M629.5 247.3L718.2 393.4M629.5 247.3L536.5 439.5M632.7 246.8L721.0 392.7M632.7 246.8L539.8 438.6M635.9 246.3L723.7 392.0M635.9 246.3L543.2 437.8M639.0 245.8L726.5 391.3M639.0 245.8L546.5 436.9M642.1 245.2L729.2 390.6M642.1 245.2L549.9 436.1M645.3 244.7L731.9 389.9M645.3 244.7L553.2 435.2M648.4 244.2L734.7 389.2M648.4 244.2L556.5 434.4M651.5 243.7L737.4 388.5M651.5 243.7L559.8 433.5M654.6 243.2L740.1 387.8M654.6 243.2L563.1 432.7M657.7 242.7L742.8 387.2M657.7 242.7L566.3 431.9M660.7 242.2L745.5 386.5M660.7 242.2L569.6 431.1M663.8 241.7L748.1 385.8M663.8 241.7L572.9 430.2M666.8 241.2L750.8 385.1M666.8 241.2L576.1 429.4M669.9 240.8L753.5 384.4M669.9 240.8L579.3 428.6M672.9 240.3L756.1 383.8M672.9 240.3L582.5 427.8M675.9 239.8L758.8 383.1M675.9 239.8L585.8 427.0M678.9 239.3L761.4 382.4M678.9 239.3L589.0 426.1M681.9 238.8L764.0 381.8M681.9 238.8L592.1 425.3M684.9 238.3L766.7 381.1M684.9 238.3L595.3 424.5M687.9 237.8L769.3 380.4M687.9 237.8L598.5 423.7M690.9 237.3L771.9 379.8M690.9 237.3L601.6 422.9M693.8 236.9L774.5 379.1M693.8 236.9L604.8 422.1M696.8 236.4L777.1 378.5M696.8 236.4L607.9 421.3M699.7 235.9L779.7 377.8M699.7 235.9L611.0 420.6M702.6 235.4L782.2 377.1M702.6 235.4L614.1 419.8M705.6 235.0L784.8 376.5M705.6 235.0L617.2 419.0" stroke="#161616" stroke-width="0.55" fill="none" opacity="1"/>
<clipPath id="c18"><polygon points="611.0,250.0 620.0,248.4 622.4,417.5 614.0,419.8"/></clipPath>
<polygon points="611.0,250.0 620.0,248.4 622.4,417.5 614.0,419.8" fill="#c6c6c6"/>
<path clip-path="url(#c18)" d="M610.8 250.0L620.2 248.4M610.9 252.4L620.2 250.8M610.9 254.8L620.3 253.2M610.9 257.2L620.3 255.5M611.0 259.6L620.3 257.9M611.0 262.0L620.4 260.3M611.1 264.3L620.4 262.6M611.1 266.7L620.4 265.0M611.2 269.1L620.5 267.4M611.2 271.4L620.5 269.7M611.2 273.8L620.5 272.1M611.3 276.2L620.6 274.4M611.3 278.5L620.6 276.7M611.4 280.9L620.6 279.1M611.4 283.2L620.7 281.4M611.4 285.5L620.7 283.7M611.5 287.9L620.7 286.1M611.5 290.2L620.8 288.4M611.6 292.5L620.8 290.7M611.6 294.9L620.8 293.0M611.7 297.2L620.9 295.3M611.7 299.5L620.9 297.6M611.7 301.8L620.9 299.9M611.8 304.1L621.0 302.2M611.8 306.4L621.0 304.5M611.9 308.7L621.0 306.8M611.9 311.0L621.1 309.1M611.9 313.3L621.1 311.4M612.0 315.6L621.1 313.6M612.0 317.9L621.2 315.9M612.1 320.1L621.2 318.2M612.1 322.4L621.2 320.4M612.1 324.7L621.3 322.7M612.2 326.9L621.3 325.0M612.2 329.2L621.3 327.2M612.3 331.5L621.4 329.5M612.3 333.7L621.4 331.7M612.3 336.0L621.4 334.0M612.4 338.2L621.5 336.2M612.4 340.5L621.5 338.4M612.5 342.7L621.5 340.7M612.5 344.9L621.6 342.9M612.5 347.2L621.6 345.1M612.6 349.4L621.6 347.3M612.6 351.6L621.6 349.5M612.7 353.9L621.7 351.8M612.7 356.1L621.7 354.0M612.7 358.3L621.7 356.2M612.8 360.5L621.8 358.4M612.8 362.7L621.8 360.6M612.9 364.9L621.8 362.8M612.9 367.1L621.9 365.0M612.9 369.3L621.9 367.1M613.0 371.5L621.9 369.3M613.0 373.7L622.0 371.5M613.1 375.9L622.0 373.7M613.1 378.0L622.0 375.9M613.1 380.2L622.1 378.0M613.2 382.4L622.1 380.2M613.2 384.6L622.1 382.3M613.2 386.7L622.1 384.5M613.3 388.9L622.2 386.7M613.3 391.0L622.2 388.8M613.4 393.2L622.2 391.0M613.4 395.4L622.3 393.1M613.4 397.5L622.3 395.2M613.5 399.6L622.3 397.4M613.5 401.8L622.4 399.5M613.5 403.9L622.4 401.6M613.6 406.1L622.4 403.8M613.6 408.2L622.5 405.9M613.7 410.3L622.5 408.0M613.7 412.4L622.5 410.1M613.7 414.6L622.5 412.2M613.8 416.7L622.6 414.3M613.8 418.8L622.6 416.4M613.8 420.9L622.6 418.5M503.1 268.9L610.9 420.6M503.1 268.9L404.9 475.9M506.1 268.4L613.4 420.0M506.1 268.4L407.9 475.1M509.0 267.9L615.8 419.3M509.0 267.9L410.9 474.3M511.9 267.4L618.3 418.7M511.9 267.4L414.0 473.5M514.8 266.9L620.7 418.0M514.8 266.9L417.0 472.7M517.7 266.4L623.1 417.4M517.7 266.4L420.0 471.8M520.5 265.9L625.5 416.7M520.5 265.9L422.9 471.0M523.4 265.4L628.0 416.1M523.4 265.4L425.9 470.2M526.3 264.9L630.4 415.4M526.3 264.9L428.9 469.5M529.1 264.4L632.8 414.8M529.1 264.4L431.8 468.7M532.0 263.9L635.2 414.1M532.0 263.9L434.8 467.9M534.8 263.4L637.5 413.5M534.8 263.4L437.7 467.1M537.6 262.9L639.9 412.8M537.6 262.9L440.7 466.3M540.5 262.4L642.3 412.2M540.5 262.4L443.6 465.5M543.3 261.9L644.7 411.6M543.3 261.9L446.5 464.7M546.1 261.4L647.0 410.9M546.1 261.4L449.4 463.9M548.9 260.9L649.4 410.3M548.9 260.9L452.3 463.2M551.7 260.4L651.7 409.7M551.7 260.4L455.2 462.4M554.4 259.9L654.1 409.0M554.4 259.9L458.1 461.6M557.2 259.4L656.4 408.4M557.2 259.4L461.0 460.8M560.0 259.0L658.8 407.8M560.0 259.0L463.8 460.1M562.7 258.5L661.1 407.2M562.7 258.5L466.7 459.3M565.5 258.0L663.4 406.6M565.5 258.0L469.5 458.5M568.2 257.5L665.7 405.9M568.2 257.5L472.4 457.8M571.0 257.0L668.0 405.3M571.0 257.0L475.2 457.0M573.7 256.6L670.3 404.7M573.7 256.6L478.0 456.3M576.4 256.1L672.6 404.1M576.4 256.1L480.9 455.5M579.1 255.6L674.9 403.5M579.1 255.6L483.7 454.8M581.8 255.1L677.2 402.9M581.8 255.1L486.5 454.0M584.5 254.7L679.5 402.2M584.5 254.7L489.3 453.3M587.2 254.2L681.7 401.6M587.2 254.2L492.0 452.5M589.9 253.7L684.0 401.0M589.9 253.7L494.8 451.8M592.5 253.2L686.3 400.4M592.5 253.2L497.6 451.0M595.2 252.8L688.5 399.8M595.2 252.8L500.4 450.3M597.8 252.3L690.8 399.2M597.8 252.3L503.1 449.5M600.5 251.8L693.0 398.6M600.5 251.8L505.9 448.8M603.1 251.4L695.3 398.0M603.1 251.4L508.6 448.1M605.8 250.9L697.5 397.4M605.8 250.9L511.3 447.3M608.4 250.5L699.7 396.8M608.4 250.5L514.1 446.6M611.0 250.0L701.9 396.2M611.0 250.0L516.8 445.9M613.6 249.5L704.1 395.6M613.6 249.5L519.5 445.2M616.2 249.1L706.4 395.0M616.2 249.1L522.2 444.4M618.8 248.6L708.6 394.4M618.8 248.6L524.9 443.7M621.4 248.2L710.8 393.8M621.4 248.2L527.6 443.0M624.0 247.7L713.0 393.3M624.0 247.7L530.2 442.3M626.5 247.3L715.1 392.7M626.5 247.3L532.9 441.6M629.1 246.8L717.3 392.1M629.1 246.8L535.6 440.8M631.7 246.4L719.5 391.5M631.7 246.4L538.2 440.1M634.2 245.9L721.7 390.9M634.2 245.9L540.9 439.4M636.8 245.5L723.8 390.3M636.8 245.5L543.5 438.7M639.3 245.0L726.0 389.8M639.3 245.0L546.1 438.0M641.8 244.6L728.2 389.2M641.8 244.6L548.8 437.3M644.4 244.1L730.3 388.6M644.4 244.1L551.4 436.6M646.9 243.7L732.4 388.0M646.9 243.7L554.0 435.9M649.4 243.3L734.6 387.5M649.4 243.3L556.6 435.2M651.9 242.8L736.7 386.9M651.9 242.8L559.2 434.5M654.4 242.4L738.8 386.3M654.4 242.4L561.8 433.8M656.9 241.9L741.0 385.7M656.9 241.9L564.4 433.1M659.3 241.5L743.1 385.2M659.3 241.5L567.0 432.4M661.8 241.1L745.2 384.6M661.8 241.1L569.5 431.7M664.3 240.6L747.3 384.0M664.3 240.6L572.1 431.0M666.7 240.2L749.4 383.5M666.7 240.2L574.6 430.4M669.2 239.8L751.5 382.9M669.2 239.8L577.2 429.7M671.6 239.4L753.6 382.4M671.6 239.4L579.7 429.0M674.1 238.9L755.7 381.8M674.1 238.9L582.3 428.3M676.5 238.5L757.8 381.2M676.5 238.5L584.8 427.6M678.9 238.1L759.8 380.7M678.9 238.1L587.3 427.0M681.4 237.6L761.9 380.1M681.4 237.6L589.8 426.3M683.8 237.2L764.0 379.6M683.8 237.2L592.3 425.6M686.2 236.8L766.0 379.0M686.2 236.8L594.8 424.9M688.6 236.4L768.1 378.5M688.6 236.4L597.3 424.3M691.0 236.0L770.1 377.9M691.0 236.0L599.8 423.6M693.4 235.5L772.2 377.4M693.4 235.5L602.3 422.9M695.7 235.1L774.2 376.8M695.7 235.1L604.8 422.3M698.1 234.7L776.3 376.3M698.1 234.7L607.2 421.6M700.5 234.3L778.3 375.7M700.5 234.3L609.7 421.0M702.9 233.9L780.3 375.2M702.9 233.9L612.2 420.3M705.2 233.5L782.3 374.6M705.2 233.5L614.6 419.6M707.6 233.0L784.4 374.1M707.6 233.0L617.1 419.0M709.9 232.6L786.4 373.6M709.9 232.6L619.5 418.3M712.2 232.2L788.4 373.0M712.2 232.2L621.9 417.7M714.6 231.8L790.4 372.5M714.6 231.8L624.3 417.0" stroke="#141414" stroke-width="0.5" fill="none" opacity="1"/>
<clipPath id="c19"><polygon points="620.0,248.4 640.5,244.8 641.6,412.4 622.4,417.5"/></clipPath>
<polygon points="620.0,248.4 640.5,244.8 641.6,412.4 622.4,417.5" fill="#c4c4c4"/>
<path clip-path="url(#c19)" d="M619.6 248.5L640.9 244.7M619.6 250.5L640.9 246.7M619.7 252.5L641.0 248.7M619.7 254.5L641.0 250.7M619.7 256.6L641.0 252.7M619.8 258.6L641.0 254.7M619.8 260.6L641.0 256.7M619.8 262.6L641.0 258.7M619.8 264.6L641.0 260.7M619.9 266.6L641.0 262.6M619.9 268.6L641.1 264.6M619.9 270.6L641.1 266.6M620.0 272.5L641.1 268.6M620.0 274.5L641.1 270.5M620.0 276.5L641.1 272.5M620.0 278.5L641.1 274.4M620.1 280.5L641.1 276.4M620.1 282.4L641.1 278.4M620.1 284.4L641.2 280.3M620.2 286.4L641.2 282.3M620.2 288.3L641.2 284.2M620.2 290.3L641.2 286.1M620.2 292.3L641.2 288.1M620.3 294.2L641.2 290.0M620.3 296.2L641.2 292.0M620.3 298.1L641.2 293.9M620.4 300.1L641.3 295.8M620.4 302.0L641.3 297.7M620.4 304.0L641.3 299.7M620.4 305.9L641.3 301.6M620.5 307.8L641.3 303.5M620.5 309.8L641.3 305.4M620.5 311.7L641.3 307.3M620.6 313.6L641.3 309.2M620.6 315.6L641.4 311.1M620.6 317.5L641.4 313.0M620.6 319.4L641.4 314.9M620.7 321.3L641.4 316.8M620.7 323.2L641.4 318.7M620.7 325.1L641.4 320.6M620.7 327.0L641.4 322.5M620.8 328.9L641.4 324.4M620.8 330.8L641.5 326.3M620.8 332.7L641.5 328.2M620.9 334.6L641.5 330.0M620.9 336.5L641.5 331.9M620.9 338.4L641.5 333.8M620.9 340.3L641.5 335.7M621.0 342.2L641.5 337.5M621.0 344.1L641.5 339.4M621.0 346.0L641.6 341.3M621.0 347.8L641.6 343.1M621.1 349.7L641.6 345.0M621.1 351.6L641.6 346.8M621.1 353.5L641.6 348.7M621.2 355.3L641.6 350.5M621.2 357.2L641.6 352.4M621.2 359.1L641.6 354.2M621.2 360.9L641.7 356.1M621.3 362.8L641.7 357.9M621.3 364.6L641.7 359.7M621.3 366.5L641.7 361.6M621.3 368.3L641.7 363.4M621.4 370.2L641.7 365.2M621.4 372.0L641.7 367.1M621.4 373.8L641.7 368.9M621.5 375.7L641.8 370.7M621.5 377.5L641.8 372.5M621.5 379.4L641.8 374.3M621.5 381.2L641.8 376.2M621.6 383.0L641.8 378.0M621.6 384.8L641.8 379.8M621.6 386.7L641.8 381.6M621.6 388.5L641.8 383.4M621.7 390.3L641.8 385.2M621.7 392.1L641.9 387.0M621.7 393.9L641.9 388.8M621.7 395.7L641.9 390.6M621.8 397.5L641.9 392.4M621.8 399.3L641.9 394.1M621.8 401.1L641.9 395.9M621.8 402.9L641.9 397.7M621.9 404.7L641.9 399.5M621.9 406.5L642.0 401.3M621.9 408.3L642.0 403.0M622.0 410.1L642.0 404.8M622.0 411.9L642.0 406.6M622.0 413.7L642.0 408.4M622.0 415.5L642.0 410.1M622.1 417.2L642.0 411.9M622.1 419.0L642.0 413.6M511.6 267.5L619.6 418.3M511.6 267.5L412.1 474.0M514.1 267.0L621.6 417.8M514.1 267.0L414.7 473.3M516.6 266.6L623.7 417.2M516.6 266.6L417.2 472.6M519.1 266.1L625.8 416.6M519.1 266.1L419.8 471.9M521.6 265.7L627.9 416.1M521.6 265.7L422.4 471.2M524.0 265.3L629.9 415.5M524.0 265.3L424.9 470.5M526.5 264.8L632.0 415.0M526.5 264.8L427.5 469.8M528.9 264.4L634.1 414.4M528.9 264.4L430.0 469.1M531.4 264.0L636.1 413.9M531.4 264.0L432.6 468.5M533.8 263.6L638.2 413.3M533.8 263.6L435.1 467.8M536.3 263.1L640.2 412.8M536.3 263.1L437.6 467.1M538.7 262.7L642.2 412.2M538.7 262.7L440.2 466.4M541.1 262.3L644.3 411.7M541.1 262.3L442.7 465.8M543.5 261.8L646.3 411.1M543.5 261.8L445.2 465.1M545.9 261.4L648.3 410.6M545.9 261.4L447.7 464.4M548.4 261.0L650.4 410.0M548.4 261.0L450.2 463.7M550.8 260.6L652.4 409.5M550.8 260.6L452.7 463.1M553.1 260.2L654.4 409.0M553.1 260.2L455.2 462.4M555.5 259.7L656.4 408.4M555.5 259.7L457.6 461.7M557.9 259.3L658.4 407.9M557.9 259.3L460.1 461.1M560.3 258.9L660.4 407.4M560.3 258.9L462.6 460.4M562.7 258.5L662.4 406.8M562.7 258.5L465.0 459.8M565.0 258.1L664.4 406.3M565.0 258.1L467.5 459.1M567.4 257.7L666.4 405.8M567.4 257.7L469.9 458.4M569.7 257.2L668.4 405.2M569.7 257.2L472.4 457.8M572.1 256.8L670.3 404.7M572.1 256.8L474.8 457.1M574.4 256.4L672.3 404.2M574.4 256.4L477.2 456.5M576.7 256.0L674.3 403.6M576.7 256.0L479.7 455.8M579.1 255.6L676.2 403.1M579.1 255.6L482.1 455.2M581.4 255.2L678.2 402.6M581.4 255.2L484.5 454.5M583.7 254.8L680.2 402.1M583.7 254.8L486.9 453.9M586.0 254.4L682.1 401.5M586.0 254.4L489.3 453.3M588.3 254.0L684.0 401.0M588.3 254.0L491.7 452.6M590.6 253.6L686.0 400.5M590.6 253.6L494.1 452.0M592.9 253.2L687.9 400.0M592.9 253.2L496.4 451.3M595.2 252.8L689.9 399.5M595.2 252.8L498.8 450.7M597.5 252.4L691.8 398.9M597.5 252.4L501.2 450.1M599.8 252.0L693.7 398.4M599.8 252.0L503.6 449.4M602.0 251.6L695.6 397.9M602.0 251.6L505.9 448.8M604.3 251.2L697.6 397.4M604.3 251.2L508.3 448.2M606.6 250.8L699.5 396.9M606.6 250.8L510.6 447.5M608.8 250.4L701.4 396.4M608.8 250.4L513.0 446.9M611.1 250.0L703.3 395.9M611.1 250.0L515.3 446.3M613.3 249.6L705.2 395.3M613.3 249.6L517.6 445.7M615.6 249.2L707.1 394.8M615.6 249.2L519.9 445.0M617.8 248.8L709.0 394.3M617.8 248.8L522.3 444.4M620.0 248.4L710.9 393.8M620.0 248.4L524.6 443.8M622.2 248.0L712.7 393.3M622.2 248.0L526.9 443.2M624.5 247.6L714.6 392.8M624.5 247.6L529.2 442.5M626.7 247.2L716.5 392.3M626.7 247.2L531.5 441.9M628.9 246.9L718.4 391.8M628.9 246.9L533.8 441.3M631.1 246.5L720.2 391.3M631.1 246.5L536.1 440.7M633.3 246.1L722.1 390.8M633.3 246.1L538.3 440.1M635.5 245.7L724.0 390.3M635.5 245.7L540.6 439.5M637.6 245.3L725.8 389.8M637.6 245.3L542.9 438.9M639.8 244.9L727.7 389.3M639.8 244.9L545.2 438.3M642.0 244.6L729.5 388.8M642.0 244.6L547.4 437.7M644.2 244.2L731.4 388.3M644.2 244.2L549.7 437.1M646.3 243.8L733.2 387.8M646.3 243.8L551.9 436.5M648.5 243.4L735.0 387.3M648.5 243.4L554.2 435.9M650.6 243.0L736.9 386.8M650.6 243.0L556.4 435.2M652.8 242.7L738.7 386.4M652.8 242.7L558.6 434.7M654.9 242.3L740.5 385.9M654.9 242.3L560.9 434.1M657.1 241.9L742.3 385.4M657.1 241.9L563.1 433.5M659.2 241.5L744.2 384.9M659.2 241.5L565.3 432.9M661.3 241.2L746.0 384.4M661.3 241.2L567.5 432.3M663.5 240.8L747.8 383.9M663.5 240.8L569.7 431.7M665.6 240.4L749.6 383.4M665.6 240.4L571.9 431.1M667.7 240.0L751.4 382.9M667.7 240.0L574.1 430.5M669.8 239.7L753.2 382.5M669.8 239.7L576.3 429.9M671.9 239.3L755.0 382.0M671.9 239.3L578.5 429.3M674.0 238.9L756.8 381.5M674.0 238.9L580.7 428.7M676.1 238.6L758.6 381.0M676.1 238.6L582.9 428.2M678.2 238.2L760.3 380.5M678.2 238.2L585.0 427.6M680.3 237.8L762.1 380.1M680.3 237.8L587.2 427.0M682.3 237.5L763.9 379.6M682.3 237.5L589.3 426.4M684.4 237.1L765.7 379.1M684.4 237.1L591.5 425.8M686.5 236.7L767.4 378.6M686.5 236.7L593.7 425.3M688.6 236.4L769.2 378.2M688.6 236.4L595.8 424.7M690.6 236.0L771.0 377.7M690.6 236.0L597.9 424.1M692.7 235.7L772.7 377.2M692.7 235.7L600.1 423.5M694.7 235.3L774.5 376.8M694.7 235.3L602.2 423.0M696.8 234.9L776.2 376.3M696.8 234.9L604.3 422.4M698.8 234.6L778.0 375.8M698.8 234.6L606.5 421.8M700.8 234.2L779.7 375.4M700.8 234.2L608.6 421.3M702.9 233.9L781.4 374.9M702.9 233.9L610.7 420.7M704.9 233.5L783.2 374.4M704.9 233.5L612.8 420.1M706.9 233.2L784.9 374.0M706.9 233.2L614.9 419.6M708.9 232.8L786.6 373.5M708.9 232.8L617.0 419.0M710.9 232.4L788.4 373.0M710.9 232.4L619.1 418.4M713.0 232.1L790.1 372.6M713.0 232.1L621.2 417.9M715.0 231.7L791.8 372.1M715.0 231.7L623.3 417.3M717.0 231.4L793.5 371.7M717.0 231.4L625.3 416.8M718.9 231.0L795.2 371.2M718.9 231.0L627.4 416.2M720.9 230.7L796.9 370.7M720.9 230.7L629.5 415.6M722.9 230.3L798.6 370.3M722.9 230.3L631.5 415.1M724.9 230.0L800.3 369.8M724.9 230.0L633.6 414.5M726.9 229.7L802.0 369.4M726.9 229.7L635.7 414.0M728.8 229.3L803.7 368.9M728.8 229.3L637.7 413.4M730.8 229.0L805.4 368.5M730.8 229.0L639.7 412.9M732.8 228.6L807.1 368.0M732.8 228.6L641.8 412.3M734.7 228.3L808.8 367.6M734.7 228.3L643.8 411.8" stroke="#141414" stroke-width="0.5" fill="none" opacity="1"/>
<clipPath id="c20"><polygon points="640.5,244.8 652.0,242.8 652.4,409.5 641.6,412.4"/></clipPath>
<polygon points="640.5,244.8 652.0,242.8 652.4,409.5 641.6,412.4" fill="#cacaca"/>
<path clip-path="url(#c20)" d="M640.3 244.9L652.2 242.8M640.3 247.4L652.2 245.3M640.3 250.0L652.2 247.8M640.3 252.5L652.2 250.3M640.4 255.0L652.3 252.9M640.4 257.6L652.3 255.4M640.4 260.1L652.3 257.9M640.4 262.6L652.3 260.4M640.4 265.1L652.3 262.9M640.4 267.6L652.3 265.4M640.5 270.1L652.3 267.9M640.5 272.6L652.3 270.4M640.5 275.1L652.3 272.9M640.5 277.6L652.3 275.3M640.5 280.1L652.3 277.8M640.5 282.6L652.3 280.3M640.6 285.1L652.3 282.7M640.6 287.5L652.3 285.2M640.6 290.0L652.3 287.7M640.6 292.5L652.3 290.1M640.6 294.9L652.3 292.5M640.6 297.4L652.3 295.0M640.7 299.8L652.4 297.4M640.7 302.3L652.4 299.9M640.7 304.7L652.4 302.3M640.7 307.2L652.4 304.7M640.7 309.6L652.4 307.1M640.7 312.0L652.4 309.5M640.8 314.4L652.4 311.9M640.8 316.8L652.4 314.3M640.8 319.3L652.4 316.7M640.8 321.7L652.4 319.1M640.8 324.1L652.4 321.5M640.8 326.5L652.4 323.9M640.9 328.9L652.4 326.3M640.9 331.3L652.4 328.7M640.9 333.6L652.4 331.1M640.9 336.0L652.4 333.4M640.9 338.4L652.4 335.8M640.9 340.8L652.4 338.1M641.0 343.1L652.5 340.5M641.0 345.5L652.5 342.9M641.0 347.9L652.5 345.2M641.0 350.2L652.5 347.5M641.0 352.6L652.5 349.9M641.0 354.9L652.5 352.2M641.1 357.3L652.5 354.5M641.1 359.6L652.5 356.9M641.1 361.9L652.5 359.2M641.1 364.3L652.5 361.5M641.1 366.6L652.5 363.8M641.1 368.9L652.5 366.1M641.2 371.2L652.5 368.4M641.2 373.5L652.5 370.7M641.2 375.8L652.5 373.0M641.2 378.1L652.5 375.3M641.2 380.4L652.5 377.6M641.2 382.7L652.5 379.9M641.2 385.0L652.6 382.2M641.3 387.3L652.6 384.4M641.3 389.6L652.6 386.7M641.3 391.9L652.6 389.0M641.3 394.2L652.6 391.2M641.3 396.4L652.6 393.5M641.3 398.7L652.6 395.8M641.4 401.0L652.6 398.0M641.4 403.2L652.6 400.3M641.4 405.5L652.6 402.5M641.4 407.7L652.6 404.7M641.4 410.0L652.6 407.0M641.4 412.2L652.6 409.2M641.4 414.4L652.6 411.4M529.9 264.2L636.5 413.8M529.9 264.2L429.3 469.3M533.1 263.7L639.1 413.1M533.1 263.7L432.6 468.5M536.2 263.1L641.8 412.3M536.2 263.1L435.8 467.6M539.4 262.6L644.4 411.6M539.4 262.6L439.1 466.7M542.5 262.0L647.0 410.9M542.5 262.0L442.4 465.8M545.6 261.5L649.7 410.2M545.6 261.5L445.6 465.0M548.7 260.9L652.3 409.5M548.7 260.9L448.8 464.1M551.8 260.4L654.9 408.8M551.8 260.4L452.1 463.2M554.9 259.8L657.5 408.1M554.9 259.8L455.3 462.4M558.0 259.3L660.1 407.4M558.0 259.3L458.5 461.5M561.1 258.8L662.6 406.8M561.1 258.8L461.7 460.7M564.2 258.2L665.2 406.1M564.2 258.2L464.9 459.8M567.2 257.7L667.8 405.4M567.2 257.7L468.0 459.0M570.3 257.2L670.3 404.7M570.3 257.2L471.2 458.1M573.3 256.6L672.9 404.0M573.3 256.6L474.4 457.3M576.3 256.1L675.4 403.3M576.3 256.1L477.5 456.4M579.3 255.6L678.0 402.6M579.3 255.6L480.6 455.6M582.4 255.0L680.5 402.0M582.4 255.0L483.8 454.7M585.4 254.5L683.0 401.3M585.4 254.5L486.9 453.9M588.3 254.0L685.5 400.6M588.3 254.0L490.0 453.1M591.3 253.5L688.1 399.9M591.3 253.5L493.1 452.2M594.3 252.9L690.6 399.3M594.3 252.9L496.1 451.4M597.2 252.4L693.0 398.6M597.2 252.4L499.2 450.6M600.2 251.9L695.5 397.9M600.2 251.9L502.3 449.8M603.1 251.4L698.0 397.3M603.1 251.4L505.3 448.9M606.1 250.9L700.5 396.6M606.1 250.9L508.4 448.1M609.0 250.4L703.0 395.9M609.0 250.4L511.4 447.3M611.9 249.8L705.4 395.3M611.9 249.8L514.4 446.5M614.8 249.3L707.9 394.6M614.8 249.3L517.5 445.7M617.7 248.8L710.3 394.0M617.7 248.8L520.5 444.9M620.6 248.3L712.8 393.3M620.6 248.3L523.5 444.1M623.5 247.8L715.2 392.7M623.5 247.8L526.5 443.3M626.3 247.3L717.6 392.0M626.3 247.3L529.4 442.5M629.2 246.8L720.0 391.4M629.2 246.8L532.4 441.7M632.0 246.3L722.4 390.7M632.0 246.3L535.4 440.9M634.9 245.8L724.8 390.1M634.9 245.8L538.3 440.1M637.7 245.3L727.2 389.4M637.7 245.3L541.3 439.3M640.5 244.8L729.6 388.8M640.5 244.8L544.2 438.5M643.3 244.3L732.0 388.1M643.3 244.3L547.1 437.7M646.1 243.8L734.4 387.5M646.1 243.8L550.0 437.0M648.9 243.3L736.8 386.9M648.9 243.3L552.9 436.2M651.7 242.8L739.1 386.2M651.7 242.8L555.8 435.4M654.5 242.4L741.5 385.6M654.5 242.4L558.7 434.6M657.3 241.9L743.8 385.0M657.3 241.9L561.6 433.9M660.0 241.4L746.2 384.3M660.0 241.4L564.5 433.1M662.8 240.9L748.5 383.7M662.8 240.9L567.4 432.3M665.5 240.4L750.9 383.1M665.5 240.4L570.2 431.5M668.3 239.9L753.2 382.5M668.3 239.9L573.1 430.8M671.0 239.5L755.5 381.8M671.0 239.5L575.9 430.0M673.7 239.0L757.8 381.2M673.7 239.0L578.7 429.3M676.4 238.5L760.1 380.6M676.4 238.5L581.5 428.5M679.1 238.0L762.4 380.0M679.1 238.0L584.4 427.8M681.8 237.6L764.7 379.4M681.8 237.6L587.2 427.0M684.5 237.1L767.0 378.8M684.5 237.1L589.9 426.3M687.2 236.6L769.3 378.1M687.2 236.6L592.7 425.5M689.9 236.2L771.6 377.5M689.9 236.2L595.5 424.8M692.5 235.7L773.8 376.9M692.5 235.7L598.3 424.0M695.2 235.2L776.1 376.3M695.2 235.2L601.0 423.3M697.8 234.8L778.4 375.7M697.8 234.8L603.8 422.5M700.5 234.3L780.6 375.1M700.5 234.3L606.5 421.8M703.1 233.8L782.9 374.5M703.1 233.8L609.3 421.1M705.7 233.4L785.1 373.9M705.7 233.4L612.0 420.3M708.3 232.9L787.3 373.3M708.3 232.9L614.7 419.6M710.9 232.4L789.6 372.7M710.9 232.4L617.4 418.9M713.5 232.0L791.8 372.1M713.5 232.0L620.2 418.2M716.1 231.5L794.0 371.5M716.1 231.5L622.8 417.4M718.7 231.1L796.2 370.9M718.7 231.1L625.5 416.7M721.3 230.6L798.4 370.3M721.3 230.6L628.2 416.0M723.9 230.2L800.6 369.7M723.9 230.2L630.9 415.3M726.4 229.7L802.8 369.2M726.4 229.7L633.6 414.6M729.0 229.3L805.0 368.6M729.0 229.3L636.2 413.8M731.5 228.8L807.2 368.0M731.5 228.8L638.9 413.1M734.1 228.4L809.3 367.4M734.1 228.4L641.5 412.4M736.6 227.9L811.5 366.8M736.6 227.9L644.1 411.7M739.1 227.5L813.7 366.2M739.1 227.5L646.8 411.0M741.6 227.1L815.8 365.7M741.6 227.1L649.4 410.3M744.1 226.6L818.0 365.1M744.1 226.6L652.0 409.6M746.6 226.2L820.1 364.5M746.6 226.2L654.6 408.9M749.1 225.7L822.3 363.9M749.1 225.7L657.2 408.2" stroke="#141414" stroke-width="0.5" fill="none" opacity="1"/>
<clipPath id="c21"><polygon points="652.0,242.8 873.3,203.7 863.4,356.1 652.4,409.5"/></clipPath>
<polygon points="652.0,242.8 873.3,203.7 863.4,356.1 652.4,409.5" fill="#d6d6d6"/>
<path clip-path="url(#c21)" d="M647.1 243.7L877.3 203.0M647.1 250.2L876.9 208.9M647.1 256.7L876.5 214.8M647.1 263.2L876.1 220.7M647.2 269.7L875.7 226.6M647.2 276.2L875.3 232.5M647.2 282.6L874.9 238.3M647.2 289.0L874.6 244.1M647.3 295.3L874.2 249.9M647.3 301.7L873.8 255.6M647.3 308.0L873.4 261.4M647.3 314.3L873.0 267.1M647.4 320.5L872.7 272.8M647.4 326.8L872.3 278.5M647.4 333.0L871.9 284.2M647.4 339.2L871.5 289.8M647.5 345.4L871.2 295.4M647.5 351.5L870.8 301.0M647.5 357.6L870.4 306.6M647.5 363.7L870.0 312.2M647.6 369.8L869.7 317.7M647.6 375.8L869.3 323.3M647.6 381.9L868.9 328.8M647.6 387.9L868.6 334.3M647.7 393.9L868.2 339.7M647.7 399.8L867.9 345.2M647.7 405.7L867.5 350.6M647.7 411.7L867.1 356.0M526.5 265.0L640.5 412.5M526.5 265.0L416.1 469.3M535.3 263.4L648.0 410.6M535.3 263.4L425.2 467.0M544.1 261.9L655.5 408.7M544.1 261.9L434.4 464.7M552.7 260.3L663.0 406.8M552.7 260.3L443.4 462.4M561.4 258.8L670.4 404.9M561.4 258.8L452.4 460.1M569.9 257.3L677.7 403.1M569.9 257.3L461.3 457.9M578.4 255.8L685.1 401.2M578.4 255.8L470.1 455.6M586.8 254.3L692.3 399.4M586.8 254.3L478.9 453.4M595.2 252.8L699.5 397.6M595.2 252.8L487.6 451.2M603.5 251.4L706.7 395.8M603.5 251.4L496.3 449.0M611.7 249.9L713.8 394.0M611.7 249.9L504.9 446.8M619.9 248.5L720.9 392.2M619.9 248.5L513.4 444.7M628.0 247.0L727.9 390.4M628.0 247.0L521.8 442.5M636.1 245.6L734.8 388.6M636.1 245.6L530.2 440.4M644.1 244.2L741.8 386.9M644.1 244.2L538.6 438.3M652.0 242.8L748.6 385.1M652.0 242.8L546.8 436.2M659.9 241.4L755.5 383.4M659.9 241.4L555.1 434.1M667.7 240.0L762.3 381.7M667.7 240.0L563.2 432.1M675.5 238.7L769.0 380.0M675.5 238.7L571.3 430.0M683.2 237.3L775.7 378.3M683.2 237.3L579.4 428.0M690.9 235.9L782.4 376.6M690.9 235.9L587.4 426.0M698.5 234.6L789.0 374.9M698.5 234.6L595.3 424.0M706.0 233.3L795.6 373.3M706.0 233.3L603.2 422.0M713.5 231.9L802.1 371.6M713.5 231.9L611.0 420.0M721.0 230.6L808.6 370.0M721.0 230.6L618.7 418.0M728.3 229.3L815.0 368.3M728.3 229.3L626.5 416.1M735.7 228.0L821.4 366.7M735.7 228.0L634.1 414.1M743.0 226.7L827.8 365.1M743.0 226.7L641.7 412.2M750.2 225.4L834.1 363.5M750.2 225.4L649.3 410.3M757.4 224.2L840.4 361.9M757.4 224.2L656.8 408.4M764.6 222.9L846.7 360.3M764.6 222.9L664.2 406.5M771.6 221.7L852.9 358.8M771.6 221.7L671.6 404.6M778.7 220.4L859.0 357.2M778.7 220.4L679.0 402.8M785.7 219.2L865.2 355.7M785.7 219.2L686.3 400.9M792.6 218.0L871.3 354.1M792.6 218.0L693.5 399.1M799.5 216.7L877.3 352.6M799.5 216.7L700.7 397.3M806.4 215.5L883.3 351.1M806.4 215.5L707.9 395.5M813.2 214.3L889.3 349.5M813.2 214.3L715.0 393.7M820.0 213.1L895.3 348.0M820.0 213.1L722.0 391.9M826.7 211.9L901.2 346.5M826.7 211.9L729.0 390.1M833.4 210.8L907.1 345.1M833.4 210.8L736.0 388.3M840.0 209.6L912.9 343.6M840.0 209.6L742.9 386.6M846.6 208.4L918.7 342.1M846.6 208.4L749.8 384.9M853.1 207.3L924.5 340.6M853.1 207.3L756.6 383.1M859.6 206.1L930.2 339.2M859.6 206.1L763.4 381.4M866.1 205.0L935.9 337.8M866.1 205.0L770.1 379.7M872.5 203.8L941.6 336.3M872.5 203.8L776.8 378.0M878.9 202.7L947.2 334.9M878.9 202.7L783.5 376.3M885.2 201.6L952.8 333.5M885.2 201.6L790.1 374.7M891.5 200.5L958.4 332.1M891.5 200.5L796.6 373.0M897.7 199.4L963.9 330.7M897.7 199.4L803.2 371.3M903.9 198.3L969.4 329.3M903.9 198.3L809.7 369.7M910.1 197.2L974.8 327.9M910.1 197.2L816.1 368.1M916.3 196.1L980.3 326.5M916.3 196.1L822.5 366.5M922.3 195.0L985.7 325.2M922.3 195.0L828.9 364.8M928.4 194.0L991.1 323.8M928.4 194.0L835.2 363.2M934.4 192.9L996.4 322.4M934.4 192.9L841.5 361.7M940.4 191.8L1001.7 321.1M940.4 191.8L847.7 360.1M946.3 190.8L1007.0 319.8M946.3 190.8L853.9 358.5M952.2 189.8L1012.2 318.4M952.2 189.8L860.1 356.9M958.1 188.7L1017.5 317.1M958.1 188.7L866.2 355.4M963.9 187.7L1022.6 315.8M963.9 187.7L872.3 353.9" stroke="#0c0c0c" stroke-width="0.65" fill="none" opacity="1"/>
<path d="M611 250L614 419.8M575.5 319.5L611.5 312.5" stroke="#111" stroke-width="0.9" fill="none"/>
<path d="M714.8 232L714.8 394" stroke="#9a9a9a" stroke-width="0.8" fill="none"/>
<path d="M623.7 419.8L714.8 396.2" stroke="#050505" stroke-width="2.2" fill="none"/>
<clipPath id="c22"><polygon points="480.5,283.5 489.6,278.5 498.7,424.6 493.5,419.0"/></clipPath>
<polygon points="480.5,283.5 489.6,278.5 498.7,424.6 493.5,419.0" fill="#5a5a5a"/>
<path clip-path="url(#c22)" d="M480.3 283.6L489.8 278.4M480.4 285.3L489.9 280.2M480.5 287.0L490.0 282.0M480.6 288.6L490.1 283.9M480.8 290.3L490.3 285.7M480.9 292.0L490.4 287.5M481.0 293.7L490.5 289.3M481.1 295.4L490.6 291.1M481.2 297.1L490.7 293.0M481.3 298.7L490.8 294.8M481.4 300.4L490.9 296.6M481.5 302.1L491.0 298.4M481.6 303.8L491.2 300.2M481.7 305.5L491.3 302.1M481.8 307.2L491.4 303.9M481.9 308.8L491.5 305.7M482.0 310.5L491.6 307.5M482.1 312.2L491.7 309.3M482.2 313.9L491.8 311.2M482.3 315.6L492.0 313.0M482.4 317.2L492.1 314.8M482.5 318.9L492.2 316.6M482.7 320.6L492.3 318.4M482.8 322.3L492.4 320.2M482.9 323.9L492.5 322.1M483.0 325.6L492.6 323.9M483.1 327.3L492.7 325.7M483.2 329.0L492.9 327.5M483.3 330.7L493.0 329.3M483.4 332.3L493.1 331.1M483.5 334.0L493.2 332.9M483.6 335.7L493.3 334.8M483.7 337.4L493.4 336.6M483.8 339.0L493.5 338.4M483.9 340.7L493.6 340.2M484.0 342.4L493.8 342.0M484.1 344.1L493.9 343.8M484.2 345.7L494.0 345.6M484.3 347.4L494.1 347.4M484.4 349.1L494.2 349.2M484.5 350.8L494.3 351.1M484.7 352.4L494.4 352.9M484.8 354.1L494.5 354.7M484.9 355.8L494.7 356.5M485.0 357.5L494.8 358.3M485.1 359.1L494.9 360.1M485.2 360.8L495.0 361.9M485.3 362.5L495.1 363.7M485.4 364.2L495.2 365.5M485.5 365.8L495.3 367.3M485.6 367.5L495.4 369.1M485.7 369.2L495.6 371.0M485.8 370.8L495.7 372.8M485.9 372.5L495.8 374.6M486.0 374.2L495.9 376.4M486.1 375.8L496.0 378.2M486.2 377.5L496.1 380.0M486.3 379.2L496.2 381.8M486.4 380.9L496.3 383.6M486.5 382.5L496.5 385.4M486.6 384.2L496.6 387.2M486.7 385.9L496.7 389.0M486.9 387.5L496.8 390.8M487.0 389.2L496.9 392.6M487.1 390.9L497.0 394.4M487.2 392.5L497.1 396.2M487.3 394.2L497.2 398.0M487.4 395.9L497.4 399.8M487.5 397.5L497.5 401.6M487.6 399.2L497.6 403.4M487.7 400.9L497.7 405.2M487.8 402.5L497.8 407.0M487.9 404.2L497.9 408.8M488.0 405.9L498.0 410.6M488.1 407.5L498.1 412.4M488.2 409.2L498.3 414.2M488.3 410.9L498.4 416.0M488.4 412.5L498.5 417.8M488.5 414.2L498.6 419.6M488.6 415.9L498.7 421.4M488.7 417.5L498.8 423.2M488.8 419.2L498.9 425.0M433.6 309.3L485.9 417.2M433.6 309.3L418.1 378.1M434.3 308.9L487.8 418.3M434.3 308.9L418.5 378.3M435.0 308.5L489.8 419.5M435.0 308.5L418.9 378.5M435.7 308.1L491.9 420.7M435.7 308.1L419.2 378.7M436.4 307.7L494.0 421.9M436.4 307.7L419.6 379.0M437.1 307.3L496.2 423.2M437.1 307.3L420.0 379.2M437.8 306.9L498.5 424.5M437.8 306.9L420.4 379.4M438.6 306.5L500.9 425.8M438.6 306.5L420.8 379.6M439.4 306.1L503.3 427.3M439.4 306.1L421.2 379.9M440.2 305.7L505.8 428.7M440.2 305.7L421.7 380.1M441.0 305.2L508.5 430.2M441.0 305.2L422.1 380.4M441.8 304.8L511.2 431.8M441.8 304.8L422.5 380.6M442.6 304.3L514.0 433.4M442.6 304.3L423.0 380.9M443.5 303.8L517.0 435.1M443.5 303.8L423.4 381.1M444.4 303.4L520.0 436.9M444.4 303.4L423.8 381.4M445.3 302.9L523.2 438.7M445.3 302.9L424.3 381.6M446.2 302.4L526.5 440.7M446.2 302.4L424.8 381.9M447.1 301.8L530.0 442.7M447.1 301.8L425.2 382.2M448.1 301.3L533.6 444.7M448.1 301.3L425.7 382.5M449.1 300.8L537.4 446.9M449.1 300.8L426.2 382.7M450.1 300.2L541.3 449.2M450.1 300.2L426.7 383.0M451.1 299.6L545.4 451.6M451.1 299.6L427.2 383.3M452.2 299.1L549.8 454.1M452.2 299.1L427.7 383.6M453.3 298.5L554.3 456.7M453.3 298.5L428.2 383.9M454.4 297.9L559.1 459.4M454.4 297.9L428.8 384.2M455.5 297.2L564.1 462.3M455.5 297.2L429.3 384.5M456.7 296.6L569.4 465.4M456.7 296.6L429.8 384.8M457.9 295.9L574.9 468.6M457.9 295.9L430.4 385.2M459.1 295.3L580.8 472.0M459.1 295.3L431.0 385.5M460.4 294.6L587.0 475.6M460.4 294.6L431.5 385.8M461.7 293.9L593.6 479.4M461.7 293.9L432.1 386.2M463.0 293.1L600.6 483.4M463.0 293.1L432.7 386.5M464.4 292.4L608.0 487.7M464.4 292.4L433.3 386.9M465.8 291.6L615.9 492.3M465.8 291.6L433.9 387.2M467.2 290.8L624.3 497.1M467.2 290.8L434.6 387.6M468.7 290.0L633.3 502.3M468.7 290.0L435.2 387.9M470.2 289.1L643.0 507.9M470.2 289.1L435.8 388.3M471.8 288.3L653.4 513.9M471.8 288.3L436.5 388.7M473.5 287.4L664.6 520.4M473.5 287.4L437.2 389.1M475.1 286.4L676.7 527.4M475.1 286.4L437.9 389.5M476.9 285.5L689.8 534.9M476.9 285.5L438.6 389.9M478.7 284.5L704.1 543.2M478.7 284.5L439.3 390.3M480.5 283.5L719.7 552.2M480.5 283.5L440.0 390.7M482.4 282.5L736.7 562.0M482.4 282.5L440.8 391.1M484.4 281.4L755.5 572.9M484.4 281.4L441.5 391.6M486.4 280.3L776.3 584.9M486.4 280.3L442.3 392.0M488.5 279.1L799.5 598.2M488.5 279.1L443.1 392.5M490.7 277.9L825.3 613.2M490.7 277.9L443.9 392.9M493.0 276.7L854.5 630.0M493.0 276.7L444.7 393.4M495.3 275.4L887.6 649.1M495.3 275.4L445.5 393.9M497.7 274.0L925.5 671.0M497.7 274.0L446.4 394.4M500.3 272.6L969.4 696.3M500.3 272.6L447.3 394.9M502.9 271.2L1020.6 725.9M502.9 271.2L448.2 395.4M505.6 269.7L1081.4 761.0M505.6 269.7L449.1 395.9M508.4 268.2L1154.6 803.2M508.4 268.2L450.0 396.5M511.4 266.5L1244.4 855.1M511.4 266.5L450.9 397.0M514.4 264.9L1357.2 920.2M514.4 264.9L451.9 397.6M517.6 263.1L1503.2 1004.5M517.6 263.1L452.9 398.2M521.0 261.3L1699.6 1117.9M521.0 261.3L453.9 398.8M524.5 259.3L1978.0 1278.6M524.5 259.3L455.0 399.4M528.1 257.3L2402.9 1523.9M528.1 257.3L456.1 400.0M531.9 255.2L3131.7 1944.7M531.9 255.2L457.1 400.6M535.9 253.0L4671.6 2833.7M535.9 253.0L458.3 401.3M540.1 250.7L10076.4 5954.0M540.1 250.7L459.4 401.9M544.5 248.3L-37735.2 -21648.6M544.5 248.3L460.6 402.6M549.2 245.8L-6067.9 -3366.4M549.2 245.8L461.8 403.3M554.1 243.1L-3148.2 -1680.8M554.1 243.1L463.0 404.0M559.2 240.3L-2051.5 -1047.7M559.2 240.3L464.3 404.7M564.6 237.3L-1476.7 -715.8M564.6 237.3L465.6 405.5M570.4 234.1L-1122.8 -511.5M570.4 234.1L466.9 406.3M576.5 230.8L-883.0 -373.1M576.5 230.8L468.3 407.1M582.9 227.2L-709.8 -273.1M582.9 227.2L469.7 407.9M589.8 223.4L-578.8 -197.5M589.8 223.4L471.2 408.7M597.1 219.4L-476.3 -138.3M597.1 219.4L472.6 409.6M604.9 215.1L-393.9 -90.7M604.9 215.1L474.2 410.4M613.2 210.6L-326.2 -51.6M613.2 210.6L475.8 411.4M622.2 205.7L-269.6 -18.9M622.2 205.7L477.4 412.3M631.8 200.4L-221.6 8.8M631.8 200.4L479.0 413.2M642.1 194.7L-180.3 32.6M642.1 194.7L480.8 414.2M653.3 188.5L-144.4 53.3M653.3 188.5L482.5 415.3M665.4 181.9L-113.0 71.4M665.4 181.9L484.4 416.3M678.6 174.6L-85.3 87.5M678.6 174.6L486.2 417.4M693.0 166.7L-60.6 101.7M693.0 166.7L488.2 418.5M708.8 158.1L-38.4 114.5M708.8 158.1L490.2 419.7M726.2 148.5L-18.5 126.0M726.2 148.5L492.3 420.9M745.4 137.9L-0.4 136.5M745.4 137.9L494.4 422.1M766.8 126.2L16.0 146.0M766.8 126.2L496.6 423.4M790.7 113.1L31.1 154.6M790.7 113.1L498.9 424.7M817.6 98.3L44.8 162.6M817.6 98.3L501.3 426.1" stroke="#050505" stroke-width="0.7" fill="none" opacity="1" shape-rendering="crispEdges"/>
<polygon points="489.6,279.0 562.6,266.0 559.0,259.5 495.0,266.5" fill="#1c1c1c"/>
<clipPath id="c23"><polygon points="489.6,278.5 562.6,265.4 563.3,281.0 505.2,291.5 509.1,407.6 565.2,397.2 566.5,408.9 498.7,424.6"/></clipPath>
<polygon points="489.6,278.5 562.6,265.4 563.3,281.0 505.2,291.5 509.1,407.6 565.2,397.2 566.5,408.9 498.7,424.6" fill="#c6c6c6"/>
<path clip-path="url(#c23)" d="M488.0 278.8L568.0 264.4M488.2 281.1L568.0 266.7M488.3 283.3L568.0 268.9M488.5 285.6L568.0 271.1M488.6 287.8L568.0 273.3M488.7 290.1L568.0 275.5M488.9 292.3L568.0 277.7M489.0 294.5L568.0 279.9M489.2 296.7L568.0 282.1M489.3 298.9L568.0 284.3M489.4 301.1L568.0 286.4M489.6 303.3L568.0 288.6M489.7 305.5L568.0 290.7M489.9 307.7L568.0 292.9M490.0 309.9L568.0 295.0M490.1 312.0L568.0 297.1M490.3 314.2L568.0 299.3M490.4 316.3L568.0 301.4M490.5 318.5L567.9 303.5M490.7 320.6L567.9 305.6M490.8 322.7L567.9 307.7M490.9 324.8L567.9 309.7M491.1 326.9L567.9 311.8M491.2 329.0L567.9 313.9M491.3 331.1L567.9 315.9M491.5 333.2L567.9 318.0M491.6 335.3L567.9 320.0M491.7 337.3L567.9 322.1M491.9 339.4L567.9 324.1M492.0 341.5L567.9 326.1M492.1 343.5L567.9 328.2M492.3 345.6L567.9 330.2M492.4 347.6L567.9 332.2M492.5 349.6L567.9 334.2M492.7 351.6L567.9 336.2M492.8 353.6L567.9 338.2M492.9 355.7L567.9 340.1M493.0 357.7L567.9 342.1M493.2 359.6L567.9 344.1M493.3 361.6L567.9 346.0M493.4 363.6L567.9 348.0M493.5 365.6L567.9 349.9M493.7 367.5L567.9 351.9M493.8 369.5L567.9 353.8M493.9 371.5L567.9 355.7M494.0 373.4L567.9 357.7M494.2 375.3L567.9 359.6M494.3 377.3L567.9 361.5M494.4 379.2L567.9 363.4M494.5 381.1L567.9 365.3M494.6 383.0L567.9 367.2M494.8 384.9L567.9 369.0M494.9 386.8L567.9 370.9M495.0 388.7L567.9 372.8M495.1 390.6L567.9 374.7M495.2 392.5L567.9 376.5M495.4 394.4L567.9 378.4M495.5 396.2L567.9 380.2M495.6 398.1L567.9 382.1M495.7 399.9L567.9 383.9M495.8 401.8L567.9 385.7M496.0 403.6L567.8 387.5M496.1 405.5L567.8 389.4M496.2 407.3L567.8 391.2M496.3 409.1L567.8 393.0M496.4 410.9L567.8 394.8M496.5 412.8L567.8 396.6M496.7 414.6L567.8 398.3M496.8 416.4L567.8 400.1M496.9 418.2L567.8 401.9M497.0 420.0L567.8 403.7M497.1 421.7L567.8 405.4M497.2 423.5L567.8 407.2M497.3 425.3L567.8 409.0M390.3 296.3L495.1 425.4M390.3 296.3L323.4 465.2M393.0 295.8L497.4 424.9M393.0 295.8L325.9 464.6M395.7 295.3L499.6 424.4M395.7 295.3L328.4 464.0M398.4 294.9L501.8 423.9M398.4 294.9L330.9 463.5M401.1 294.4L504.0 423.4M401.1 294.4L333.4 462.9M403.8 293.9L506.2 422.9M403.8 293.9L335.9 462.3M406.4 293.4L508.4 422.3M406.4 293.4L338.3 461.7M409.1 292.9L510.6 421.8M409.1 292.9L340.8 461.2M411.8 292.5L512.8 421.3M411.8 292.5L343.3 460.6M414.4 292.0L515.0 420.8M414.4 292.0L345.8 460.0M417.1 291.5L517.2 420.3M417.1 291.5L348.2 459.4M419.8 291.0L519.4 419.8M419.8 291.0L350.7 458.9M422.4 290.6L521.6 419.3M422.4 290.6L353.1 458.3M425.0 290.1L523.8 418.8M425.0 290.1L355.6 457.7M427.7 289.6L525.9 418.3M427.7 289.6L358.0 457.2M430.3 289.1L528.1 417.8M430.3 289.1L360.5 456.6M432.9 288.7L530.3 417.3M432.9 288.7L362.9 456.0M435.6 288.2L532.5 416.8M435.6 288.2L365.3 455.5M438.2 287.7L534.6 416.3M438.2 287.7L367.8 454.9M440.8 287.3L536.8 415.8M440.8 287.3L370.2 454.4M443.4 286.8L538.9 415.3M443.4 286.8L372.6 453.8M446.0 286.3L541.1 414.8M446.0 286.3L375.0 453.2M448.6 285.9L543.3 414.3M448.6 285.9L377.5 452.7M451.2 285.4L545.4 413.8M451.2 285.4L379.9 452.1M453.8 284.9L547.5 413.3M453.8 284.9L382.3 451.6M456.4 284.5L549.7 412.8M456.4 284.5L384.7 451.0M459.0 284.0L551.8 412.3M459.0 284.0L387.1 450.4M461.6 283.5L554.0 411.8M461.6 283.5L389.5 449.9M464.1 283.1L556.1 411.3M464.1 283.1L391.9 449.3M466.7 282.6L558.2 410.8M466.7 282.6L394.3 448.8M469.3 282.2L560.3 410.3M469.3 282.2L396.6 448.2M471.8 281.7L562.5 409.8M471.8 281.7L399.0 447.7M474.4 281.2L564.6 409.3M474.4 281.2L401.4 447.1M476.9 280.8L566.7 408.9M476.9 280.8L403.8 446.6M479.5 280.3L568.8 408.4M479.5 280.3L406.1 446.0M482.0 279.9L570.9 407.9M482.0 279.9L408.5 445.5M484.5 279.4L573.0 407.4M484.5 279.4L410.9 444.9M487.1 279.0L575.1 406.9M487.1 279.0L413.2 444.4M489.6 278.5L577.2 406.4M489.6 278.5L415.6 443.9M492.1 278.0L579.3 405.9M492.1 278.0L417.9 443.3M494.6 277.6L581.4 405.4M494.6 277.6L420.3 442.8M497.2 277.1L583.5 405.0M497.2 277.1L422.6 442.2M499.7 276.7L585.6 404.5M499.7 276.7L424.9 441.7M502.2 276.2L587.7 404.0M502.2 276.2L427.3 441.1M504.7 275.8L589.8 403.5M504.7 275.8L429.6 440.6M507.2 275.3L591.8 403.0M507.2 275.3L431.9 440.1M509.7 274.9L593.9 402.6M509.7 274.9L434.3 439.5M512.1 274.5L596.0 402.1M512.1 274.5L436.6 439.0M514.6 274.0L598.0 401.6M514.6 274.0L438.9 438.4M517.1 273.6L600.1 401.1M517.1 273.6L441.2 437.9M519.6 273.1L602.2 400.6M519.6 273.1L443.5 437.4M522.0 272.7L604.2 400.2M522.0 272.7L445.8 436.8M524.5 272.2L606.3 399.7M524.5 272.2L448.1 436.3M527.0 271.8L608.3 399.2M527.0 271.8L450.4 435.8M529.4 271.4L610.4 398.7M529.4 271.4L452.7 435.3M531.9 270.9L612.4 398.3M531.9 270.9L455.0 434.7M534.3 270.5L614.5 397.8M534.3 270.5L457.3 434.2M536.8 270.0L616.5 397.3M536.8 270.0L459.6 433.7M539.2 269.6L618.6 396.8M539.2 269.6L461.8 433.1M541.7 269.2L620.6 396.4M541.7 269.2L464.1 432.6M544.1 268.7L622.6 395.9M544.1 268.7L466.4 432.1M546.5 268.3L624.6 395.4M546.5 268.3L468.7 431.6M548.9 267.9L626.7 395.0M548.9 267.9L470.9 431.0M551.3 267.4L628.7 394.5M551.3 267.4L473.2 430.5M553.8 267.0L630.7 394.0M553.8 267.0L475.4 430.0M556.2 266.6L632.7 393.6M556.2 266.6L477.7 429.5M558.6 266.1L634.7 393.1M558.6 266.1L479.9 428.9M561.0 265.7L636.7 392.6M561.0 265.7L482.2 428.4M563.4 265.3L638.8 392.2M563.4 265.3L484.4 427.9M565.8 264.8L640.8 391.7M565.8 264.8L486.7 427.4M568.2 264.4L642.8 391.2M568.2 264.4L488.9 426.9M570.5 264.0L644.8 390.8M570.5 264.0L491.1 426.4M572.9 263.5L646.7 390.3M572.9 263.5L493.4 425.8M575.3 263.1L648.7 389.9M575.3 263.1L495.6 425.3M577.7 262.7L650.7 389.4M577.7 262.7L497.8 424.8M580.0 262.3L652.7 388.9M580.0 262.3L500.0 424.3M582.4 261.8L654.7 388.5M582.4 261.8L502.2 423.8M584.8 261.4L656.7 388.0M584.8 261.4L504.5 423.3M587.1 261.0L658.7 387.6M587.1 261.0L506.7 422.8M589.5 260.6L660.6 387.1M589.5 260.6L508.9 422.2M591.8 260.2L662.6 386.6M591.8 260.2L511.1 421.7M594.2 259.7L664.6 386.2M594.2 259.7L513.3 421.2M596.5 259.3L666.5 385.7M596.5 259.3L515.5 420.7M598.9 258.9L668.5 385.3M598.9 258.9L517.7 420.2M601.2 258.5L670.5 384.8M601.2 258.5L519.8 419.7M603.5 258.1L672.4 384.4M603.5 258.1L522.0 419.2M605.8 257.6L674.4 383.9M605.8 257.6L524.2 418.7M608.2 257.2L676.3 383.5M608.2 257.2L526.4 418.2M610.5 256.8L678.3 383.0M610.5 256.8L528.6 417.7M612.8 256.4L680.2 382.6M612.8 256.4L530.7 417.2M615.1 256.0L682.2 382.1M615.1 256.0L532.9 416.7M617.4 255.6L684.1 381.7M617.4 255.6L535.1 416.2M619.7 255.2L686.0 381.2M619.7 255.2L537.2 415.7M622.0 254.7L688.0 380.8M622.0 254.7L539.4 415.2M624.3 254.3L689.9 380.3M624.3 254.3L541.5 414.7M626.6 253.9L691.8 379.9M626.6 253.9L543.7 414.2M628.9 253.5L693.7 379.4M628.9 253.5L545.8 413.7M631.1 253.1L695.7 379.0M631.1 253.1L548.0 413.2M633.4 252.7L697.6 378.5M633.4 252.7L550.1 412.7M635.7 252.3L699.5 378.1M635.7 252.3L552.3 412.2M638.0 251.9L701.4 377.7M638.0 251.9L554.4 411.7M640.2 251.5L703.3 377.2M640.2 251.5L556.5 411.2M642.5 251.1L705.2 376.8M642.5 251.1L558.7 410.7M644.8 250.7L707.1 376.3M644.8 250.7L560.8 410.2M647.0 250.3L709.1 375.9M647.0 250.3L562.9 409.7M649.3 249.8L711.0 375.4M649.3 249.8L565.0 409.2M651.5 249.4L712.9 375.0M651.5 249.4L567.1 408.8M653.8 249.0L714.7 374.6M653.8 249.0L569.2 408.3" stroke="#141414" stroke-width="0.5" fill="none" opacity="1"/>
<clipPath id="c24"><polygon points="436.0,79.0 437.0,77.3 446.5,76.3 456.0,77.3 457.0,79.0 461.2,150.0 464.8,210.0 465.5,241.0 468.0,248.0 477.9,254.5 462.0,256.0 447.5,252.0 447.2,247.8 445.2,210.0 441.2,150.0"/></clipPath>
<polygon points="436.0,79.0 437.0,77.3 446.5,76.3 456.0,77.3 457.0,79.0 461.2,150.0 464.8,210.0 465.5,241.0 468.0,248.0 477.9,254.5 462.0,256.0 447.5,252.0 447.2,247.8 445.2,210.0 441.2,150.0" fill="#3e3e3e"/>
<path clip-path="url(#c24)" d="M435.6 76.0L457.4 76.0M435.7 77.7L457.5 77.7M435.8 79.5L457.6 79.5M435.9 81.2L457.7 81.2M436.0 82.9L457.8 82.9M436.1 84.7L457.9 84.7M436.2 86.4L458.0 86.4M436.3 88.1L458.1 88.1M436.3 89.9L458.2 89.9M436.4 91.6L458.3 91.6M436.5 93.3L458.4 93.3M436.6 95.1L458.5 95.1M436.7 96.8L458.6 96.8M436.8 98.5L458.7 98.5M436.9 100.2L458.8 100.2M437.0 102.0L458.9 102.0M437.1 103.7L459.0 103.7M437.2 105.4L459.1 105.4M437.3 107.2L459.2 107.2M437.4 108.9L459.2 108.9M437.5 110.6L459.3 110.6M437.6 112.4L459.4 112.4M437.7 114.1L459.5 114.1M437.8 115.8L459.6 115.8M437.9 117.6L459.7 117.6M438.0 119.3L459.8 119.3M438.1 121.0L459.9 121.0M438.2 122.8L460.0 122.8M438.3 124.5L460.1 124.5M438.4 126.2L460.2 126.2M438.5 128.0L460.3 128.0M438.6 129.7L460.4 129.7M438.7 131.4L460.5 131.4M438.8 133.2L460.6 133.2M438.9 134.9L460.7 134.9M438.9 136.6L460.8 136.6M439.0 138.4L460.9 138.4M439.1 140.1L461.0 140.1M439.2 141.8L461.1 141.8M439.3 143.5L461.2 143.5M439.4 145.3L461.3 145.3M439.5 147.0L461.4 147.0M439.6 148.7L461.5 148.7M439.7 150.5L461.6 150.5M439.8 152.2L461.7 152.2M439.9 153.9L461.8 153.9M440.0 155.7L461.8 155.7M440.1 157.4L461.9 157.4M440.2 159.1L462.0 159.1M440.3 160.9L462.1 160.9M440.4 162.6L462.2 162.6M440.5 164.3L462.3 164.3M440.6 166.1L462.4 166.1M440.7 167.8L462.5 167.8M440.8 169.5L462.6 169.5M440.9 171.3L462.7 171.3M441.0 173.0L462.8 173.0M441.1 174.7L462.9 174.7M441.2 176.5L463.0 176.5M441.3 178.2L463.1 178.2M441.4 179.9L463.2 179.9M441.4 181.7L463.3 181.7M441.5 183.4L463.4 183.4M441.6 185.1L463.5 185.1M441.7 186.9L463.6 186.9M441.8 188.6L463.7 188.6M441.9 190.3L463.8 190.3M442.0 192.0L463.9 192.0M442.1 193.8L464.0 193.8M442.2 195.5L464.1 195.5M442.3 197.2L464.2 197.2M442.4 199.0L464.3 199.0M442.5 200.7L464.3 200.7M442.6 202.4L464.4 202.4M442.7 204.2L464.5 204.2M442.8 205.9L464.6 205.9M442.9 207.6L464.7 207.6M443.0 209.4L464.8 209.4M443.1 211.1L464.9 211.1M443.2 212.8L465.0 212.8M443.3 214.6L465.1 214.6M443.4 216.3L465.2 216.3M443.5 218.0L465.3 218.0M443.6 219.8L465.4 219.8M443.7 221.5L465.5 221.5M443.8 223.2L465.6 223.2M443.9 225.0L465.7 225.0M444.0 226.7L465.8 226.7M444.0 228.4L465.9 228.4M444.1 230.2L466.0 230.2M444.2 231.9L466.1 231.9M444.3 233.6L466.2 233.6M444.4 235.3L466.3 235.3M444.5 237.1L466.4 237.1M444.6 238.8L466.5 238.8M444.7 240.5L466.6 240.5M444.8 242.3L466.7 242.3M444.9 244.0L466.8 244.0M445.0 245.7L466.9 245.7M445.1 247.5L466.9 247.5M445.2 249.2L467.0 249.2M445.3 250.9L467.1 250.9M445.4 252.7L467.2 252.7M445.5 254.4L467.3 254.4M445.6 256.1L467.4 256.1M330.0 76.0L443.9 256.0M330.0 76.0L236.1 256.0M332.0 76.0L445.9 256.0M332.0 76.0L238.1 256.0M334.0 76.0L447.9 256.0M334.0 76.0L240.1 256.0M336.0 76.0L449.9 256.0M336.0 76.0L242.1 256.0M338.0 76.0L451.9 256.0M338.0 76.0L244.1 256.0M340.0 76.0L453.9 256.0M340.0 76.0L246.1 256.0M342.0 76.0L455.9 256.0M342.0 76.0L248.1 256.0M344.0 76.0L457.9 256.0M344.0 76.0L250.1 256.0M346.0 76.0L459.9 256.0M346.0 76.0L252.1 256.0M348.0 76.0L461.9 256.0M348.0 76.0L254.1 256.0M350.0 76.0L463.9 256.0M350.0 76.0L256.1 256.0M352.0 76.0L465.9 256.0M352.0 76.0L258.1 256.0M354.0 76.0L467.9 256.0M354.0 76.0L260.1 256.0M356.0 76.0L469.9 256.0M356.0 76.0L262.1 256.0M358.0 76.0L471.9 256.0M358.0 76.0L264.1 256.0M360.0 76.0L473.9 256.0M360.0 76.0L266.1 256.0M362.0 76.0L475.9 256.0M362.0 76.0L268.1 256.0M364.0 76.0L477.9 256.0M364.0 76.0L270.1 256.0M366.0 76.0L479.9 256.0M366.0 76.0L272.1 256.0M368.0 76.0L481.9 256.0M368.0 76.0L274.1 256.0M370.0 76.0L483.9 256.0M370.0 76.0L276.1 256.0M372.0 76.0L485.9 256.0M372.0 76.0L278.1 256.0M374.0 76.0L487.9 256.0M374.0 76.0L280.1 256.0M376.0 76.0L489.9 256.0M376.0 76.0L282.1 256.0M378.0 76.0L491.9 256.0M378.0 76.0L284.1 256.0M380.0 76.0L493.9 256.0M380.0 76.0L286.1 256.0M382.0 76.0L495.9 256.0M382.0 76.0L288.1 256.0M384.0 76.0L497.9 256.0M384.0 76.0L290.1 256.0M386.0 76.0L499.9 256.0M386.0 76.0L292.1 256.0M388.0 76.0L501.9 256.0M388.0 76.0L294.1 256.0M390.0 76.0L503.9 256.0M390.0 76.0L296.1 256.0M392.0 76.0L505.9 256.0M392.0 76.0L298.1 256.0M394.0 76.0L507.9 256.0M394.0 76.0L300.1 256.0M396.0 76.0L509.9 256.0M396.0 76.0L302.1 256.0M398.0 76.0L511.9 256.0M398.0 76.0L304.1 256.0M400.0 76.0L513.9 256.0M400.0 76.0L306.1 256.0M402.0 76.0L515.9 256.0M402.0 76.0L308.1 256.0M404.0 76.0L517.9 256.0M404.0 76.0L310.1 256.0M406.0 76.0L519.9 256.0M406.0 76.0L312.1 256.0M408.0 76.0L521.9 256.0M408.0 76.0L314.1 256.0M410.0 76.0L523.9 256.0M410.0 76.0L316.1 256.0M412.0 76.0L525.9 256.0M412.0 76.0L318.1 256.0M414.0 76.0L527.9 256.0M414.0 76.0L320.1 256.0M416.0 76.0L529.9 256.0M416.0 76.0L322.1 256.0M418.0 76.0L531.9 256.0M418.0 76.0L324.1 256.0M420.0 76.0L533.9 256.0M420.0 76.0L326.1 256.0M422.0 76.0L535.9 256.0M422.0 76.0L328.1 256.0M424.0 76.0L537.9 256.0M424.0 76.0L330.1 256.0M426.0 76.0L539.9 256.0M426.0 76.0L332.1 256.0M428.0 76.0L541.9 256.0M428.0 76.0L334.1 256.0M430.0 76.0L543.9 256.0M430.0 76.0L336.1 256.0M432.0 76.0L545.9 256.0M432.0 76.0L338.1 256.0M434.0 76.0L547.9 256.0M434.0 76.0L340.1 256.0M436.0 76.0L549.9 256.0M436.0 76.0L342.1 256.0M438.0 76.0L551.9 256.0M438.0 76.0L344.1 256.0M440.0 76.0L553.9 256.0M440.0 76.0L346.1 256.0M442.0 76.0L555.9 256.0M442.0 76.0L348.1 256.0M444.0 76.0L557.9 256.0M444.0 76.0L350.1 256.0M446.0 76.0L559.9 256.0M446.0 76.0L352.1 256.0M448.0 76.0L561.9 256.0M448.0 76.0L354.1 256.0M450.0 76.0L563.9 256.0M450.0 76.0L356.1 256.0M452.0 76.0L565.9 256.0M452.0 76.0L358.1 256.0M454.0 76.0L567.9 256.0M454.0 76.0L360.1 256.0M456.0 76.0L569.9 256.0M456.0 76.0L362.1 256.0M458.0 76.0L571.9 256.0M458.0 76.0L364.1 256.0M460.0 76.0L573.9 256.0M460.0 76.0L366.1 256.0M462.0 76.0L575.9 256.0M462.0 76.0L368.1 256.0M464.0 76.0L577.9 256.0M464.0 76.0L370.1 256.0M466.0 76.0L579.9 256.0M466.0 76.0L372.1 256.0M468.0 76.0L581.9 256.0M468.0 76.0L374.1 256.0M470.0 76.0L583.9 256.0M470.0 76.0L376.1 256.0M472.0 76.0L585.9 256.0M472.0 76.0L378.1 256.0M474.0 76.0L587.9 256.0M474.0 76.0L380.1 256.0M476.0 76.0L589.9 256.0M476.0 76.0L382.1 256.0M478.0 76.0L591.9 256.0M478.0 76.0L384.1 256.0M480.0 76.0L593.9 256.0M480.0 76.0L386.1 256.0M482.0 76.0L595.9 256.0M482.0 76.0L388.1 256.0M484.0 76.0L597.9 256.0M484.0 76.0L390.1 256.0M486.0 76.0L599.9 256.0M486.0 76.0L392.1 256.0M488.0 76.0L601.9 256.0M488.0 76.0L394.1 256.0M490.0 76.0L603.9 256.0M490.0 76.0L396.1 256.0M492.0 76.0L605.9 256.0M492.0 76.0L398.1 256.0M494.0 76.0L607.9 256.0M494.0 76.0L400.1 256.0M496.0 76.0L609.9 256.0M496.0 76.0L402.1 256.0M498.0 76.0L611.9 256.0M498.0 76.0L404.1 256.0M500.0 76.0L613.9 256.0M500.0 76.0L406.1 256.0M502.0 76.0L615.9 256.0M502.0 76.0L408.1 256.0M504.0 76.0L617.9 256.0M504.0 76.0L410.1 256.0M506.0 76.0L619.9 256.0M506.0 76.0L412.1 256.0M508.0 76.0L621.9 256.0M508.0 76.0L414.1 256.0M510.0 76.0L623.9 256.0M510.0 76.0L416.1 256.0M512.0 76.0L625.9 256.0M512.0 76.0L418.1 256.0M514.0 76.0L627.9 256.0M514.0 76.0L420.1 256.0M516.0 76.0L629.9 256.0M516.0 76.0L422.1 256.0M518.0 76.0L631.9 256.0M518.0 76.0L424.1 256.0M520.0 76.0L633.9 256.0M520.0 76.0L426.1 256.0M522.0 76.0L635.9 256.0M522.0 76.0L428.1 256.0M524.0 76.0L637.9 256.0M524.0 76.0L430.1 256.0M526.0 76.0L639.9 256.0M526.0 76.0L432.1 256.0M528.0 76.0L641.9 256.0M528.0 76.0L434.1 256.0M530.0 76.0L643.9 256.0M530.0 76.0L436.1 256.0M532.0 76.0L645.9 256.0M532.0 76.0L438.1 256.0M534.0 76.0L647.9 256.0M534.0 76.0L440.1 256.0M536.0 76.0L649.9 256.0M536.0 76.0L442.1 256.0M538.0 76.0L651.9 256.0M538.0 76.0L444.1 256.0M540.0 76.0L653.9 256.0M540.0 76.0L446.1 256.0M542.0 76.0L655.9 256.0M542.0 76.0L448.1 256.0M544.0 76.0L657.9 256.0M544.0 76.0L450.1 256.0M546.0 76.0L659.9 256.0M546.0 76.0L452.1 256.0M548.0 76.0L661.9 256.0M548.0 76.0L454.1 256.0M550.0 76.0L663.9 256.0M550.0 76.0L456.1 256.0M552.0 76.0L665.9 256.0M552.0 76.0L458.1 256.0M554.0 76.0L667.9 256.0M554.0 76.0L460.1 256.0M556.0 76.0L669.9 256.0M556.0 76.0L462.1 256.0M558.0 76.0L671.9 256.0M558.0 76.0L464.1 256.0M560.0 76.0L673.9 256.0M560.0 76.0L466.1 256.0M562.0 76.0L675.9 256.0M562.0 76.0L468.1 256.0" stroke="#060606" stroke-width="0.7" fill="none" opacity="1" shape-rendering="crispEdges"/>
<polygon points="436.0,79.0 439.0,79.0 450.5,252.0 447.5,252.0 445.2,210.0 441.2,150.0" fill="#0a0a0a" opacity="0.55"/>
<polygon points="455.0,77.5 457.0,79.0 461.2,150.0 464.8,210.0 465.5,241.0 463.5,241.0 459.2,150.0" fill="#0a0a0a" opacity="0.45"/>
<g>
<path d="M206.3 536.3L205.5 490" stroke="#3a3aff" stroke-width="0.6"/>
<path d="M206.3 536.3L245 528.3" stroke="#f05050" stroke-width="0.6"/>
<path d="M206.3 536.3L188 524" stroke="#40d040" stroke-width="0.6"/>
<polygon points="205.5,480.9 201,492.2 210.2,492.2" fill="#0a0ae6"/>
<polygon points="253.5,526.8 243,524.4 246.3,532" fill="#8c0a0a"/>
<circle cx="186.3" cy="523" r="3.9" fill="#10c810"/>
<g font-family="'Liberation Sans',sans-serif" font-style="italic" font-size="18.4" stroke-width="0.35">
<text x="209.6" y="486.6" fill="#222" textLength="9.4" lengthAdjust="spacingAndGlyphs">Z</text><text x="208.8" y="485.8" fill="#fff" stroke="#fff" textLength="9.4" lengthAdjust="spacingAndGlyphs">Z</text>
<text x="190" y="517.3" fill="#222">Y</text><text x="189.2" y="516.5" fill="#fff" stroke="#fff">Y</text>
<text x="248.6" y="522.8" fill="#222">X</text><text x="247.8" y="522" fill="#fff" stroke="#fff">X</text>
</g></g>
</svg>
<!--/MODEL-->
</div>

<div id="rpanel" class="abs">
 <div class="abs h">导入面网格</div>
 <div id="btn" class="abs">选择文件</div>
</div>
<div id="bpanel" class="abs">
<svg class="abs" style="left:0;top:0" width="1181" height="45" viewBox="78 643 1181 45">
 <g fill="#fff" opacity="0.88" font-family="'Liberation Sans','Noto Sans CJK SC',sans-serif" font-weight="900">
 <ellipse cx="1021.8" cy="664.6" rx="30.8" ry="10.8" fill="none" stroke="#fff" stroke-width="2.8"/>
 <text x="1000.5" y="669.4" font-size="12" textLength="45.5" lengthAdjust="spacingAndGlyphs" font-family="'Liberation Sans',sans-serif" font-weight="bold" stroke="#fff" stroke-width="0.6">CATARC</text>
 <text x="1067.6 1090.9 1114.2 1137.2" y="673.4" font-size="22.9">中汽中心</text>
 <rect x="1167.8" y="660.4" width="1.3" height="10.6"/>
 <text x="1174 1199.8 1225.4" y="673.4" font-size="23.6">工程院</text>
 </g>
</svg>
</div>
</body>
</html>
